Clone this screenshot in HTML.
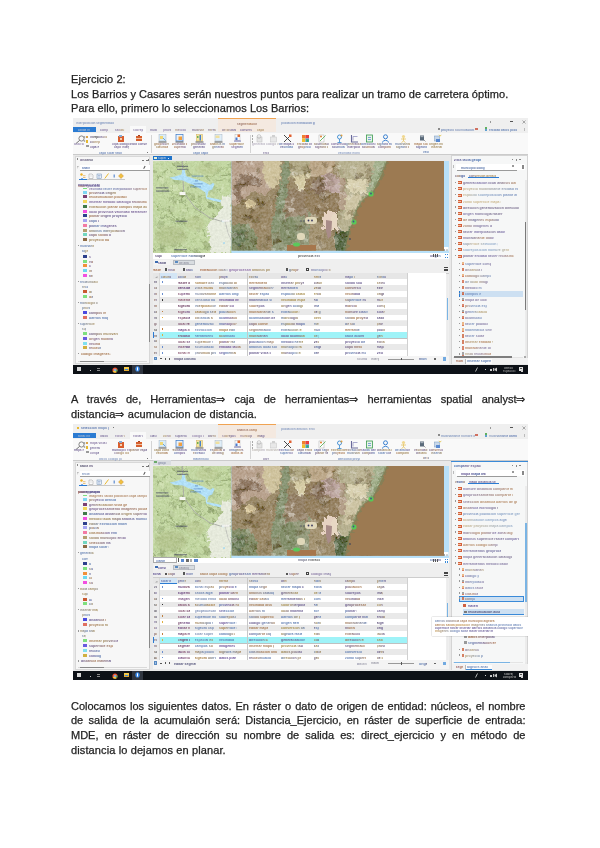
<!DOCTYPE html><html><head><meta charset="utf-8"><style>
html,body{margin:0;padding:0;background:#fff;}
body{width:600px;height:848px;position:relative;overflow:hidden;font-family:"Liberation Sans",sans-serif;color:#141414;}
.ss{position:absolute;width:455px;height:256px;overflow:hidden;}
.ss div{position:absolute;}
.t{position:absolute;margin:0;white-space:nowrap;overflow:hidden;line-height:1;font-weight:bold;-webkit-background-clip:text;background-clip:text;color:transparent;font-family:"Liberation Sans",sans-serif;}
.p{position:absolute;left:71.2px;font-size:11px;line-height:14px;white-space:nowrap;will-change:transform;-webkit-text-stroke:0.25px #222;color:#222;}
.j{width:454.5px;text-align:justify;text-align-last:justify;}
</style></head><body>
<div class="p" style="top:72px;letter-spacing:0.08px">Ejercicio 2:</div>
<div class="p" style="top:87px;letter-spacing:0.058px">Los Barrios y Casares serán nuestros puntos para realizar un tramo de carretera óptimo.</div>
<div class="p" style="top:101.2px;letter-spacing:0.045px">Para ello, primero lo seleccionamos Los Barrios:</div>
<div class="ss" style="left:73px;top:118px;">
<div style="left:0.00px;top:0.00px;width:455.00px;height:15.00px;background:#efefef;"></div>
<div style="left:0.00px;top:15.00px;width:455.00px;height:21.00px;background:#f9f9f9;"></div>
<div style="left:0.00px;top:35.50px;width:455.00px;height:1.20px;background:#cbcbcb;"></div>
<div style="left:0.00px;top:36.50px;width:455.00px;height:210.00px;background:#e9e9e9;"></div>
<p class="t" style="left:3.0px;top:3.7px;width:38.0px;font-size:3.1px;background-image:linear-gradient(90deg,#8899be,#758dbb,#758dbb);opacity:0.96">interpolación segmentación </p>
<div style="left:0.00px;top:8.60px;width:23.00px;height:5.20px;background:#2b7bd2;"></div>
<p class="t" style="left:4.5px;top:10.8px;width:12.0px;font-size:3.1px;background-image:linear-gradient(90deg,#afbed2,#afbed2,#9cb0cc);opacity:1.00">salida mat</p>
<div style="left:57.00px;top:8.00px;width:16.00px;height:7.50px;background:#f9f9f9;"></div>
<p class="t" style="left:27.0px;top:11.2px;width:8.0px;font-size:3.1px;background-image:linear-gradient(90deg,#675a8e,#8875a3);opacity:0.88">compart</p>
<p class="t" style="left:42.0px;top:11.2px;width:10.0px;font-size:3.1px;background-image:linear-gradient(90deg,#675a8e,#8875a3,#a6885a,#a6885a);opacity:0.88">salida c</p>
<p class="t" style="left:60.0px;top:11.2px;width:10.0px;font-size:3.1px;background-image:linear-gradient(90deg,#8875a3,#8375a2,#8875a3,#675a8e);opacity:0.88">sobrepos</p>
<p class="t" style="left:77.0px;top:11.2px;width:7.0px;font-size:3.1px;background-image:linear-gradient(90deg,#675a8e,#675a8e);opacity:0.88">multiv</p>
<p class="t" style="left:90.0px;top:11.2px;width:8.0px;font-size:3.1px;background-image:linear-gradient(90deg,#8875a3,#675a8e);opacity:0.88">provinc</p>
<p class="t" style="left:102.0px;top:11.2px;width:12.0px;font-size:3.1px;background-image:linear-gradient(90deg,#a6885a,#8875a3,#8375a2);opacity:0.88">método loc</p>
<p class="t" style="left:119.0px;top:11.2px;width:12.0px;font-size:3.1px;background-image:linear-gradient(90deg,#5c4e86,#a6885a);opacity:0.88">multivaria</p>
<p class="t" style="left:135.0px;top:11.2px;width:8.0px;font-size:3.1px;background-image:linear-gradient(90deg,#675a8e,#a6885a,#5c4e86,#a6885a);opacity:0.88">herrami</p>
<div style="left:145.20px;top:0.00px;width:58.00px;height:14.00px;background:#f4e9e0;"></div>
<div style="left:145.20px;top:0.00px;width:58.00px;height:1.10px;background:#f0a352;"></div>
<p class="t" style="left:164.0px;top:4.6px;width:20.0px;font-size:3.1px;background-image:linear-gradient(90deg,#956c5f,#956c5f,#aa754c,#956c5f);opacity:0.96">segmentación ac</p>
<p class="t" style="left:149.0px;top:11.2px;width:14.0px;font-size:3.1px;background-image:linear-gradient(90deg,#675a8e,#a6885a,#675a8e,#5c4e86);opacity:0.88">de distanci</p>
<p class="t" style="left:167.0px;top:11.2px;width:12.0px;font-size:3.1px;background-image:linear-gradient(90deg,#675a8e,#675a8e);opacity:0.88">conversión</p>
<p class="t" style="left:184.0px;top:11.2px;width:8.0px;font-size:3.1px;background-image:linear-gradient(90deg,#a6885a,#a6885a);opacity:0.88">capa ca</p>
<p class="t" style="left:208.0px;top:4.1px;width:34.0px;font-size:3.1px;background-image:linear-gradient(90deg,#758dbb,#4c6baa);opacity:0.88">población extracción gen</p>
<div style="left:416.50px;top:3.20px;width:1.00px;height:1.40px;background:#999;"></div>
<div style="left:437.30px;top:3.20px;width:2.60px;height:1.00px;background:#555;"></div>
<svg style="position:absolute;left:448.5px;top:2px" width="4" height="4"><path d="M0.5 0.5 L3.5 3.5 M3.5 0.5 L0.5 3.5" stroke="#777" stroke-width="0.6"/></svg>
<div style="left:365.00px;top:10.00px;width:1.50px;height:1.80px;background:#8a8a8a;"></div>
<p class="t" style="left:368.0px;top:10.7px;width:34.0px;font-size:3.1px;background-image:linear-gradient(90deg,#5a79b0,#8899be,#5a79b0);opacity:0.96">proyecto acumulación com</p>
<div style="left:402.00px;top:10.00px;width:3.00px;height:2.00px;background:#d07060;"></div>
<div style="left:412.00px;top:9.20px;width:1.50px;height:1.50px;background:#60b060;"></div>
<div style="left:412.00px;top:11.20px;width:1.50px;height:1.50px;background:#60a0d0;"></div>
<p class="t" style="left:416.0px;top:10.7px;width:28.0px;font-size:3.1px;background-image:linear-gradient(90deg,#5a79b0,#5a79b0);opacity:0.96">entidad datos poblac</p>
<div style="left:451.00px;top:9.50px;width:0.80px;height:3.00px;background:#bbb;"></div>
<div style="left:455.00px;top:10.50px;width:1.00px;height:1.00px;background:#bbb;"></div>
<div style="left:77.60px;top:16.50px;width:0.70px;height:18.00px;background:#d4d4d4;"></div>
<div style="left:176.80px;top:16.50px;width:0.70px;height:18.00px;background:#d4d4d4;"></div>
<svg style="position:absolute;left:1.5px;top:16.5px" width="11" height="9"><circle cx="6.5" cy="3.5" r="2.6" fill="none" stroke="#6a6a6a" stroke-width="0.8"/><line x1="4.6" y1="5.4" x2="1" y2="8.5" stroke="#6a6a6a" stroke-width="0.9"/><circle cx="9.5" cy="2" r="0.8" fill="#888"/><circle cx="9.5" cy="6" r="0.8" fill="#888"/></svg>
<p class="t" style="left:0.5px;top:25.0px;width:10.0px;font-size:3.1px;background-image:linear-gradient(90deg,#8375a2,#8875a3,#8375a2);opacity:0.96">local sa</p>
<div style="left:13.00px;top:18.00px;width:2.20px;height:1.50px;background:#d9a24a;"></div>
<p class="t" style="left:16.5px;top:18.3px;width:17.0px;font-size:3.1px;background-image:linear-gradient(90deg,#8375a2,#2b2b2b,#8375a2,#a6885a);opacity:1.00">interpolación</p>
<div style="left:13.00px;top:22.20px;width:2.20px;height:2.50px;background:#e5b830;"></div>
<p class="t" style="left:16.5px;top:22.9px;width:10.0px;font-size:3.1px;background-image:linear-gradient(90deg,#675a8e,#a6885a,#a6885a);opacity:0.96">sobrepos</p>
<div style="left:13.00px;top:27.30px;width:2.50px;height:2.00px;background:#9a9a9a;"></div>
<p class="t" style="left:16.5px;top:27.9px;width:9.0px;font-size:3.1px;background-image:linear-gradient(90deg,#8875a3,#5c4e86,#675a8e);opacity:0.96">capa her</p>
<div style="left:44.50px;top:18.30px;width:6.00px;height:5.60px;background:#d95f2e;"></div>
<div style="left:46.00px;top:16.80px;width:3.00px;height:1.60px;background:#e0e8f0;border:0.5px solid #8aaad0;box-sizing:border-box"></div>
<div style="left:47.00px;top:20.00px;width:1.50px;height:1.80px;background:#f4d0b0;"></div>
<p class="t" style="left:38.5px;top:25.0px;width:19.0px;font-size:3.1px;background-image:linear-gradient(90deg,#8875a3,#675a8e,#675a8e,#8375a2);opacity:0.96">capa código ex</p>
<p class="t" style="left:41.0px;top:28.0px;width:15.0px;font-size:3.1px;background-image:linear-gradient(90deg,#675a8e,#8875a3,#5c4e86);opacity:0.96">capa interpo</p>
<div style="left:62.50px;top:18.20px;width:6.50px;height:5.00px;background:#d6602e;"></div>
<div style="left:64.50px;top:17.00px;width:2.50px;height:1.40px;background:#a04020;"></div>
<div style="left:62.50px;top:20.00px;width:6.50px;height:0.60px;background:#f0c0a0;"></div>
<p class="t" style="left:57.0px;top:25.0px;width:17.0px;font-size:3.1px;background-image:linear-gradient(90deg,#675a8e,#675a8e);opacity:0.96">vista convers</p>
<p class="t" style="left:26.0px;top:33.7px;width:23.0px;font-size:3.1px;background-image:linear-gradient(90deg,#5a79b0,#4c6baa);opacity:0.88">capa solar vecind</p>
<div style="left:74.00px;top:33.80px;width:1.00px;height:1.00px;background:#777;"></div>
<svg style="position:absolute;left:84.5px;top:15.8px" width="9" height="9" viewBox="0 0 9 9"><rect x="1" y="0.5" width="7" height="6.5" fill="#d8ecf8" stroke="#9ab" stroke-width="0.4"/><rect x="2" y="2" width="3" height="3" fill="#f0d878"/><path d="M5 4 L7.5 6.5" stroke="#4a90d0" stroke-width="0.8"/><rect x="0.5" y="7.6" width="8" height="0.8" fill="#333"/></svg>
<p class="t" style="left:81.0px;top:25.0px;width:15.0px;font-size:3.1px;background-image:linear-gradient(90deg,#9c8251,#a6754c,#755f95,#9c8251);opacity:0.96">geoprocesami</p>
<p class="t" style="left:83.0px;top:28.0px;width:12.0px;font-size:3.1px;background-image:linear-gradient(90deg,#9c8251,#a6754c);opacity:0.96">clasificac</p>
<svg style="position:absolute;left:102.0px;top:15.8px" width="9" height="9" viewBox="0 0 9 9"><rect x="1" y="0.5" width="7" height="6.5" fill="#eaf2fa" stroke="#3a7ac8" stroke-width="0.7"/><rect x="3.5" y="2.5" width="3.5" height="3.5" fill="#f0a040"/><rect x="0.5" y="7.6" width="8" height="0.8" fill="#333"/></svg>
<p class="t" style="left:98.5px;top:25.0px;width:15.0px;font-size:3.1px;background-image:linear-gradient(90deg,#a6754c,#755f95,#a6754c);opacity:0.96">vecindad bar</p>
<p class="t" style="left:100.5px;top:28.0px;width:12.0px;font-size:3.1px;background-image:linear-gradient(90deg,#a6754c,#755f95);opacity:0.96">superficie</p>
<svg style="position:absolute;left:121.5px;top:15.8px" width="9" height="9" viewBox="0 0 9 9"><rect x="1.5" y="0.5" width="6" height="6.5" fill="#f4e6a0" stroke="#c8a040" stroke-width="0.4"/><rect x="4.5" y="1" width="1.5" height="5.5" fill="#4a80c8"/><rect x="2" y="2" width="1.5" height="2" fill="#70b050"/><rect x="0.5" y="7.6" width="8" height="0.8" fill="#333"/></svg>
<p class="t" style="left:118.0px;top:25.0px;width:15.0px;font-size:3.1px;background-image:linear-gradient(90deg,#9c8251,#755f95,#675a8e);opacity:0.96">provincia ta</p>
<p class="t" style="left:120.0px;top:28.0px;width:12.0px;font-size:3.1px;background-image:linear-gradient(90deg,#675a8e,#675a8e);opacity:0.96">generaliza</p>
<svg style="position:absolute;left:140.5px;top:15.8px" width="9" height="9" viewBox="0 0 9 9"><rect x="1" y="0.5" width="7" height="6.5" fill="#e0eef8" stroke="#9ab" stroke-width="0.4"/><rect x="1.5" y="1.5" width="4" height="2.5" fill="#f0e0a0"/><rect x="0.5" y="7.6" width="8" height="0.8" fill="#333"/></svg>
<p class="t" style="left:137.0px;top:25.0px;width:15.0px;font-size:3.1px;background-image:linear-gradient(90deg,#a6754c,#9c8251,#5a79b0);opacity:0.96">análisis mat</p>
<p class="t" style="left:139.0px;top:28.0px;width:12.0px;font-size:3.1px;background-image:linear-gradient(90deg,#9c8251,#5a79b0,#755f95,#a6754c);opacity:0.96">generaliza</p>
<svg style="position:absolute;left:159.8px;top:15.8px" width="9" height="9" viewBox="0 0 9 9"><rect x="2" y="0.5" width="5" height="6" fill="#fafafa" stroke="#aaa" stroke-width="0.4"/><rect x="4.5" y="0.5" width="2.5" height="2.5" fill="#e06a30"/><rect x="2.5" y="3.5" width="2" height="2.5" fill="#4a7ad0"/><rect x="1" y="6.6" width="7" height="0.9" fill="#6a6aaa"/></svg>
<p class="t" style="left:156.3px;top:25.0px;width:15.0px;font-size:3.1px;background-image:linear-gradient(90deg,#a6754c,#9c8251);opacity:0.96">superficie d</p>
<p class="t" style="left:158.3px;top:28.0px;width:12.0px;font-size:3.1px;background-image:linear-gradient(90deg,#755f95,#755f95,#675a8e,#5a79b0);opacity:0.96">segmentaci</p>
<p class="t" style="left:120.0px;top:33.7px;width:16.0px;font-size:3.1px;background-image:linear-gradient(90deg,#5a79b0,#4c6baa);opacity:0.88">capa capa no</p>
<div style="left:179.00px;top:17.00px;width:0.70px;height:1.50px;background:#aaa;"></div>
<div style="left:179.00px;top:20.00px;width:0.70px;height:1.50px;background:#aaa;"></div>
<div style="left:179.00px;top:23.00px;width:0.70px;height:1.50px;background:#aaa;"></div>
<svg style="position:absolute;left:181.5px;top:16px" width="9" height="9" viewBox="0 0 9 9"><rect x="2" y="3" width="5" height="5" fill="#e4e4e4" stroke="#bbb" stroke-width="0.5"/><circle cx="4" cy="2.5" r="1.8" fill="none" stroke="#b8b8b8" stroke-width="0.7"/></svg>
<svg style="position:absolute;left:195.5px;top:16px" width="9" height="9" viewBox="0 0 9 9"><rect x="1.5" y="3" width="6" height="5" fill="#e8e8e8" stroke="#c4c4c4" stroke-width="0.5"/><rect x="3" y="1" width="3" height="2" fill="#d0d0d0"/></svg>
<p class="t" style="left:179.0px;top:25.0px;width:13.0px;font-size:3.1px;background-image:linear-gradient(90deg,#a39cb0,#a39cb0,#a39cb0);opacity:0.80">generaliza</p>
<p class="t" style="left:193.0px;top:25.0px;width:13.0px;font-size:3.1px;background-image:linear-gradient(90deg,#a39cb0,#a39cb0,#aaa39c);opacity:0.80">código vis</p>
<p class="t" style="left:190.0px;top:33.7px;width:6.0px;font-size:3.1px;background-image:linear-gradient(90deg,#82759c,#82759c,#82759c);opacity:0.96">entida</p>
<svg style="position:absolute;left:209.5px;top:15.8px" width="9" height="9" viewBox="0 0 9 9"><path d="M1 1 L8 8 M1 8 L8 1" stroke="#333" stroke-width="0.9"/><rect x="6" y="0.5" width="2.5" height="2.5" fill="#e06030"/></svg>
<p class="t" style="left:206.0px;top:25.0px;width:15.0px;font-size:3.1px;background-image:linear-gradient(90deg,#5a79b0,#675a8e,#675a8e,#755f95);opacity:0.96">de mapa catá</p>
<p class="t" style="left:207.0px;top:28.0px;width:13.0px;font-size:3.1px;background-image:linear-gradient(90deg,#675a8e,#5a79b0,#5a79b0);opacity:0.96">vecindad d</p>
<svg style="position:absolute;left:227.5px;top:15.8px" width="9" height="9" viewBox="0 0 9 9"><rect x="1" y="1" width="3.5" height="3.5" fill="#f08030"/><rect x="4.5" y="1" width="3.5" height="3.5" fill="#e84040"/><rect x="1" y="4.5" width="3.5" height="3.5" fill="#f0c030"/><rect x="4.5" y="4.5" width="3.5" height="3.5" fill="#40a0e0"/><rect x="5.5" y="5.5" width="2" height="2" fill="#40b050"/></svg>
<p class="t" style="left:224.0px;top:25.0px;width:15.0px;font-size:3.1px;background-image:linear-gradient(90deg,#9c8251,#755f95);opacity:0.96">entidad dist</p>
<p class="t" style="left:225.0px;top:28.0px;width:13.0px;font-size:3.1px;background-image:linear-gradient(90deg,#675a8e,#a6754c,#5a79b0,#5a79b0);opacity:0.96">geoprocesa</p>
<svg style="position:absolute;left:244.5px;top:15.8px" width="9" height="9" viewBox="0 0 9 9"><rect x="1" y="1" width="5" height="7" fill="#fff" stroke="#999" stroke-width="0.4"/><path d="M2 7 L7.5 1.5" stroke="#60b060" stroke-width="0.9"/><circle cx="3" cy="2.5" r="1" fill="#e08030"/></svg>
<p class="t" style="left:241.0px;top:25.0px;width:15.0px;font-size:3.1px;background-image:linear-gradient(90deg,#9c8251,#675a8e,#9c8251,#675a8e);opacity:0.96">acumulación </p>
<p class="t" style="left:242.0px;top:28.0px;width:13.0px;font-size:3.1px;background-image:linear-gradient(90deg,#755f95,#9c8251);opacity:0.96">álgebra cl</p>
<svg style="position:absolute;left:261.5px;top:15.8px" width="9" height="9" viewBox="0 0 9 9"><circle cx="4.5" cy="3" r="2" fill="none" stroke="#3a8ad0" stroke-width="0.9"/><path d="M4.5 5 L4.5 8.5 M2.5 8.5 L6.5 8.5" stroke="#3a8ad0" stroke-width="0.8"/><circle cx="6.5" cy="1.5" r="1" fill="#e0a040"/></svg>
<p class="t" style="left:258.0px;top:25.0px;width:15.0px;font-size:3.1px;background-image:linear-gradient(90deg,#755f95,#675a8e);opacity:0.96">conversión s</p>
<p class="t" style="left:259.0px;top:28.0px;width:13.0px;font-size:3.1px;background-image:linear-gradient(90deg,#675a8e,#5a79b0);opacity:0.96">acumulació</p>
<svg style="position:absolute;left:276.5px;top:15.8px" width="9" height="9" viewBox="0 0 9 9"><path d="M1.5 1 L1.5 8 L8 8" fill="none" stroke="#6a6a9a" stroke-width="1.1"/><path d="M3 6.5 L3 2.5 L7.5 2.5" fill="none" stroke="#a0a0c8" stroke-width="0.9"/></svg>
<p class="t" style="left:273.0px;top:25.0px;width:15.0px;font-size:3.1px;background-image:linear-gradient(90deg,#5a79b0,#9c8251,#755f95,#9c8251);opacity:0.96">generalizaci</p>
<p class="t" style="left:274.0px;top:28.0px;width:13.0px;font-size:3.1px;background-image:linear-gradient(90deg,#755f95,#675a8e,#755f95);opacity:0.96">interpolac</p>
<svg style="position:absolute;left:291.5px;top:15.8px" width="9" height="9" viewBox="0 0 9 9"><rect x="1.5" y="1" width="6" height="7" fill="#e8f4e8" stroke="#3a9a50" stroke-width="0.8"/><path d="M3 3.5 L6 3.5 M3 5.5 L6 5.5" stroke="#4a80c8" stroke-width="0.7"/></svg>
<p class="t" style="left:288.0px;top:25.0px;width:15.0px;font-size:3.1px;background-image:linear-gradient(90deg,#5a79b0,#755f95);opacity:0.96">dirección ma</p>
<p class="t" style="left:289.0px;top:28.0px;width:13.0px;font-size:3.1px;background-image:linear-gradient(90deg,#675a8e,#a6754c,#675a8e);opacity:0.96">acumulació</p>
<svg style="position:absolute;left:307.5px;top:15.8px" width="9" height="9" viewBox="0 0 9 9"><circle cx="4.5" cy="2.8" r="2" fill="none" stroke="#3a80d0" stroke-width="1"/><path d="M1 8.5 Q4.5 4 8 8.5" fill="none" stroke="#3a80d0" stroke-width="1"/></svg>
<p class="t" style="left:304.0px;top:25.0px;width:15.0px;font-size:3.1px;background-image:linear-gradient(90deg,#9c8251,#5a79b0,#675a8e,#5a79b0);opacity:0.96">álgebra méto</p>
<p class="t" style="left:305.0px;top:28.0px;width:13.0px;font-size:3.1px;background-image:linear-gradient(90deg,#755f95,#a6754c);opacity:0.96">compartir </p>
<svg style="position:absolute;left:325.5px;top:15.8px" width="9" height="9" viewBox="0 0 9 9"><circle cx="4.5" cy="2.5" r="1.6" fill="#f0d890"/><path d="M4.5 4 L4.5 7 M2 5 L7 5 M4.5 7 L2.5 8.5 M4.5 7 L6.5 8.5" stroke="#e8c870" stroke-width="0.9"/></svg>
<p class="t" style="left:322.0px;top:25.0px;width:15.0px;font-size:3.1px;background-image:linear-gradient(90deg,#5a79b0,#9c8251);opacity:0.96">multivariant</p>
<p class="t" style="left:323.0px;top:28.0px;width:13.0px;font-size:3.1px;background-image:linear-gradient(90deg,#9c8251,#5a79b0,#a6754c);opacity:0.96">álgebra da</p>
<p class="t" style="left:265.0px;top:33.7px;width:22.0px;font-size:3.1px;background-image:linear-gradient(90deg,#758dbb,#8899be);opacity:0.88">vecindad hidrolo</p>
<svg style="position:absolute;left:344.5px;top:15.8px" width="9" height="9" viewBox="0 0 9 9"><rect x="2" y="1.5" width="4" height="5" fill="#5a6a7a"/><rect x="2.5" y="2.3" width="3" height="0.8" fill="#c0c8d0"/><path d="M6 6 L7.5 7.5" stroke="#777" stroke-width="0.7"/></svg>
<svg style="position:absolute;left:359.5px;top:15.8px" width="9" height="9" viewBox="0 0 9 9"><rect x="1.5" y="2" width="5" height="5" fill="#c8d8ea" stroke="#7a9ac0" stroke-width="0.5"/><path d="M6 0.8 L7 2 L8.3 1.2" stroke="#e0c040" stroke-width="0.8" fill="none"/><rect x="3" y="5" width="4" height="3" fill="#5a8ad0"/></svg>
<p class="t" style="left:341.0px;top:25.0px;width:14.0px;font-size:3.1px;background-image:linear-gradient(90deg,#a6754c,#a6754c,#a6754c);opacity:0.96">mapa solar </p>
<p class="t" style="left:343.0px;top:28.0px;width:11.0px;font-size:3.1px;background-image:linear-gradient(90deg,#675a8e,#5a79b0);opacity:0.96">álgebra c</p>
<p class="t" style="left:356.0px;top:25.0px;width:14.0px;font-size:3.1px;background-image:linear-gradient(90deg,#9c8251,#9c8251);opacity:0.96">origen muni</p>
<p class="t" style="left:358.0px;top:28.0px;width:11.0px;font-size:3.1px;background-image:linear-gradient(90deg,#9c8251,#9c8251);opacity:0.96">insertar </p>
<p class="t" style="left:350.0px;top:33.1px;width:6.0px;font-size:3.1px;background-image:linear-gradient(90deg,#5a79b0,#5a79b0,#5a79b0,#5a79b0);opacity:0.96">vecind</p>
<div style="left:1.80px;top:37.50px;width:75.50px;height:208.50px;background:#f7f7f7;border:0.6px solid #d8d8d8;box-sizing:border-box"></div>
<div style="left:4.00px;top:40.20px;width:1.00px;height:1.50px;background:#888;"></div>
<p class="t" style="left:7.0px;top:40.5px;width:13.0px;font-size:3.5px;background-image:linear-gradient(90deg,#695a82,#44445f);opacity:0.96">distancia</p>
<div style="left:69.00px;top:41.50px;width:2.00px;height:1.00px;background:#777;"></div>
<div style="left:72.50px;top:41.50px;width:2.00px;height:1.00px;background:#777;"></div>
<div style="left:75.00px;top:40.50px;width:0.80px;height:2.50px;background:#777;"></div>
<div style="left:7.00px;top:47.00px;width:70.00px;height:5.00px;background:#ffffff;"></div>
<div style="left:7.00px;top:51.60px;width:70.00px;height:0.70px;background:#9a9a9a;"></div>
<div style="left:3.50px;top:48.00px;width:2.50px;height:2.50px;background:#bbb;clip-path:polygon(0 0,100% 0,60% 60%,60% 100%,40% 100%,40% 60%)"></div>
<p class="t" style="left:9.0px;top:48.9px;width:8.0px;font-size:3.1px;background-image:linear-gradient(90deg,#4c6baa,#4c6baa,#4c6baa,#5a79b0);opacity:0.96">análisi</p>
<div style="left:71.00px;top:47.70px;width:1.20px;height:2.50px;background:#555;transform:rotate(30deg)"></div>
<svg style="position:absolute;left:7px;top:54.5px" width="6" height="6" viewBox="0 0 6 6"><circle cx="1.5" cy="1.5" r="1.2" fill="#f0b020"/><rect x="3" y="2.5" width="2.5" height="0.6" fill="#e0a030"/><rect x="3" y="4" width="2.5" height="0.6" fill="#e0a030"/><rect x="1" y="5" width="2" height="0.6" fill="#3a7ad0"/></svg>
<svg style="position:absolute;left:14.5px;top:54.5px" width="6" height="6" viewBox="0 0 6 6"><path d="M1 1 L4 1 L5 2 L5 5.5 L1 5.5 Z" fill="#fafafa" stroke="#999" stroke-width="0.5"/><path d="M2 3 L4 3" stroke="#bbb" stroke-width="0.4"/></svg>
<svg style="position:absolute;left:22.5px;top:54.5px" width="6" height="6" viewBox="0 0 6 6"><rect x="1" y="1" width="4.5" height="4.5" fill="#e6eef8" stroke="#6a8ab0" stroke-width="0.5"/><path d="M2 2.5 L4.5 2.5 M2 4 L4 4" stroke="#5a7ab0" stroke-width="0.4"/></svg>
<svg style="position:absolute;left:30.5px;top:54.5px" width="5" height="6" viewBox="0 0 5 6"><path d="M4.5 0.5 L0.8 5.5" stroke="#e8b830" stroke-width="1"/></svg>
<svg style="position:absolute;left:39.5px;top:55.5px" width="3" height="4" viewBox="0 0 3 4"><rect x="0.5" y="0.5" width="1.5" height="3" fill="#5a8ad0" opacity="0.8"/></svg>
<svg style="position:absolute;left:45px;top:54.5px" width="6" height="6" viewBox="0 0 6 6"><path d="M3 0.5 L5.5 3 L3 5.5 L0.5 3 Z" fill="#f0c040" stroke="#c08020" stroke-width="0.4"/></svg>
<div style="left:6.00px;top:61.00px;width:8.00px;height:0.90px;background:#2b7bd2;"></div>
<div style="left:14.00px;top:61.30px;width:38.00px;height:0.50px;background:#c8c8c8;"></div>
<p class="t" style="left:5.0px;top:66.9px;width:22.0px;font-size:3.5px;background-image:linear-gradient(90deg,#a35a3e,#5a4c8e,#5a4c8e);opacity:0.96">sobreposición e</p>
<p class="t" style="left:5.0px;top:66.2px;width:22.0px;font-size:3.5px;background-image:linear-gradient(90deg,#5a4c8e,#5a4c8e);opacity:1.00">método insertar</p>
<div style="left:9.50px;top:69.50px;width:4.50px;height:1.50px;background:#7ee07e;"></div>
<p class="t" style="left:16.0px;top:69.8px;width:58.0px;font-size:3.1px;background-image:linear-gradient(90deg,#755f95,#5a79b0,#675a8e,#a6754c);opacity:0.88">vecindad ráster interpolación superficie</p>
<div style="left:9.50px;top:72.60px;width:4.50px;height:3.00px;background:#7fd6f2;"></div>
<p class="t" style="left:16.0px;top:73.6px;width:27.0px;font-size:3.5px;background-image:linear-gradient(90deg,#a6754c,#675a8e,#9c8251);opacity:1.00">provincia origen m</p>
<div style="left:9.50px;top:77.36px;width:4.50px;height:3.00px;background:#7b3f72;"></div>
<p class="t" style="left:16.0px;top:78.4px;width:38.0px;font-size:3.5px;background-image:linear-gradient(90deg,#a6754c,#a6754c);opacity:1.00">reclasificación població</p>
<div style="left:9.50px;top:82.12px;width:4.50px;height:3.00px;background:#f2d65a;"></div>
<p class="t" style="left:16.0px;top:83.1px;width:58.0px;font-size:3.5px;background-image:linear-gradient(90deg,#755f95,#755f95,#755f95,#a6754c);opacity:1.00">insertar método catálogo reclasifica</p>
<div style="left:9.50px;top:86.88px;width:4.50px;height:3.00px;background:#3f7a48;"></div>
<p class="t" style="left:16.0px;top:87.9px;width:58.0px;font-size:3.5px;background-image:linear-gradient(90deg,#9c8251,#a6754c,#9c8251);opacity:1.00">extracción planar campos mapa acumul</p>
<div style="left:9.50px;top:91.64px;width:4.50px;height:3.00px;background:#f24fe0;"></div>
<p class="t" style="left:16.0px;top:92.6px;width:58.0px;font-size:3.5px;background-image:linear-gradient(90deg,#755f95,#755f95,#755f95);opacity:1.00">local provincia vecindad herramienta</p>
<div style="left:9.50px;top:96.40px;width:4.50px;height:3.00px;background:#2d3f8c;"></div>
<p class="t" style="left:16.0px;top:97.4px;width:38.0px;font-size:3.5px;background-image:linear-gradient(90deg,#a6754c,#675a8e,#675a8e);opacity:1.00">planar origen proyecto l</p>
<div style="left:9.50px;top:101.16px;width:4.50px;height:3.00px;background:#a4a4f2;"></div>
<p class="t" style="left:16.0px;top:102.2px;width:10.0px;font-size:3.5px;background-image:linear-gradient(90deg,#675a8e,#5a79b0,#755f95);opacity:1.00">capa da</p>
<div style="left:9.50px;top:105.92px;width:4.50px;height:3.00px;background:#f27aa4;"></div>
<p class="t" style="left:16.0px;top:106.9px;width:28.0px;font-size:3.5px;background-image:linear-gradient(90deg,#675a8e,#5a79b0,#755f95,#675a8e);opacity:1.00">planar imágenes ed</p>
<div style="left:9.50px;top:110.68px;width:4.50px;height:3.00px;background:#b39f6f;"></div>
<p class="t" style="left:16.0px;top:111.7px;width:37.0px;font-size:3.5px;background-image:linear-gradient(90deg,#9c8251,#5a79b0,#9c8251,#675a8e);opacity:1.00">análisis interpolación p</p>
<div style="left:9.50px;top:115.44px;width:4.50px;height:3.00px;background:#72d6c0;"></div>
<p class="t" style="left:16.0px;top:116.4px;width:22.0px;font-size:3.5px;background-image:linear-gradient(90deg,#675a8e,#a6754c,#755f95);opacity:1.00">capa salida dis</p>
<div style="left:9.50px;top:120.20px;width:4.50px;height:3.00px;background:#8c6a44;"></div>
<p class="t" style="left:16.0px;top:121.2px;width:20.0px;font-size:3.5px;background-image:linear-gradient(90deg,#9c8251,#a6754c);opacity:1.00">proyecto tabl</p>
<div style="left:4.50px;top:127.00px;width:1.20px;height:1.20px;background:#999;"></div>
<p class="t" style="left:7.0px;top:127.0px;width:14.0px;font-size:3.1px;background-image:linear-gradient(90deg,#5a79b0,#5a79b0,#5a79b0,#a38851);opacity:0.96">multivarian</p>
<p class="t" style="left:9.0px;top:132.3px;width:6.0px;font-size:3.1px;background-image:linear-gradient(90deg,#5a79b0,#5a79b0,#a38851,#a38851);opacity:0.96">álgebr</p>
<div style="left:9.50px;top:136.70px;width:4.50px;height:3.00px;background:#2d3f8c;"></div>
<p class="t" style="left:16.0px;top:137.7px;width:1.7px;font-size:3.5px;background-image:linear-gradient(90deg,#a6754c,#755f95,#755f95,#755f95);opacity:1.00">sup</p>
<div style="left:9.50px;top:141.50px;width:4.50px;height:3.00px;background:#7ee07e;"></div>
<p class="t" style="left:16.0px;top:142.5px;width:3.9px;font-size:3.5px;background-image:linear-gradient(90deg,#9c8251,#755f95,#a6754c);opacity:1.00">edit</p>
<div style="left:9.50px;top:146.30px;width:4.50px;height:3.00px;background:#f0903a;"></div>
<p class="t" style="left:16.0px;top:147.3px;width:1.9px;font-size:3.5px;background-image:linear-gradient(90deg,#755f95,#755f95);opacity:1.00">com</p>
<div style="left:9.50px;top:151.10px;width:4.50px;height:3.00px;background:#6ad8f0;"></div>
<p class="t" style="left:16.0px;top:152.1px;width:3.3px;font-size:3.5px;background-image:linear-gradient(90deg,#9c8251,#a6754c,#9c8251,#755f95);opacity:1.00">ins</p>
<div style="left:9.50px;top:155.90px;width:4.50px;height:3.00px;background:#f24fe0;"></div>
<p class="t" style="left:16.0px;top:156.9px;width:3.6px;font-size:3.5px;background-image:linear-gradient(90deg,#675a8e,#755f95,#9c8251,#675a8e);opacity:1.00">rást</p>
<div style="left:4.50px;top:162.60px;width:1.20px;height:1.20px;background:#999;"></div>
<p class="t" style="left:7.0px;top:162.7px;width:18.0px;font-size:3.1px;background-image:linear-gradient(90deg,#5a79b0,#a38851);opacity:0.96">reclasificació</p>
<p class="t" style="left:9.0px;top:167.6px;width:6.0px;font-size:3.1px;background-image:linear-gradient(90deg,#5a79b0,#a38851,#5a79b0,#5a79b0);opacity:0.96">reclas</p>
<div style="left:9.50px;top:172.30px;width:4.50px;height:3.00px;background:#c85a30;"></div>
<p class="t" style="left:16.0px;top:173.3px;width:3.0px;font-size:3.5px;background-image:linear-gradient(90deg,#9c8251,#9c8251,#9c8251,#5a79b0);opacity:1.00">dis</p>
<div style="left:9.50px;top:176.70px;width:4.50px;height:3.00px;background:#7ee07e;"></div>
<p class="t" style="left:16.0px;top:177.7px;width:4.0px;font-size:3.5px;background-image:linear-gradient(90deg,#9c8251,#a6754c,#5a79b0);opacity:1.00">dato</p>
<div style="left:4.50px;top:183.80px;width:1.20px;height:1.20px;background:#999;"></div>
<p class="t" style="left:7.0px;top:183.9px;width:18.0px;font-size:3.1px;background-image:linear-gradient(90deg,#5a79b0,#a38851,#828282);opacity:0.96">hidrología ori</p>
<p class="t" style="left:9.0px;top:188.9px;width:8.0px;font-size:3.1px;background-image:linear-gradient(90deg,#5a79b0,#a38851,#5a79b0);opacity:0.96">provinc</p>
<div style="left:9.50px;top:192.80px;width:4.50px;height:3.00px;background:#4a4ae0;"></div>
<p class="t" style="left:16.0px;top:193.8px;width:17.0px;font-size:3.5px;background-image:linear-gradient(90deg,#675a8e,#a6754c);opacity:1.00">campos métod</p>
<div style="left:9.50px;top:197.80px;width:4.50px;height:3.00px;background:#e07060;"></div>
<p class="t" style="left:16.0px;top:198.8px;width:19.0px;font-size:3.5px;background-image:linear-gradient(90deg,#5a79b0,#5a79b0);opacity:1.00">barrios mapa </p>
<div style="left:4.50px;top:205.10px;width:1.20px;height:1.20px;background:#999;"></div>
<p class="t" style="left:7.0px;top:205.2px;width:15.0px;font-size:3.1px;background-image:linear-gradient(90deg,#5a79b0,#a38851);opacity:0.96">superficie c</p>
<p class="t" style="left:9.0px;top:210.1px;width:4.0px;font-size:3.1px;background-image:linear-gradient(90deg,#5a79b0,#a38851,#5a79b0);opacity:0.96">supe</p>
<div style="left:9.50px;top:214.10px;width:4.50px;height:3.00px;background:#7ee07e;"></div>
<p class="t" style="left:16.0px;top:215.1px;width:29.0px;font-size:3.5px;background-image:linear-gradient(90deg,#675a8e,#9c8251,#9c8251);opacity:1.00">campos multivariant</p>
<div style="left:9.50px;top:218.85px;width:4.50px;height:3.00px;background:#6a5ae0;"></div>
<p class="t" style="left:16.0px;top:219.8px;width:24.0px;font-size:3.5px;background-image:linear-gradient(90deg,#a6754c,#755f95,#a6754c,#755f95);opacity:1.00">origen multivari</p>
<div style="left:9.50px;top:223.60px;width:4.50px;height:3.00px;background:#7fe0f0;"></div>
<p class="t" style="left:16.0px;top:224.6px;width:11.0px;font-size:3.5px;background-image:linear-gradient(90deg,#755f95,#a6754c);opacity:1.00">vecindad</p>
<div style="left:9.50px;top:228.35px;width:4.50px;height:3.00px;background:#d0b040;"></div>
<p class="t" style="left:16.0px;top:229.3px;width:12.0px;font-size:3.5px;background-image:linear-gradient(90deg,#755f95,#a6754c,#a6754c,#5a79b0);opacity:1.00">reclasifi</p>
<div style="left:5.00px;top:235.10px;width:1.00px;height:1.20px;background:#999;"></div>
<p class="t" style="left:8.0px;top:235.2px;width:30.0px;font-size:3.5px;background-image:linear-gradient(90deg,#a6754c,#a6754c,#a6754c);opacity:1.00">código imágenes zon</p>
<div style="left:75.50px;top:166.00px;width:0.80px;height:58.00px;background:#8a8a8a;"></div>
<div style="left:5.00px;top:243.00px;width:69.00px;height:1.20px;background:#dadada;"></div>
<div style="left:7.00px;top:242.80px;width:24.00px;height:1.50px;background:#8a8a8a;"></div>
<div style="left:80.00px;top:37.60px;width:19.00px;height:4.80px;background:#1f73c9;"></div>
<div style="left:81.00px;top:38.50px;width:2.80px;height:2.80px;background:#e8f0d8;"></div>
<p class="t" style="left:85.0px;top:39.4px;width:8.0px;font-size:3.1px;background-image:linear-gradient(90deg,#bec8d8,#bec8d8);opacity:1.00">superfi</p>
<div style="left:94.50px;top:39.50px;width:1.50px;height:1.00px;background:#d8e8ff;"></div>
<div style="left:80px;top:43px;width:296px;height:92px;overflow:hidden"><svg width="296" height="92" viewBox="0 0 296 92" style="position:absolute;left:0;top:0">
<defs>
<filter id="bl" x="-30%" y="-30%" width="160%" height="160%"><feGaussianBlur stdDeviation="1.6"/></filter>
<filter id="bl1" x="-30%" y="-30%" width="160%" height="160%"><feGaussianBlur stdDeviation="0.6"/></filter>
<filter id="nz" x="0" y="0" width="100%" height="100%"><feTurbulence type="fractalNoise" baseFrequency="0.35" numOctaves="2" seed="3"/><feColorMatrix type="matrix" values="0 0 0 0 0.45  0 0 0 0 0.4  0 0 0 0 0.3  0 0 0 1.6 -0.75"/></filter>
<filter id="nz2" x="0" y="0" width="100%" height="100%"><feTurbulence type="fractalNoise" baseFrequency="0.12" numOctaves="3" seed="9"/><feColorMatrix type="matrix" values="0 0 0 0 0.55  0 0 0 0 0.62  0 0 0 0 0.42  0 0 0 1.4 -0.62"/></filter>
<filter id="tex" x="0" y="0" width="100%" height="100%"><feTurbulence type="fractalNoise" baseFrequency="0.45" numOctaves="2" seed="5" result="n"/><feColorMatrix in="n" type="matrix" values="1 0 0 0 0  1 0 0 0 0  1 0 0 0 0  0 0 0 0 1" result="g"/><feComposite in="SourceGraphic" in2="g" operator="arithmetic" k1="0" k2="1" k3="0.2" k4="-0.1"/></filter>
<filter id="disp" x="-10%" y="-10%" width="120%" height="120%"><feTurbulence type="fractalNoise" baseFrequency="0.25" numOctaves="2" seed="12" result="t"/><feDisplacementMap in="SourceGraphic" in2="t" scale="7" xChannelSelector="R" yChannelSelector="G"/></filter>
<clipPath id="topo"><rect x="0" y="0" width="78.5" height="92"/></clipPath>
<clipPath id="sat"><rect x="78.5" y="0" width="212.5" height="89.7"/></clipPath>
</defs>
<g id="mapbody">
<rect x="0" y="0" width="296" height="92" fill="#b8e0f8"/>
<rect x="290.5" y="86" width="5" height="3.7" fill="#ffffff"/><rect x="291" y="88.5" width="1" height="1" fill="#555"/><rect x="293.5" y="88.5" width="1" height="1" fill="#555"/>
<g clip-path="url(#topo)" filter="url(#tex)">
<rect x="0" y="0" width="78.5" height="92" fill="#c3d7a3"/>
<g filter="url(#disp)"><ellipse cx="17.8" cy="88.5" rx="1.4" ry="2.8" fill="#e8f0d0" opacity="0.14"/><ellipse cx="78.4" cy="19.3" rx="3.2" ry="2.1" fill="#4a5a2a" opacity="0.19"/><ellipse cx="15.1" cy="76.4" rx="1.3" ry="1.6" fill="#e8f0d0" opacity="0.15"/><ellipse cx="32.0" cy="83.0" rx="2.3" ry="1.3" fill="#e8f0d0" opacity="0.28"/><ellipse cx="5.0" cy="57.1" rx="2.3" ry="2.7" fill="#e8f0d0" opacity="0.22"/><ellipse cx="39.1" cy="59.8" rx="4.2" ry="2.5" fill="#e8f0d0" opacity="0.11"/><ellipse cx="74.3" cy="45.0" rx="1.7" ry="3.4" fill="#4a5a2a" opacity="0.23"/><ellipse cx="69.2" cy="26.3" rx="2.2" ry="3.2" fill="#e8f0d0" opacity="0.24"/><ellipse cx="7.7" cy="63.5" rx="3.5" ry="3.4" fill="#4a5a2a" opacity="0.19"/><ellipse cx="15.5" cy="13.8" rx="2.9" ry="2.3" fill="#e8f0d0" opacity="0.26"/><ellipse cx="39.8" cy="64.5" rx="1.8" ry="1.6" fill="#e8f0d0" opacity="0.16"/><ellipse cx="20.9" cy="39.0" rx="2.3" ry="3.1" fill="#4a5a2a" opacity="0.13"/><ellipse cx="31.1" cy="15.3" rx="3.3" ry="3.4" fill="#e8f0d0" opacity="0.24"/><ellipse cx="23.6" cy="1.2" rx="3.7" ry="1.9" fill="#e8f0d0" opacity="0.18"/><ellipse cx="18.2" cy="37.7" rx="2.6" ry="2.0" fill="#4a5a2a" opacity="0.15"/><ellipse cx="7.5" cy="7.8" rx="1.4" ry="2.3" fill="#e8f0d0" opacity="0.25"/><ellipse cx="39.6" cy="65.2" rx="4.4" ry="1.2" fill="#e8f0d0" opacity="0.13"/><ellipse cx="30.3" cy="52.8" rx="3.6" ry="1.9" fill="#4a5a2a" opacity="0.10"/><ellipse cx="65.6" cy="19.3" rx="4.1" ry="1.1" fill="#4a5a2a" opacity="0.24"/><ellipse cx="77.8" cy="53.4" rx="1.6" ry="3.4" fill="#4a5a2a" opacity="0.12"/><ellipse cx="47.5" cy="45.7" rx="2.7" ry="1.4" fill="#e8f0d0" opacity="0.20"/><ellipse cx="35.5" cy="11.6" rx="2.5" ry="2.8" fill="#4a5a2a" opacity="0.18"/><ellipse cx="30.9" cy="33.2" rx="1.8" ry="1.5" fill="#4a5a2a" opacity="0.12"/><ellipse cx="56.9" cy="65.2" rx="3.1" ry="1.1" fill="#e8f0d0" opacity="0.18"/><ellipse cx="7.3" cy="89.0" rx="3.6" ry="2.3" fill="#4a5a2a" opacity="0.14"/><ellipse cx="18.0" cy="48.4" rx="3.6" ry="2.6" fill="#e8f0d0" opacity="0.21"/><ellipse cx="71.3" cy="68.4" rx="4.2" ry="3.5" fill="#e8f0d0" opacity="0.15"/><ellipse cx="43.0" cy="89.9" rx="2.3" ry="3.4" fill="#4a5a2a" opacity="0.19"/><ellipse cx="49.1" cy="88.0" rx="3.7" ry="1.7" fill="#4a5a2a" opacity="0.14"/><ellipse cx="29.0" cy="88.2" rx="4.0" ry="1.8" fill="#e8f0d0" opacity="0.21"/><ellipse cx="66.1" cy="63.0" rx="4.3" ry="2.8" fill="#4a5a2a" opacity="0.21"/><ellipse cx="28.4" cy="39.3" rx="2.7" ry="2.3" fill="#4a5a2a" opacity="0.15"/><ellipse cx="5.4" cy="67.4" rx="1.9" ry="2.0" fill="#e8f0d0" opacity="0.25"/><ellipse cx="21.5" cy="26.8" rx="3.8" ry="2.3" fill="#e8f0d0" opacity="0.26"/><ellipse cx="32.3" cy="33.2" rx="4.4" ry="3.0" fill="#4a5a2a" opacity="0.14"/><ellipse cx="63.8" cy="54.9" rx="3.9" ry="1.9" fill="#4a5a2a" opacity="0.24"/><ellipse cx="30.5" cy="60.2" rx="3.7" ry="3.5" fill="#4a5a2a" opacity="0.24"/><ellipse cx="10.7" cy="56.1" rx="3.4" ry="1.2" fill="#4a5a2a" opacity="0.26"/><ellipse cx="71.1" cy="85.1" rx="1.3" ry="2.5" fill="#4a5a2a" opacity="0.22"/><ellipse cx="25.1" cy="3.6" rx="4.2" ry="3.1" fill="#4a5a2a" opacity="0.17"/><ellipse cx="65.0" cy="75.0" rx="3.5" ry="2.5" fill="#e8f0d0" opacity="0.15"/><ellipse cx="28.1" cy="30.1" rx="2.8" ry="1.3" fill="#4a5a2a" opacity="0.16"/><ellipse cx="12.5" cy="23.5" rx="2.4" ry="2.1" fill="#4a5a2a" opacity="0.12"/><ellipse cx="17.5" cy="27.0" rx="1.6" ry="2.9" fill="#e8f0d0" opacity="0.11"/><ellipse cx="43.6" cy="67.7" rx="3.9" ry="2.4" fill="#e8f0d0" opacity="0.26"/><ellipse cx="57.8" cy="44.1" rx="3.0" ry="3.3" fill="#4a5a2a" opacity="0.27"/><ellipse cx="10.4" cy="30.1" rx="2.4" ry="1.4" fill="#4a5a2a" opacity="0.11"/><ellipse cx="69.7" cy="53.9" rx="3.1" ry="2.0" fill="#4a5a2a" opacity="0.20"/><ellipse cx="70.4" cy="84.9" rx="3.4" ry="3.5" fill="#4a5a2a" opacity="0.17"/><ellipse cx="66.3" cy="48.6" rx="2.1" ry="2.7" fill="#4a5a2a" opacity="0.12"/><ellipse cx="65.8" cy="46.0" rx="4.4" ry="2.3" fill="#4a5a2a" opacity="0.15"/><ellipse cx="17.1" cy="48.4" rx="3.7" ry="3.1" fill="#4a5a2a" opacity="0.12"/><ellipse cx="30.9" cy="3.2" rx="2.3" ry="3.4" fill="#e8f0d0" opacity="0.23"/><ellipse cx="48.8" cy="13.2" rx="3.4" ry="1.2" fill="#e8f0d0" opacity="0.20"/><ellipse cx="10.0" cy="88.7" rx="2.5" ry="2.6" fill="#4a5a2a" opacity="0.12"/><ellipse cx="78.4" cy="3.6" rx="3.1" ry="2.6" fill="#4a5a2a" opacity="0.16"/><ellipse cx="74.3" cy="59.8" rx="2.7" ry="1.4" fill="#e8f0d0" opacity="0.17"/><ellipse cx="27.2" cy="34.2" rx="3.8" ry="1.9" fill="#4a5a2a" opacity="0.11"/><ellipse cx="11.0" cy="65.3" rx="4.1" ry="1.8" fill="#e8f0d0" opacity="0.14"/><ellipse cx="28.3" cy="33.7" rx="3.0" ry="1.8" fill="#4a5a2a" opacity="0.24"/><ellipse cx="61.5" cy="68.2" rx="3.0" ry="1.7" fill="#4a5a2a" opacity="0.15"/><ellipse cx="67.5" cy="41.1" rx="3.2" ry="2.2" fill="#4a5a2a" opacity="0.16"/><ellipse cx="45.4" cy="67.8" rx="2.3" ry="2.5" fill="#4a5a2a" opacity="0.18"/><ellipse cx="30.1" cy="50.3" rx="3.5" ry="1.4" fill="#e8f0d0" opacity="0.25"/><ellipse cx="6.9" cy="73.0" rx="3.7" ry="1.5" fill="#4a5a2a" opacity="0.15"/><ellipse cx="69.2" cy="18.2" rx="1.4" ry="1.1" fill="#4a5a2a" opacity="0.14"/><ellipse cx="24.7" cy="89.9" rx="3.6" ry="2.8" fill="#4a5a2a" opacity="0.22"/><ellipse cx="0.9" cy="74.8" rx="2.2" ry="3.1" fill="#e8f0d0" opacity="0.26"/><ellipse cx="0.0" cy="90.2" rx="1.3" ry="2.3" fill="#4a5a2a" opacity="0.28"/><ellipse cx="56.3" cy="90.3" rx="4.2" ry="2.1" fill="#e8f0d0" opacity="0.13"/><ellipse cx="55.7" cy="87.5" rx="3.3" ry="1.9" fill="#4a5a2a" opacity="0.22"/><ellipse cx="19.9" cy="63.8" rx="1.7" ry="1.1" fill="#e8f0d0" opacity="0.19"/><ellipse cx="54.6" cy="20.8" rx="2.4" ry="2.7" fill="#e8f0d0" opacity="0.19"/><ellipse cx="47.3" cy="37.4" rx="1.7" ry="2.7" fill="#4a5a2a" opacity="0.13"/><ellipse cx="63.4" cy="60.3" rx="4.0" ry="3.0" fill="#4a5a2a" opacity="0.23"/><ellipse cx="24.7" cy="60.1" rx="1.3" ry="1.9" fill="#4a5a2a" opacity="0.26"/><ellipse cx="53.7" cy="83.6" rx="4.0" ry="3.4" fill="#4a5a2a" opacity="0.21"/><ellipse cx="36.8" cy="20.4" rx="3.8" ry="2.5" fill="#e8f0d0" opacity="0.14"/><ellipse cx="17.3" cy="66.5" rx="3.1" ry="1.5" fill="#4a5a2a" opacity="0.20"/><ellipse cx="20.9" cy="40.9" rx="4.5" ry="1.4" fill="#e8f0d0" opacity="0.21"/><ellipse cx="65.9" cy="84.8" rx="2.4" ry="2.9" fill="#e8f0d0" opacity="0.17"/><ellipse cx="67.3" cy="61.2" rx="2.6" ry="2.5" fill="#4a5a2a" opacity="0.20"/><ellipse cx="69.4" cy="89.8" rx="1.7" ry="2.9" fill="#4a5a2a" opacity="0.21"/><ellipse cx="39.3" cy="34.3" rx="2.7" ry="2.5" fill="#4a5a2a" opacity="0.12"/><ellipse cx="78.4" cy="25.4" rx="2.9" ry="1.5" fill="#4a5a2a" opacity="0.11"/><ellipse cx="26.3" cy="35.4" rx="2.1" ry="2.2" fill="#e8f0d0" opacity="0.19"/><ellipse cx="62.5" cy="57.8" rx="4.4" ry="3.4" fill="#4a5a2a" opacity="0.18"/><ellipse cx="59.9" cy="80.9" rx="2.9" ry="2.7" fill="#4a5a2a" opacity="0.19"/><ellipse cx="39.9" cy="36.9" rx="2.6" ry="2.2" fill="#4a5a2a" opacity="0.13"/><ellipse cx="9.2" cy="85.0" rx="2.8" ry="2.7" fill="#4a5a2a" opacity="0.23"/><ellipse cx="44.5" cy="87.6" rx="3.2" ry="2.1" fill="#e8f0d0" opacity="0.13"/><ellipse cx="62.2" cy="82.5" rx="2.2" ry="2.3" fill="#4a5a2a" opacity="0.21"/><ellipse cx="21.6" cy="83.8" rx="2.9" ry="2.8" fill="#4a5a2a" opacity="0.18"/><ellipse cx="55.0" cy="17.5" rx="2.9" ry="2.6" fill="#4a5a2a" opacity="0.15"/><ellipse cx="14.2" cy="9.3" rx="1.4" ry="1.5" fill="#4a5a2a" opacity="0.20"/><ellipse cx="55.4" cy="40.3" rx="3.7" ry="1.1" fill="#e8f0d0" opacity="0.12"/><ellipse cx="40.5" cy="52.7" rx="3.0" ry="2.1" fill="#e8f0d0" opacity="0.16"/><ellipse cx="8.3" cy="17.8" rx="2.7" ry="2.4" fill="#e8f0d0" opacity="0.25"/><ellipse cx="2.2" cy="11.6" rx="2.6" ry="1.8" fill="#4a5a2a" opacity="0.22"/><ellipse cx="46.7" cy="72.2" rx="2.6" ry="2.7" fill="#e8f0d0" opacity="0.12"/><ellipse cx="5.8" cy="16.7" rx="2.6" ry="1.7" fill="#4a5a2a" opacity="0.22"/><ellipse cx="72.2" cy="13.8" rx="4.4" ry="1.0" fill="#4a5a2a" opacity="0.28"/><ellipse cx="28.7" cy="73.5" rx="2.8" ry="2.4" fill="#4a5a2a" opacity="0.27"/><ellipse cx="23.6" cy="20.2" rx="4.2" ry="2.5" fill="#4a5a2a" opacity="0.14"/><ellipse cx="66.7" cy="14.7" rx="1.5" ry="1.7" fill="#4a5a2a" opacity="0.17"/><ellipse cx="34.6" cy="26.6" rx="1.3" ry="2.1" fill="#4a5a2a" opacity="0.16"/><ellipse cx="57.4" cy="28.5" rx="4.4" ry="3.3" fill="#4a5a2a" opacity="0.12"/><ellipse cx="43.9" cy="57.1" rx="3.3" ry="2.1" fill="#4a5a2a" opacity="0.28"/><ellipse cx="55.1" cy="3.8" rx="3.2" ry="2.6" fill="#4a5a2a" opacity="0.27"/><ellipse cx="4.1" cy="1.6" rx="3.5" ry="1.3" fill="#e8f0d0" opacity="0.25"/><line x1="74.6" y1="85.3" x2="78.7" y2="87.3" stroke="#7a9058" stroke-width="1.1" opacity="0.40"/><line x1="24.0" y1="54.5" x2="29.0" y2="63.3" stroke="#7a9058" stroke-width="0.9" opacity="0.31"/><line x1="56.4" y1="89.5" x2="65.8" y2="99.2" stroke="#7a9058" stroke-width="0.6" opacity="0.26"/><line x1="2.1" y1="41.8" x2="8.8" y2="44.6" stroke="#7a9058" stroke-width="1.0" opacity="0.34"/><line x1="18.4" y1="2.1" x2="23.8" y2="7.0" stroke="#7a9058" stroke-width="1.1" opacity="0.48"/><line x1="14.2" y1="80.4" x2="19.4" y2="69.7" stroke="#7a9058" stroke-width="1.2" opacity="0.41"/><line x1="27.6" y1="88.3" x2="39.4" y2="95.1" stroke="#7a9058" stroke-width="1.0" opacity="0.39"/><line x1="41.4" y1="44.1" x2="53.3" y2="49.9" stroke="#7a9058" stroke-width="1.3" opacity="0.29"/><line x1="70.2" y1="41.5" x2="75.8" y2="33.6" stroke="#7a9058" stroke-width="0.8" opacity="0.33"/><line x1="25.3" y1="63.0" x2="30.2" y2="60.0" stroke="#7a9058" stroke-width="0.8" opacity="0.45"/><line x1="74.7" y1="63.6" x2="82.1" y2="68.8" stroke="#7a9058" stroke-width="0.8" opacity="0.36"/><line x1="16.2" y1="46.1" x2="21.9" y2="58.1" stroke="#7a9058" stroke-width="1.2" opacity="0.43"/><line x1="70.8" y1="17.2" x2="80.2" y2="23.8" stroke="#7a9058" stroke-width="0.8" opacity="0.26"/><line x1="68.3" y1="9.6" x2="76.3" y2="5.0" stroke="#7a9058" stroke-width="1.3" opacity="0.24"/><line x1="33.0" y1="64.5" x2="35.2" y2="68.3" stroke="#7a9058" stroke-width="0.7" opacity="0.38"/><line x1="74.5" y1="2.3" x2="80.8" y2="11.6" stroke="#7a9058" stroke-width="0.7" opacity="0.42"/><line x1="14.3" y1="62.2" x2="21.8" y2="64.6" stroke="#7a9058" stroke-width="0.6" opacity="0.23"/><line x1="26.8" y1="55.4" x2="34.0" y2="64.3" stroke="#7a9058" stroke-width="1.0" opacity="0.19"/><line x1="59.7" y1="66.6" x2="65.9" y2="55.1" stroke="#7a9058" stroke-width="1.0" opacity="0.39"/><line x1="17.6" y1="59.5" x2="22.6" y2="64.6" stroke="#7a9058" stroke-width="0.7" opacity="0.44"/><line x1="45.6" y1="35.4" x2="54.3" y2="38.4" stroke="#7a9058" stroke-width="1.1" opacity="0.26"/><line x1="32.7" y1="1.6" x2="36.7" y2="10.4" stroke="#7a9058" stroke-width="0.7" opacity="0.19"/><line x1="7.5" y1="57.2" x2="11.3" y2="48.9" stroke="#7a9058" stroke-width="0.8" opacity="0.48"/><line x1="34.7" y1="22.6" x2="43.5" y2="27.1" stroke="#7a9058" stroke-width="0.8" opacity="0.39"/><line x1="33.0" y1="47.4" x2="35.7" y2="50.4" stroke="#7a9058" stroke-width="1.2" opacity="0.21"/><line x1="18.8" y1="9.0" x2="21.9" y2="13.9" stroke="#7a9058" stroke-width="1.0" opacity="0.34"/><line x1="24.2" y1="57.8" x2="26.6" y2="52.1" stroke="#7a9058" stroke-width="0.9" opacity="0.40"/><line x1="39.9" y1="52.3" x2="43.3" y2="55.3" stroke="#7a9058" stroke-width="0.7" opacity="0.23"/><line x1="62.6" y1="33.0" x2="68.7" y2="26.1" stroke="#7a9058" stroke-width="1.4" opacity="0.27"/><line x1="29.0" y1="1.7" x2="35.6" y2="10.4" stroke="#7a9058" stroke-width="1.1" opacity="0.43"/><line x1="1.2" y1="40.6" x2="5.5" y2="47.5" stroke="#7a9058" stroke-width="0.7" opacity="0.36"/><line x1="22.2" y1="33.6" x2="33.8" y2="40.2" stroke="#7a9058" stroke-width="1.1" opacity="0.24"/><line x1="30.6" y1="41.7" x2="35.9" y2="51.9" stroke="#7a9058" stroke-width="0.7" opacity="0.22"/><line x1="66.3" y1="57.7" x2="71.5" y2="70.2" stroke="#7a9058" stroke-width="1.2" opacity="0.38"/><line x1="56.4" y1="44.8" x2="63.2" y2="48.3" stroke="#7a9058" stroke-width="1.0" opacity="0.26"/><line x1="37.2" y1="85.9" x2="43.2" y2="75.5" stroke="#7a9058" stroke-width="0.8" opacity="0.27"/><line x1="38.1" y1="23.3" x2="45.8" y2="26.4" stroke="#7a9058" stroke-width="1.3" opacity="0.36"/><line x1="7.5" y1="32.0" x2="17.0" y2="42.3" stroke="#7a9058" stroke-width="0.7" opacity="0.20"/><line x1="69.8" y1="89.0" x2="76.1" y2="97.4" stroke="#7a9058" stroke-width="1.1" opacity="0.25"/><line x1="53.1" y1="39.5" x2="60.1" y2="45.5" stroke="#7a9058" stroke-width="1.2" opacity="0.46"/><line x1="7.5" y1="46.5" x2="17.8" y2="50.8" stroke="#7a9058" stroke-width="1.2" opacity="0.32"/><line x1="31.5" y1="89.6" x2="37.2" y2="99.9" stroke="#7a9058" stroke-width="0.6" opacity="0.31"/><line x1="46.4" y1="79.4" x2="50.6" y2="83.4" stroke="#7a9058" stroke-width="1.2" opacity="0.30"/><line x1="73.1" y1="63.5" x2="80.3" y2="58.6" stroke="#7a9058" stroke-width="1.1" opacity="0.40"/><line x1="59.4" y1="76.7" x2="63.6" y2="81.3" stroke="#7a9058" stroke-width="1.4" opacity="0.38"/><line x1="49.5" y1="1.0" x2="53.5" y2="-6.6" stroke="#7a9058" stroke-width="1.3" opacity="0.38"/><line x1="1.3" y1="84.9" x2="11.8" y2="89.1" stroke="#7a9058" stroke-width="0.7" opacity="0.45"/><line x1="63.6" y1="69.0" x2="67.7" y2="64.6" stroke="#7a9058" stroke-width="1.2" opacity="0.24"/><line x1="10.8" y1="55.1" x2="17.2" y2="60.4" stroke="#7a9058" stroke-width="0.8" opacity="0.32"/><line x1="75.4" y1="6.6" x2="79.0" y2="8.3" stroke="#7a9058" stroke-width="1.2" opacity="0.38"/><line x1="37.8" y1="60.7" x2="43.2" y2="65.7" stroke="#7a9058" stroke-width="0.7" opacity="0.19"/><line x1="58.8" y1="15.6" x2="67.9" y2="8.5" stroke="#7a9058" stroke-width="1.2" opacity="0.38"/><line x1="67.4" y1="12.1" x2="71.4" y2="16.1" stroke="#7a9058" stroke-width="0.6" opacity="0.27"/><line x1="43.5" y1="87.0" x2="48.5" y2="92.8" stroke="#7a9058" stroke-width="1.3" opacity="0.31"/><line x1="24.1" y1="58.4" x2="32.3" y2="61.7" stroke="#7a9058" stroke-width="1.3" opacity="0.20"/><line x1="23.7" y1="58.2" x2="31.7" y2="67.1" stroke="#7a9058" stroke-width="0.7" opacity="0.43"/><line x1="49.4" y1="35.2" x2="54.3" y2="27.3" stroke="#7a9058" stroke-width="0.8" opacity="0.37"/><line x1="18.2" y1="41.2" x2="24.1" y2="43.3" stroke="#7a9058" stroke-width="1.3" opacity="0.21"/><line x1="29.6" y1="32.8" x2="34.6" y2="37.9" stroke="#7a9058" stroke-width="1.0" opacity="0.23"/><line x1="22.8" y1="80.5" x2="33.5" y2="88.2" stroke="#7a9058" stroke-width="0.9" opacity="0.46"/><line x1="7.8" y1="21.4" x2="11.6" y2="25.9" stroke="#7a9058" stroke-width="1.2" opacity="0.29"/><line x1="18.2" y1="72.8" x2="27.4" y2="77.3" stroke="#7a9058" stroke-width="1.3" opacity="0.28"/><line x1="72.2" y1="45.2" x2="78.4" y2="36.3" stroke="#7a9058" stroke-width="1.3" opacity="0.41"/><line x1="73.0" y1="67.8" x2="84.0" y2="76.1" stroke="#7a9058" stroke-width="0.9" opacity="0.38"/><line x1="30.8" y1="15.7" x2="40.6" y2="25.2" stroke="#7a9058" stroke-width="0.7" opacity="0.45"/><line x1="74.9" y1="11.4" x2="77.7" y2="14.7" stroke="#7a9058" stroke-width="1.3" opacity="0.46"/><line x1="59.4" y1="39.3" x2="67.9" y2="43.4" stroke="#7a9058" stroke-width="0.8" opacity="0.30"/><line x1="49.7" y1="13.6" x2="56.4" y2="10.9" stroke="#7a9058" stroke-width="0.8" opacity="0.22"/><line x1="19.6" y1="37.8" x2="23.2" y2="43.2" stroke="#7a9058" stroke-width="1.1" opacity="0.25"/><line x1="26.2" y1="33.6" x2="31.8" y2="43.8" stroke="#7a9058" stroke-width="0.9" opacity="0.44"/><line x1="60.7" y1="12.0" x2="68.3" y2="6.7" stroke="#7a9058" stroke-width="1.1" opacity="0.41"/><line x1="30.8" y1="89.8" x2="37.1" y2="94.5" stroke="#7a9058" stroke-width="1.3" opacity="0.28"/><line x1="46.6" y1="52.9" x2="50.1" y2="44.2" stroke="#7a9058" stroke-width="1.0" opacity="0.43"/><line x1="32.1" y1="47.2" x2="36.4" y2="48.6" stroke="#7a9058" stroke-width="1.3" opacity="0.22"/><line x1="53.0" y1="82.4" x2="57.2" y2="84.6" stroke="#7a9058" stroke-width="0.7" opacity="0.18"/><line x1="27.4" y1="15.6" x2="29.7" y2="20.5" stroke="#7a9058" stroke-width="1.1" opacity="0.47"/><line x1="3.9" y1="80.9" x2="8.8" y2="85.0" stroke="#7a9058" stroke-width="1.0" opacity="0.22"/><line x1="4.7" y1="18.0" x2="14.2" y2="8.8" stroke="#7a9058" stroke-width="1.3" opacity="0.38"/><line x1="10.9" y1="44.3" x2="13.3" y2="49.0" stroke="#7a9058" stroke-width="0.6" opacity="0.24"/><line x1="16.8" y1="34.1" x2="21.3" y2="24.9" stroke="#7a9058" stroke-width="1.0" opacity="0.40"/><line x1="71.5" y1="14.7" x2="74.8" y2="10.8" stroke="#7a9058" stroke-width="0.9" opacity="0.24"/><line x1="23.2" y1="38.8" x2="30.5" y2="42.6" stroke="#7a9058" stroke-width="1.0" opacity="0.42"/><line x1="36.9" y1="25.6" x2="47.1" y2="20.0" stroke="#7a9058" stroke-width="1.2" opacity="0.39"/><line x1="51.3" y1="2.8" x2="56.3" y2="10.9" stroke="#7a9058" stroke-width="1.1" opacity="0.35"/><line x1="48.8" y1="66.8" x2="53.2" y2="76.9" stroke="#7a9058" stroke-width="1.3" opacity="0.41"/><line x1="65.2" y1="53.8" x2="67.1" y2="57.7" stroke="#7a9058" stroke-width="1.0" opacity="0.37"/><line x1="14.5" y1="86.0" x2="24.9" y2="77.0" stroke="#7a9058" stroke-width="0.8" opacity="0.27"/><line x1="64.3" y1="63.1" x2="68.9" y2="58.2" stroke="#7a9058" stroke-width="0.9" opacity="0.30"/><line x1="56.2" y1="41.0" x2="65.1" y2="46.7" stroke="#7a9058" stroke-width="1.3" opacity="0.26"/><line x1="16.7" y1="30.0" x2="23.7" y2="36.2" stroke="#7a9058" stroke-width="0.8" opacity="0.46"/><line x1="60.2" y1="62.4" x2="68.6" y2="70.8" stroke="#7a9058" stroke-width="1.0" opacity="0.28"/><line x1="19.9" y1="17.2" x2="26.1" y2="23.3" stroke="#7a9058" stroke-width="0.8" opacity="0.35"/><line x1="13.3" y1="54.5" x2="23.4" y2="62.0" stroke="#7a9058" stroke-width="1.3" opacity="0.38"/><line x1="53.2" y1="27.7" x2="58.3" y2="24.4" stroke="#7a9058" stroke-width="1.3" opacity="0.18"/><line x1="15.4" y1="28.2" x2="21.6" y2="31.9" stroke="#7a9058" stroke-width="1.0" opacity="0.28"/><line x1="32.7" y1="75.0" x2="34.7" y2="78.7" stroke="#7a9058" stroke-width="1.1" opacity="0.23"/><line x1="29.3" y1="5.8" x2="35.6" y2="-1.8" stroke="#7a9058" stroke-width="1.2" opacity="0.33"/><line x1="71.4" y1="13.6" x2="74.4" y2="7.3" stroke="#7a9058" stroke-width="1.2" opacity="0.24"/><line x1="68.2" y1="53.2" x2="74.3" y2="62.4" stroke="#7a9058" stroke-width="0.6" opacity="0.24"/><line x1="51.9" y1="12.5" x2="59.0" y2="19.8" stroke="#7a9058" stroke-width="0.9" opacity="0.47"/><line x1="37.0" y1="34.2" x2="41.7" y2="38.3" stroke="#7a9058" stroke-width="0.7" opacity="0.43"/><line x1="73.8" y1="60.7" x2="77.3" y2="57.9" stroke="#7a9058" stroke-width="0.7" opacity="0.33"/><line x1="39.8" y1="46.8" x2="49.8" y2="53.1" stroke="#7a9058" stroke-width="0.8" opacity="0.40"/><line x1="1.9" y1="43.1" x2="5.2" y2="47.2" stroke="#7a9058" stroke-width="1.1" opacity="0.34"/><line x1="50.4" y1="84.8" x2="52.6" y2="89.4" stroke="#7a9058" stroke-width="0.9" opacity="0.38"/><line x1="10.9" y1="27.9" x2="20.9" y2="31.6" stroke="#7a9058" stroke-width="0.9" opacity="0.29"/><line x1="72.0" y1="54.5" x2="76.1" y2="51.6" stroke="#7a9058" stroke-width="1.1" opacity="0.46"/><line x1="62.8" y1="80.6" x2="71.4" y2="77.7" stroke="#7a9058" stroke-width="1.3" opacity="0.28"/><line x1="0.6" y1="60.5" x2="7.3" y2="48.2" stroke="#7a9058" stroke-width="1.0" opacity="0.20"/><line x1="47.6" y1="39.2" x2="54.9" y2="35.7" stroke="#7a9058" stroke-width="1.1" opacity="0.19"/><line x1="75.4" y1="74.4" x2="85.3" y2="78.5" stroke="#7a9058" stroke-width="0.8" opacity="0.19"/><line x1="61.5" y1="80.5" x2="68.9" y2="77.4" stroke="#7a9058" stroke-width="0.7" opacity="0.36"/><line x1="18.2" y1="17.1" x2="21.2" y2="19.9" stroke="#7a9058" stroke-width="1.1" opacity="0.26"/><line x1="4.1" y1="46.6" x2="12.7" y2="50.0" stroke="#7a9058" stroke-width="0.9" opacity="0.22"/><line x1="35.9" y1="33.6" x2="46.1" y2="42.8" stroke="#7a9058" stroke-width="0.9" opacity="0.31"/><line x1="74.2" y1="71.9" x2="82.4" y2="78.4" stroke="#7a9058" stroke-width="0.9" opacity="0.22"/><line x1="1.8" y1="63.5" x2="12.4" y2="72.2" stroke="#7a9058" stroke-width="1.0" opacity="0.26"/><line x1="36.2" y1="38.1" x2="42.0" y2="41.4" stroke="#7a9058" stroke-width="1.3" opacity="0.47"/><line x1="48.5" y1="2.5" x2="51.2" y2="-4.0" stroke="#7a9058" stroke-width="1.1" opacity="0.34"/><line x1="53.5" y1="22.2" x2="63.6" y2="27.0" stroke="#7a9058" stroke-width="1.1" opacity="0.32"/><line x1="43.4" y1="48.1" x2="48.2" y2="41.0" stroke="#7a9058" stroke-width="1.0" opacity="0.31"/><line x1="70.0" y1="67.2" x2="79.7" y2="63.1" stroke="#7a9058" stroke-width="1.1" opacity="0.36"/><line x1="35.5" y1="86.7" x2="46.4" y2="94.9" stroke="#7a9058" stroke-width="1.2" opacity="0.41"/><line x1="28.3" y1="71.8" x2="34.5" y2="76.1" stroke="#7a9058" stroke-width="0.9" opacity="0.37"/><line x1="38.9" y1="88.9" x2="50.1" y2="93.4" stroke="#7a9058" stroke-width="0.9" opacity="0.35"/><line x1="50.5" y1="70.5" x2="61.2" y2="77.8" stroke="#7a9058" stroke-width="0.6" opacity="0.30"/><line x1="35.5" y1="10.3" x2="46.1" y2="18.5" stroke="#7a9058" stroke-width="0.7" opacity="0.40"/><line x1="65.0" y1="29.3" x2="68.2" y2="32.9" stroke="#7a9058" stroke-width="1.0" opacity="0.46"/><line x1="7.4" y1="1.7" x2="11.0" y2="3.9" stroke="#7a9058" stroke-width="0.9" opacity="0.20"/><line x1="37.3" y1="80.8" x2="46.1" y2="70.3" stroke="#7a9058" stroke-width="0.8" opacity="0.35"/></g>
<g filter="url(#bl)" opacity="0.7">
<ellipse cx="18" cy="75" rx="16" ry="10" fill="#b2c18c"/>
<ellipse cx="42" cy="62" rx="10" ry="7" fill="#bac993"/>
<ellipse cx="55" cy="8" rx="12" ry="6" fill="#bccb95"/>
</g>
<polygon points="69,35.5 78.5,35.5 78.5,92 58,92 56,75 54,64 62,56 68,48" fill="#e6eadc" filter="url(#disp)"/>
<polyline points="29.2,0 30.7,31.5 42,46.5 57,57 67.5,60 78.5,60" fill="none" stroke="#a8aaa4" stroke-width="0.9"/>
<polyline points="72,60 75,72 78.5,80" fill="none" stroke="#c0c2bc" stroke-width="0.8"/>
<polygon points="16.5,16.5 22,15.5 28.5,13.5 29.2,9 31.5,8.2 33,15 42,18 49.5,20.2 57,24 60,21.7 61.5,23.2 59.2,28.5 55.5,30 54,36 61.5,37.5 68.2,39 67.5,41.2 60,39.7 53.2,37.5 52.5,31.5 48,28.5 40.5,24 34.5,21.7 30,19.5 21,18.7" fill="#b2e0f8"/>
<circle cx="70" cy="60" r="1.3" fill="#a9daf0"/><circle cx="71" cy="82" r="1" fill="#a9daf0"/>
<rect x="26.5" y="31" width="6" height="3" fill="#f6f6f2"/>
<rect x="69" y="58.6" width="7.5" height="2.2" fill="#f2f2ee"/>
<g fill="#3a3a5a" opacity="0.5">
<rect x="24" y="4.8" width="11" height="1.2"/><rect x="24" y="7.8" width="11" height="1.2"/>
<rect x="3" y="26.2" width="12.5" height="1.3"/><rect x="3" y="29.4" width="13.5" height="1.4"/>
<rect x="22.5" y="59.6" width="12" height="1.4"/>
<rect x="21" y="88" width="13" height="1.3"/>
</g>
<g fill="#5a88c0" opacity="0.6"><rect x="38.5" y="14.5" width="12" height="1.2"/><rect x="42" y="19.2" width="3" height="1.2"/><rect x="40.5" y="22.2" width="9" height="1.2"/><rect x="37.5" y="25.2" width="10.5" height="1.2"/></g>
</g>
<g clip-path="url(#sat)">
<g filter="url(#tex)">
<rect x="78.5" y="0" width="213" height="90" fill="#9c8c6c"/>
<g filter="url(#disp)">
<polygon points="76,-3 124,-3 122,20 112,34 100,30 86,44 76,44" fill="#b8a28e"/>
<polygon points="88,13 98,14 107,18 110,24 102,26 95,25 91,25 88,28 89,38 84,41 81,32 82,22" fill="#8f7864"/>
<polygon points="111,-2 127,-2 128,12 126,24 120,28 113,22 110,12" fill="#cfc39e"/>
<rect x="93" y="38" width="9" height="10" rx="4" fill="#e2d2aa"/>
<polygon points="76,64 95,62 104,72 104,93 76,93" fill="#86906c"/>
<polygon points="80,70 90,68 94,78 86,86 78,82" fill="#6c7c5a"/>
<polygon points="104,40 124,40 124,70 104,75 96,60" fill="#9c8a6a"/>
<polygon points="123,48 158,50 158,93 120,93 118,70" fill="#969c7e"/>
<polygon points="126,56 140,56 146,72 138,86 128,80" fill="#848f6c"/>
<polygon points="132,-3 158,-3 157,15 134,18" fill="#b2aa88"/>
<polygon points="140,15 157,14 156,26 152,41 146,30" fill="#d6cca6"/>
<polygon points="131,27 152,30 154,55 132,56" fill="#958268"/>
<polygon points="130,-3 137,-3 136,14 134,30 131,48 128,60 124,72 117,72 122,48 126,28 129,12" fill="#8a9674"/>
<polygon points="156,-3 182,-3 180,12 166,17 157,15" fill="#bca88a"/>
<polygon points="152,18 168,16 186,26 186,52 168,54 152,50" fill="#968264"/>
<polygon points="160,20 172,18 176,28 168,34 158,30" fill="#86705a"/>
<polygon points="169,13 180,12 188,22 188,32 178,32 170,26" fill="#bea8a2"/>
<polygon points="182,-3 196,-3 196,12 182,12" fill="#aca080"/>
<polygon points="156,62 170,62 170,90 156,90" fill="#a69676"/>
<polygon points="182,52 194,52 194,72 182,72" fill="#a49a7c"/>
<polygon points="182,72 198,66 198,93 182,93" fill="#5a6a48"/>
<polygon points="186,-3 236,-3 228,16 220,32 210,40 204,50 200,60 196,70 186,70" fill="#b8b292"/>
<polygon points="204,4 220,4 221,16 204,18" fill="#bdb596"/>
<polygon points="194,18 216,18 214,32 196,32" fill="#d8d0b0"/>
<polygon points="192,34 208,34 204,48 200,58 192,58" fill="#cdc4a4"/>
<polygon points="186,18 192,18 192,48 186,48" fill="#b4a08a"/>
<polygon points="222,0 236,-3 228,16 222,30 214,32" fill="#a6b290"/>
</g>
<g filter="url(#disp)"><ellipse cx="115.1" cy="9.3" rx="2.4" ry="1.4" fill="#ffffff" opacity="0.17"/><ellipse cx="222.1" cy="72.0" rx="3.7" ry="1.6" fill="#3a2a10" opacity="0.15"/><ellipse cx="105.1" cy="9.6" rx="1.8" ry="3.3" fill="#3a2a10" opacity="0.25"/><ellipse cx="203.7" cy="17.4" rx="2.1" ry="2.6" fill="#3a2a10" opacity="0.25"/><ellipse cx="216.2" cy="7.8" rx="3.1" ry="2.7" fill="#3a2a10" opacity="0.13"/><ellipse cx="152.4" cy="8.0" rx="4.3" ry="3.2" fill="#3a2a10" opacity="0.15"/><ellipse cx="220.7" cy="51.5" rx="4.1" ry="3.1" fill="#3a2a10" opacity="0.17"/><ellipse cx="172.0" cy="38.8" rx="1.6" ry="1.8" fill="#3a2a10" opacity="0.11"/><ellipse cx="85.3" cy="56.4" rx="2.0" ry="2.3" fill="#3a2a10" opacity="0.16"/><ellipse cx="234.6" cy="17.6" rx="2.4" ry="1.5" fill="#3a2a10" opacity="0.15"/><ellipse cx="133.9" cy="67.2" rx="2.1" ry="2.4" fill="#3a2a10" opacity="0.12"/><ellipse cx="87.7" cy="20.6" rx="3.7" ry="2.5" fill="#ffffff" opacity="0.16"/><ellipse cx="105.9" cy="41.3" rx="1.1" ry="2.7" fill="#3a2a10" opacity="0.27"/><ellipse cx="193.4" cy="86.4" rx="1.1" ry="1.7" fill="#3a2a10" opacity="0.24"/><ellipse cx="142.4" cy="84.9" rx="3.2" ry="3.0" fill="#ffffff" opacity="0.13"/><ellipse cx="147.7" cy="12.3" rx="2.3" ry="3.4" fill="#ffffff" opacity="0.10"/><ellipse cx="85.0" cy="15.3" rx="3.7" ry="1.9" fill="#ffffff" opacity="0.12"/><ellipse cx="232.1" cy="38.2" rx="1.7" ry="1.1" fill="#ffffff" opacity="0.13"/><ellipse cx="184.3" cy="13.5" rx="1.1" ry="2.2" fill="#ffffff" opacity="0.28"/><ellipse cx="97.2" cy="47.6" rx="3.7" ry="2.0" fill="#3a2a10" opacity="0.19"/><ellipse cx="116.0" cy="37.0" rx="1.1" ry="2.1" fill="#ffffff" opacity="0.26"/><ellipse cx="208.5" cy="44.9" rx="1.1" ry="1.6" fill="#ffffff" opacity="0.14"/><ellipse cx="114.3" cy="78.3" rx="1.5" ry="1.1" fill="#3a2a10" opacity="0.20"/><ellipse cx="233.5" cy="36.3" rx="4.2" ry="2.6" fill="#3a2a10" opacity="0.23"/><ellipse cx="155.6" cy="8.4" rx="1.7" ry="3.2" fill="#3a2a10" opacity="0.27"/><ellipse cx="130.8" cy="59.1" rx="3.8" ry="2.6" fill="#3a2a10" opacity="0.20"/><ellipse cx="180.8" cy="61.7" rx="1.9" ry="3.3" fill="#3a2a10" opacity="0.11"/><ellipse cx="230.5" cy="86.6" rx="3.3" ry="1.1" fill="#3a2a10" opacity="0.12"/><ellipse cx="230.1" cy="60.0" rx="1.2" ry="1.4" fill="#3a2a10" opacity="0.20"/><ellipse cx="195.2" cy="83.5" rx="1.8" ry="1.0" fill="#3a2a10" opacity="0.10"/><ellipse cx="215.6" cy="10.4" rx="3.8" ry="3.0" fill="#3a2a10" opacity="0.20"/><ellipse cx="216.0" cy="18.2" rx="3.4" ry="1.8" fill="#3a2a10" opacity="0.24"/><ellipse cx="152.0" cy="47.4" rx="1.1" ry="1.1" fill="#3a2a10" opacity="0.19"/><ellipse cx="213.8" cy="54.7" rx="1.5" ry="1.9" fill="#3a2a10" opacity="0.19"/><ellipse cx="79.7" cy="75.4" rx="3.9" ry="1.2" fill="#3a2a10" opacity="0.17"/><ellipse cx="201.6" cy="28.0" rx="1.8" ry="2.2" fill="#3a2a10" opacity="0.12"/><ellipse cx="96.0" cy="55.9" rx="4.1" ry="2.3" fill="#3a2a10" opacity="0.25"/><ellipse cx="199.9" cy="6.0" rx="4.1" ry="1.5" fill="#ffffff" opacity="0.25"/><ellipse cx="144.3" cy="71.9" rx="1.6" ry="3.2" fill="#ffffff" opacity="0.13"/><ellipse cx="155.6" cy="30.5" rx="2.9" ry="3.3" fill="#3a2a10" opacity="0.10"/><ellipse cx="127.0" cy="49.0" rx="2.7" ry="2.8" fill="#3a2a10" opacity="0.11"/><ellipse cx="116.5" cy="76.3" rx="2.2" ry="2.9" fill="#3a2a10" opacity="0.21"/><ellipse cx="184.2" cy="54.9" rx="2.1" ry="3.3" fill="#3a2a10" opacity="0.26"/><ellipse cx="126.0" cy="78.1" rx="3.8" ry="2.5" fill="#3a2a10" opacity="0.13"/><ellipse cx="199.1" cy="32.6" rx="3.3" ry="1.3" fill="#ffffff" opacity="0.13"/><ellipse cx="205.0" cy="16.0" rx="4.2" ry="1.9" fill="#3a2a10" opacity="0.16"/><ellipse cx="175.5" cy="8.4" rx="2.4" ry="3.3" fill="#ffffff" opacity="0.22"/><ellipse cx="129.3" cy="27.1" rx="1.1" ry="1.1" fill="#3a2a10" opacity="0.25"/><ellipse cx="203.8" cy="72.7" rx="4.3" ry="1.4" fill="#3a2a10" opacity="0.19"/><ellipse cx="168.1" cy="84.4" rx="3.7" ry="3.4" fill="#ffffff" opacity="0.22"/><ellipse cx="184.0" cy="67.1" rx="3.2" ry="3.1" fill="#ffffff" opacity="0.27"/><ellipse cx="141.8" cy="53.9" rx="4.1" ry="2.8" fill="#ffffff" opacity="0.14"/><ellipse cx="129.3" cy="56.4" rx="4.5" ry="3.2" fill="#ffffff" opacity="0.17"/><ellipse cx="206.3" cy="25.5" rx="2.4" ry="1.0" fill="#ffffff" opacity="0.20"/><ellipse cx="186.8" cy="55.3" rx="2.3" ry="3.4" fill="#3a2a10" opacity="0.13"/><ellipse cx="88.6" cy="87.6" rx="4.5" ry="3.3" fill="#3a2a10" opacity="0.16"/><ellipse cx="92.3" cy="23.2" rx="1.8" ry="3.3" fill="#3a2a10" opacity="0.24"/><ellipse cx="101.4" cy="21.5" rx="2.0" ry="3.4" fill="#ffffff" opacity="0.24"/><ellipse cx="184.9" cy="49.2" rx="4.4" ry="1.7" fill="#3a2a10" opacity="0.13"/><ellipse cx="93.2" cy="2.9" rx="2.1" ry="1.3" fill="#ffffff" opacity="0.28"/><ellipse cx="123.4" cy="80.1" rx="3.5" ry="2.8" fill="#3a2a10" opacity="0.27"/><ellipse cx="215.9" cy="64.7" rx="3.0" ry="2.7" fill="#3a2a10" opacity="0.20"/><ellipse cx="156.9" cy="13.9" rx="4.0" ry="2.2" fill="#ffffff" opacity="0.13"/><ellipse cx="215.3" cy="23.0" rx="2.4" ry="2.7" fill="#3a2a10" opacity="0.16"/><ellipse cx="138.7" cy="38.1" rx="1.1" ry="3.2" fill="#ffffff" opacity="0.27"/><ellipse cx="101.9" cy="14.1" rx="4.0" ry="3.1" fill="#ffffff" opacity="0.20"/><ellipse cx="152.8" cy="64.7" rx="1.6" ry="3.1" fill="#3a2a10" opacity="0.23"/><ellipse cx="222.6" cy="84.3" rx="2.3" ry="3.1" fill="#3a2a10" opacity="0.21"/><ellipse cx="94.8" cy="55.7" rx="4.2" ry="1.8" fill="#3a2a10" opacity="0.26"/><ellipse cx="172.2" cy="3.4" rx="3.2" ry="1.6" fill="#3a2a10" opacity="0.22"/><ellipse cx="126.3" cy="80.6" rx="3.2" ry="1.8" fill="#3a2a10" opacity="0.26"/><ellipse cx="218.2" cy="79.5" rx="3.3" ry="2.7" fill="#3a2a10" opacity="0.19"/><ellipse cx="233.0" cy="31.8" rx="1.3" ry="2.8" fill="#3a2a10" opacity="0.20"/><ellipse cx="171.9" cy="22.5" rx="1.7" ry="1.2" fill="#3a2a10" opacity="0.26"/><ellipse cx="187.4" cy="10.5" rx="4.4" ry="3.1" fill="#3a2a10" opacity="0.10"/><ellipse cx="210.5" cy="56.1" rx="3.2" ry="1.0" fill="#3a2a10" opacity="0.11"/><ellipse cx="153.1" cy="13.0" rx="2.3" ry="3.2" fill="#3a2a10" opacity="0.25"/><ellipse cx="124.8" cy="35.0" rx="3.1" ry="1.1" fill="#ffffff" opacity="0.28"/><ellipse cx="196.4" cy="77.6" rx="2.0" ry="2.7" fill="#3a2a10" opacity="0.23"/><ellipse cx="146.7" cy="15.7" rx="1.1" ry="3.2" fill="#3a2a10" opacity="0.15"/><ellipse cx="196.7" cy="36.6" rx="3.2" ry="3.1" fill="#ffffff" opacity="0.21"/><ellipse cx="118.2" cy="46.0" rx="1.1" ry="1.7" fill="#ffffff" opacity="0.26"/><ellipse cx="98.8" cy="68.2" rx="1.3" ry="3.5" fill="#ffffff" opacity="0.12"/><ellipse cx="111.2" cy="84.0" rx="3.3" ry="3.2" fill="#3a2a10" opacity="0.12"/><ellipse cx="131.5" cy="41.0" rx="4.5" ry="1.4" fill="#ffffff" opacity="0.25"/><ellipse cx="95.9" cy="87.4" rx="2.0" ry="2.4" fill="#3a2a10" opacity="0.26"/><ellipse cx="89.9" cy="76.2" rx="1.6" ry="2.8" fill="#ffffff" opacity="0.24"/><ellipse cx="106.4" cy="18.6" rx="1.1" ry="1.8" fill="#ffffff" opacity="0.28"/><ellipse cx="173.3" cy="32.8" rx="4.5" ry="1.4" fill="#ffffff" opacity="0.27"/><ellipse cx="227.4" cy="61.6" rx="4.4" ry="1.1" fill="#3a2a10" opacity="0.23"/><ellipse cx="182.9" cy="75.9" rx="1.4" ry="1.5" fill="#ffffff" opacity="0.19"/><ellipse cx="163.7" cy="48.7" rx="2.3" ry="2.9" fill="#3a2a10" opacity="0.24"/><ellipse cx="83.9" cy="13.8" rx="1.8" ry="1.6" fill="#3a2a10" opacity="0.14"/><ellipse cx="176.1" cy="31.0" rx="2.3" ry="2.8" fill="#3a2a10" opacity="0.13"/><ellipse cx="132.7" cy="88.3" rx="1.7" ry="1.1" fill="#ffffff" opacity="0.25"/><ellipse cx="192.8" cy="84.5" rx="2.7" ry="1.1" fill="#ffffff" opacity="0.23"/><ellipse cx="139.7" cy="12.6" rx="2.3" ry="2.2" fill="#ffffff" opacity="0.18"/><ellipse cx="99.4" cy="2.7" rx="3.7" ry="2.8" fill="#ffffff" opacity="0.12"/><ellipse cx="124.4" cy="50.2" rx="4.1" ry="2.2" fill="#3a2a10" opacity="0.19"/><ellipse cx="106.4" cy="55.4" rx="3.1" ry="2.5" fill="#3a2a10" opacity="0.10"/><ellipse cx="146.6" cy="72.0" rx="1.5" ry="1.1" fill="#ffffff" opacity="0.15"/><ellipse cx="146.3" cy="28.3" rx="3.2" ry="1.4" fill="#ffffff" opacity="0.22"/><ellipse cx="163.5" cy="86.3" rx="4.3" ry="1.6" fill="#ffffff" opacity="0.20"/><ellipse cx="163.4" cy="32.9" rx="4.0" ry="1.5" fill="#3a2a10" opacity="0.12"/><ellipse cx="216.6" cy="53.6" rx="4.5" ry="1.4" fill="#3a2a10" opacity="0.21"/><ellipse cx="86.1" cy="73.8" rx="4.1" ry="1.2" fill="#3a2a10" opacity="0.24"/><ellipse cx="172.9" cy="48.9" rx="1.9" ry="1.1" fill="#3a2a10" opacity="0.26"/><ellipse cx="110.8" cy="42.5" rx="2.0" ry="2.7" fill="#3a2a10" opacity="0.26"/><ellipse cx="123.2" cy="37.5" rx="1.0" ry="2.3" fill="#3a2a10" opacity="0.25"/><ellipse cx="89.3" cy="39.0" rx="1.3" ry="2.1" fill="#3a2a10" opacity="0.15"/><ellipse cx="210.8" cy="86.0" rx="3.9" ry="1.5" fill="#3a2a10" opacity="0.27"/><ellipse cx="234.8" cy="1.0" rx="1.0" ry="1.7" fill="#3a2a10" opacity="0.18"/><ellipse cx="92.5" cy="57.6" rx="3.3" ry="2.6" fill="#3a2a10" opacity="0.20"/><ellipse cx="186.3" cy="5.8" rx="2.5" ry="1.3" fill="#ffffff" opacity="0.24"/><ellipse cx="128.9" cy="30.5" rx="2.0" ry="2.5" fill="#ffffff" opacity="0.22"/><ellipse cx="89.1" cy="86.0" rx="1.5" ry="2.9" fill="#3a2a10" opacity="0.18"/><ellipse cx="125.8" cy="32.3" rx="3.7" ry="2.3" fill="#3a2a10" opacity="0.14"/><ellipse cx="176.1" cy="15.4" rx="2.7" ry="2.6" fill="#3a2a10" opacity="0.20"/><ellipse cx="167.5" cy="17.4" rx="4.4" ry="2.7" fill="#3a2a10" opacity="0.27"/><ellipse cx="148.9" cy="29.9" rx="2.1" ry="1.8" fill="#ffffff" opacity="0.16"/><ellipse cx="110.8" cy="43.6" rx="2.0" ry="1.9" fill="#3a2a10" opacity="0.16"/><ellipse cx="213.5" cy="71.8" rx="2.1" ry="3.1" fill="#ffffff" opacity="0.12"/><ellipse cx="234.2" cy="3.0" rx="1.0" ry="3.2" fill="#ffffff" opacity="0.22"/><ellipse cx="165.3" cy="20.1" rx="1.9" ry="3.4" fill="#ffffff" opacity="0.14"/><ellipse cx="147.3" cy="65.9" rx="2.0" ry="1.2" fill="#3a2a10" opacity="0.12"/><ellipse cx="86.7" cy="0.4" rx="4.5" ry="2.1" fill="#3a2a10" opacity="0.20"/><ellipse cx="231.1" cy="30.9" rx="2.2" ry="2.7" fill="#ffffff" opacity="0.17"/><ellipse cx="197.2" cy="51.6" rx="2.7" ry="3.3" fill="#3a2a10" opacity="0.23"/><ellipse cx="139.6" cy="7.8" rx="2.4" ry="1.5" fill="#ffffff" opacity="0.15"/><ellipse cx="97.8" cy="41.1" rx="3.6" ry="2.9" fill="#3a2a10" opacity="0.16"/><ellipse cx="183.1" cy="80.0" rx="2.4" ry="3.3" fill="#ffffff" opacity="0.27"/><ellipse cx="216.3" cy="88.2" rx="3.9" ry="2.8" fill="#3a2a10" opacity="0.23"/><ellipse cx="215.9" cy="51.8" rx="3.2" ry="3.3" fill="#ffffff" opacity="0.16"/><ellipse cx="83.6" cy="79.0" rx="3.2" ry="2.7" fill="#ffffff" opacity="0.13"/><ellipse cx="153.2" cy="78.9" rx="2.2" ry="2.1" fill="#ffffff" opacity="0.25"/><ellipse cx="97.5" cy="77.9" rx="1.0" ry="2.7" fill="#3a2a10" opacity="0.18"/><ellipse cx="194.5" cy="25.2" rx="1.5" ry="1.9" fill="#ffffff" opacity="0.23"/><ellipse cx="166.6" cy="59.5" rx="4.4" ry="2.9" fill="#3a2a10" opacity="0.27"/><ellipse cx="223.8" cy="66.7" rx="2.2" ry="2.3" fill="#3a2a10" opacity="0.24"/><ellipse cx="219.3" cy="66.8" rx="3.3" ry="1.6" fill="#3a2a10" opacity="0.13"/><ellipse cx="179.6" cy="15.8" rx="1.1" ry="3.4" fill="#3a2a10" opacity="0.15"/><ellipse cx="85.1" cy="73.7" rx="3.7" ry="1.4" fill="#3a2a10" opacity="0.25"/><ellipse cx="168.2" cy="24.6" rx="1.2" ry="1.2" fill="#3a2a10" opacity="0.23"/><ellipse cx="178.2" cy="20.2" rx="3.8" ry="1.2" fill="#3a2a10" opacity="0.13"/><ellipse cx="78.9" cy="17.4" rx="3.8" ry="1.5" fill="#ffffff" opacity="0.19"/><ellipse cx="132.8" cy="51.7" rx="3.0" ry="2.8" fill="#3a2a10" opacity="0.16"/><ellipse cx="177.7" cy="10.7" rx="1.9" ry="1.2" fill="#3a2a10" opacity="0.16"/><ellipse cx="189.6" cy="79.0" rx="2.3" ry="1.5" fill="#ffffff" opacity="0.19"/><ellipse cx="138.8" cy="6.3" rx="4.0" ry="2.6" fill="#3a2a10" opacity="0.25"/><ellipse cx="191.9" cy="74.2" rx="3.5" ry="2.1" fill="#3a2a10" opacity="0.27"/><ellipse cx="94.9" cy="13.0" rx="1.6" ry="2.1" fill="#3a2a10" opacity="0.19"/><ellipse cx="212.3" cy="33.0" rx="3.0" ry="1.6" fill="#3a2a10" opacity="0.15"/><ellipse cx="79.2" cy="35.8" rx="3.0" ry="3.2" fill="#ffffff" opacity="0.27"/><ellipse cx="205.4" cy="14.2" rx="3.7" ry="3.3" fill="#3a2a10" opacity="0.22"/><ellipse cx="139.3" cy="48.9" rx="3.3" ry="2.5" fill="#ffffff" opacity="0.26"/><ellipse cx="162.9" cy="6.4" rx="2.1" ry="1.2" fill="#3a2a10" opacity="0.12"/><ellipse cx="161.2" cy="25.1" rx="3.9" ry="2.9" fill="#ffffff" opacity="0.25"/><ellipse cx="169.4" cy="24.3" rx="4.2" ry="1.0" fill="#ffffff" opacity="0.21"/><ellipse cx="103.5" cy="44.2" rx="4.1" ry="1.9" fill="#3a2a10" opacity="0.13"/><ellipse cx="231.2" cy="86.8" rx="1.6" ry="2.9" fill="#ffffff" opacity="0.11"/><ellipse cx="111.1" cy="65.6" rx="2.6" ry="2.3" fill="#ffffff" opacity="0.13"/><ellipse cx="135.3" cy="46.2" rx="3.9" ry="2.1" fill="#ffffff" opacity="0.26"/><ellipse cx="186.4" cy="68.0" rx="3.8" ry="2.2" fill="#ffffff" opacity="0.12"/><ellipse cx="181.2" cy="67.4" rx="4.2" ry="3.3" fill="#3a2a10" opacity="0.19"/><ellipse cx="229.5" cy="7.7" rx="2.3" ry="2.4" fill="#3a2a10" opacity="0.21"/><ellipse cx="102.9" cy="45.7" rx="1.6" ry="2.0" fill="#ffffff" opacity="0.16"/><ellipse cx="176.4" cy="35.9" rx="1.6" ry="2.2" fill="#3a2a10" opacity="0.15"/><ellipse cx="120.7" cy="39.3" rx="3.4" ry="1.1" fill="#3a2a10" opacity="0.11"/><ellipse cx="217.7" cy="17.2" rx="3.9" ry="1.1" fill="#3a2a10" opacity="0.15"/><ellipse cx="199.8" cy="69.4" rx="1.4" ry="1.1" fill="#3a2a10" opacity="0.18"/><ellipse cx="136.5" cy="31.4" rx="2.3" ry="2.4" fill="#ffffff" opacity="0.12"/><ellipse cx="152.0" cy="89.0" rx="3.7" ry="2.8" fill="#3a2a10" opacity="0.18"/><ellipse cx="134.9" cy="71.4" rx="1.4" ry="2.9" fill="#ffffff" opacity="0.21"/><ellipse cx="158.7" cy="69.5" rx="1.2" ry="2.7" fill="#3a2a10" opacity="0.11"/><ellipse cx="185.3" cy="25.2" rx="3.6" ry="3.4" fill="#ffffff" opacity="0.17"/><ellipse cx="156.4" cy="88.3" rx="4.2" ry="1.1" fill="#ffffff" opacity="0.17"/><ellipse cx="204.2" cy="71.1" rx="2.9" ry="3.3" fill="#3a2a10" opacity="0.26"/><ellipse cx="177.6" cy="23.3" rx="3.6" ry="2.8" fill="#3a2a10" opacity="0.13"/><ellipse cx="81.5" cy="30.7" rx="1.9" ry="2.0" fill="#ffffff" opacity="0.21"/><ellipse cx="145.1" cy="23.9" rx="1.4" ry="2.4" fill="#ffffff" opacity="0.25"/><ellipse cx="121.5" cy="80.8" rx="1.4" ry="2.0" fill="#3a2a10" opacity="0.19"/><ellipse cx="148.3" cy="79.3" rx="1.6" ry="3.1" fill="#3a2a10" opacity="0.15"/><ellipse cx="132.9" cy="25.1" rx="3.2" ry="2.1" fill="#3a2a10" opacity="0.22"/><ellipse cx="212.9" cy="62.8" rx="2.0" ry="2.7" fill="#3a2a10" opacity="0.26"/><ellipse cx="138.6" cy="47.9" rx="3.6" ry="1.8" fill="#ffffff" opacity="0.21"/><ellipse cx="136.6" cy="76.3" rx="2.2" ry="1.6" fill="#3a2a10" opacity="0.21"/><ellipse cx="233.5" cy="84.8" rx="2.5" ry="2.1" fill="#3a2a10" opacity="0.19"/><ellipse cx="170.3" cy="36.1" rx="4.0" ry="3.2" fill="#3a2a10" opacity="0.23"/><ellipse cx="217.4" cy="23.0" rx="4.3" ry="1.5" fill="#ffffff" opacity="0.19"/><ellipse cx="102.8" cy="23.0" rx="3.1" ry="1.4" fill="#ffffff" opacity="0.17"/><ellipse cx="226.1" cy="7.1" rx="2.8" ry="2.2" fill="#ffffff" opacity="0.16"/><ellipse cx="135.0" cy="32.2" rx="2.9" ry="2.4" fill="#3a2a10" opacity="0.18"/><ellipse cx="173.7" cy="43.6" rx="1.4" ry="2.6" fill="#ffffff" opacity="0.25"/><ellipse cx="98.8" cy="49.1" rx="2.0" ry="2.6" fill="#3a2a10" opacity="0.22"/><ellipse cx="167.8" cy="83.8" rx="1.8" ry="3.5" fill="#3a2a10" opacity="0.21"/><ellipse cx="98.4" cy="2.7" rx="1.6" ry="2.4" fill="#ffffff" opacity="0.24"/><ellipse cx="102.3" cy="59.7" rx="4.2" ry="2.7" fill="#3a2a10" opacity="0.25"/><ellipse cx="212.7" cy="3.6" rx="2.8" ry="1.7" fill="#3a2a10" opacity="0.23"/><ellipse cx="192.8" cy="18.4" rx="1.6" ry="1.2" fill="#3a2a10" opacity="0.25"/><ellipse cx="92.5" cy="12.3" rx="1.5" ry="3.5" fill="#ffffff" opacity="0.20"/><ellipse cx="215.6" cy="15.4" rx="3.4" ry="1.8" fill="#3a2a10" opacity="0.18"/><ellipse cx="101.4" cy="80.7" rx="2.8" ry="3.5" fill="#3a2a10" opacity="0.27"/><ellipse cx="180.8" cy="5.2" rx="1.0" ry="3.5" fill="#3a2a10" opacity="0.24"/><ellipse cx="209.6" cy="32.5" rx="3.5" ry="2.6" fill="#ffffff" opacity="0.20"/><ellipse cx="224.0" cy="50.1" rx="3.8" ry="1.2" fill="#ffffff" opacity="0.19"/><ellipse cx="165.2" cy="76.1" rx="2.7" ry="2.4" fill="#3a2a10" opacity="0.22"/><ellipse cx="169.0" cy="35.6" rx="2.0" ry="3.2" fill="#ffffff" opacity="0.23"/><ellipse cx="120.6" cy="88.9" rx="1.8" ry="2.0" fill="#ffffff" opacity="0.26"/><ellipse cx="192.9" cy="23.6" rx="1.9" ry="2.9" fill="#3a2a10" opacity="0.13"/><ellipse cx="96.3" cy="64.9" rx="3.3" ry="3.0" fill="#ffffff" opacity="0.19"/><ellipse cx="100.7" cy="51.3" rx="1.8" ry="1.6" fill="#3a2a10" opacity="0.13"/><ellipse cx="202.7" cy="15.0" rx="1.9" ry="2.9" fill="#ffffff" opacity="0.15"/><ellipse cx="201.0" cy="50.7" rx="3.8" ry="3.2" fill="#3a2a10" opacity="0.12"/><ellipse cx="139.7" cy="40.9" rx="2.0" ry="3.2" fill="#ffffff" opacity="0.27"/><ellipse cx="89.1" cy="40.0" rx="3.2" ry="3.0" fill="#3a2a10" opacity="0.26"/><ellipse cx="124.6" cy="32.0" rx="1.7" ry="1.5" fill="#3a2a10" opacity="0.23"/><ellipse cx="108.2" cy="43.9" rx="2.5" ry="3.5" fill="#3a2a10" opacity="0.25"/><ellipse cx="114.8" cy="80.5" rx="1.1" ry="1.4" fill="#3a2a10" opacity="0.20"/><ellipse cx="160.8" cy="56.0" rx="2.2" ry="2.7" fill="#ffffff" opacity="0.21"/><ellipse cx="190.1" cy="27.9" rx="3.7" ry="3.1" fill="#3a2a10" opacity="0.11"/><ellipse cx="144.9" cy="14.8" rx="1.6" ry="2.2" fill="#3a2a10" opacity="0.12"/><ellipse cx="202.8" cy="75.9" rx="4.4" ry="2.9" fill="#ffffff" opacity="0.23"/><ellipse cx="168.1" cy="24.6" rx="3.8" ry="1.8" fill="#3a2a10" opacity="0.26"/><ellipse cx="140.3" cy="12.2" rx="3.9" ry="1.4" fill="#ffffff" opacity="0.26"/><ellipse cx="115.2" cy="23.5" rx="2.4" ry="2.8" fill="#ffffff" opacity="0.16"/><ellipse cx="88.5" cy="23.1" rx="3.6" ry="2.6" fill="#3a2a10" opacity="0.26"/><ellipse cx="82.8" cy="25.3" rx="3.2" ry="1.9" fill="#3a2a10" opacity="0.14"/><ellipse cx="228.7" cy="65.9" rx="3.4" ry="3.4" fill="#3a2a10" opacity="0.16"/><ellipse cx="146.5" cy="66.2" rx="3.9" ry="2.6" fill="#3a2a10" opacity="0.22"/><ellipse cx="200.1" cy="11.5" rx="3.9" ry="2.3" fill="#ffffff" opacity="0.12"/><ellipse cx="173.2" cy="19.8" rx="2.3" ry="2.4" fill="#ffffff" opacity="0.14"/><ellipse cx="90.0" cy="31.4" rx="3.9" ry="1.6" fill="#ffffff" opacity="0.12"/><ellipse cx="173.3" cy="66.7" rx="1.7" ry="3.1" fill="#ffffff" opacity="0.12"/><ellipse cx="92.8" cy="70.8" rx="1.3" ry="2.8" fill="#ffffff" opacity="0.15"/><ellipse cx="93.7" cy="73.0" rx="2.3" ry="3.3" fill="#3a2a10" opacity="0.20"/><ellipse cx="150.4" cy="50.6" rx="3.0" ry="3.4" fill="#ffffff" opacity="0.13"/><ellipse cx="234.8" cy="61.9" rx="3.2" ry="2.2" fill="#ffffff" opacity="0.14"/><ellipse cx="203.9" cy="24.4" rx="3.1" ry="2.2" fill="#ffffff" opacity="0.11"/><ellipse cx="88.3" cy="64.2" rx="1.8" ry="2.3" fill="#3a2a10" opacity="0.24"/><ellipse cx="103.1" cy="38.4" rx="3.6" ry="2.7" fill="#3a2a10" opacity="0.22"/><ellipse cx="201.5" cy="78.9" rx="2.9" ry="1.3" fill="#ffffff" opacity="0.22"/><ellipse cx="184.8" cy="40.1" rx="3.4" ry="1.5" fill="#ffffff" opacity="0.17"/><ellipse cx="195.7" cy="86.9" rx="2.0" ry="1.2" fill="#ffffff" opacity="0.26"/><ellipse cx="234.2" cy="5.2" rx="2.2" ry="2.2" fill="#3a2a10" opacity="0.20"/><ellipse cx="145.2" cy="87.6" rx="3.6" ry="3.2" fill="#3a2a10" opacity="0.28"/><ellipse cx="185.3" cy="70.3" rx="2.8" ry="2.7" fill="#3a2a10" opacity="0.27"/><ellipse cx="219.4" cy="60.8" rx="2.7" ry="2.0" fill="#ffffff" opacity="0.27"/><ellipse cx="182.6" cy="71.9" rx="3.3" ry="1.3" fill="#3a2a10" opacity="0.16"/><ellipse cx="230.0" cy="61.9" rx="2.3" ry="2.3" fill="#3a2a10" opacity="0.20"/><ellipse cx="188.9" cy="32.6" rx="2.5" ry="2.9" fill="#ffffff" opacity="0.22"/><ellipse cx="210.1" cy="89.6" rx="2.9" ry="2.5" fill="#3a2a10" opacity="0.24"/><ellipse cx="214.5" cy="47.3" rx="1.5" ry="3.1" fill="#ffffff" opacity="0.23"/><ellipse cx="123.8" cy="72.7" rx="3.2" ry="2.3" fill="#3a2a10" opacity="0.15"/><ellipse cx="234.9" cy="50.1" rx="4.4" ry="1.3" fill="#ffffff" opacity="0.13"/><ellipse cx="128.2" cy="88.7" rx="1.4" ry="2.3" fill="#3a2a10" opacity="0.15"/><ellipse cx="123.7" cy="19.1" rx="1.2" ry="2.5" fill="#3a2a10" opacity="0.14"/><ellipse cx="166.1" cy="45.2" rx="3.4" ry="1.6" fill="#ffffff" opacity="0.26"/><ellipse cx="185.8" cy="68.2" rx="2.2" ry="2.5" fill="#ffffff" opacity="0.22"/><ellipse cx="228.1" cy="43.9" rx="2.6" ry="2.8" fill="#3a2a10" opacity="0.17"/><ellipse cx="81.5" cy="73.7" rx="2.8" ry="3.1" fill="#ffffff" opacity="0.26"/></g>
</g>
<rect x="170" y="51" width="14" height="18" fill="#e6d2c2" filter="url(#disp)"/>
<rect x="178" y="55" width="7" height="14" fill="#e8d8c4" filter="url(#disp)"/>
<polygon points="173,59 179,60 178,75 175,78 173,70" fill="#a88c88" filter="url(#bl1)"/>
<rect x="152" y="56" width="12" height="7" rx="3" fill="#e2d9bc" filter="url(#bl1)"/>
<rect x="144" y="72" width="8" height="7" rx="3" fill="#e0d8ba" filter="url(#bl1)"/>
<circle cx="155.5" cy="59.5" r="0.9" fill="#3a3a60"/><circle cx="159" cy="59.5" r="0.9" fill="#3a3a60"/>
<polygon points="233.6,0 229.3,12 222.8,25 219.5,31.5 210.9,38 204.4,47.8 201.1,57.6 196.8,68.4 193.5,81.4 191.9,90 291,90 291,0" fill="#9c7a52"/>
<polyline points="233.6,0 229.3,12 222.8,25 219.5,31.5 210.9,38 204.4,47.8 201.1,57.6 196.8,68.4 193.5,81.4 191.9,90" fill="none" stroke="#74845a" stroke-width="3" opacity="0.55" filter="url(#disp)"/>
<rect x="134" y="84" width="29" height="6" fill="#a6764c"/>
<ellipse cx="143.5" cy="83.5" rx="3.5" ry="2" fill="#5cc85c"/>
<circle cx="218" cy="33" r="2.6" fill="#58c858"/><circle cx="218" cy="32.5" r="0.9" fill="#4a4a8a"/>
<circle cx="201" cy="61" r="2.6" fill="#58c858"/><circle cx="200.5" cy="60.5" r="0.9" fill="#4a4a8a"/>
<g fill="#3a3a5a" opacity="0.7"><circle cx="148" cy="60" r="0.8"/><circle cx="151" cy="60" r="0.8"/><circle cx="197" cy="78" r="0.9"/><circle cx="86" cy="84" r="0.7"/></g>
</g>
</g>
</svg></div>
<div style="left:80.00px;top:135.00px;width:296.00px;height:5.50px;background:#ffffff;"></div>
<p class="t" style="left:82.0px;top:136.8px;width:7.0px;font-size:3.5px;background-image:linear-gradient(90deg,#5a4c75,#5a4c75);opacity:1.00">superf</p>
<p class="t" style="left:98.0px;top:136.8px;width:34.0px;font-size:3.5px;background-image:linear-gradient(90deg,#5a79b0,#5a79b0,#2b2b2b);opacity:0.96">superficie hidrología </p>
<p class="t" style="left:225.0px;top:136.7px;width:22.0px;font-size:3.5px;background-image:linear-gradient(90deg,#2b2b2b,#2b2b2b,#2b2b2b,#4c4c67);opacity:0.80">provincia extra</p>
<p class="t" style="left:357.0px;top:136.7px;width:11.0px;font-size:3.5px;background-image:linear-gradient(90deg,#675a8e,#5a79b0);opacity:0.96">origen g</p>
<div style="left:360.00px;top:136.00px;width:0.80px;height:3.00px;background:#555;"></div>
<div style="left:362.00px;top:136.00px;width:0.80px;height:3.00px;background:#555;"></div>
<div style="left:364.00px;top:136.00px;width:0.80px;height:3.00px;background:#555;"></div>
<div style="left:371.50px;top:136.00px;width:1.40px;height:1.40px;background:#3a8ad8;"></div>
<div style="left:374.00px;top:136.00px;width:1.40px;height:1.40px;background:#3a8ad8;"></div>
<div style="left:371.50px;top:138.50px;width:1.40px;height:1.40px;background:#3a8ad8;"></div>
<div style="left:374.00px;top:138.50px;width:1.40px;height:1.40px;background:#3a8ad8;"></div>
<div style="left:80.00px;top:140.50px;width:296.00px;height:105.50px;background:#efefef;"></div>
<div style="left:80.50px;top:142.20px;width:16.00px;height:4.60px;background:#f4f4f4;"></div>
<div style="left:81.50px;top:143.20px;width:3.00px;height:2.20px;background:#3a6ab0;"></div>
<p class="t" style="left:85.0px;top:144.2px;width:8.0px;font-size:3.1px;background-image:linear-gradient(90deg,#5a4c8e,#31315a);opacity:1.00">salida </p>
<div style="left:100.00px;top:142.00px;width:21.50px;height:5.00px;background:#d8dce0;border:0.5px solid #b8bcc2;box-sizing:border-box"></div>
<div style="left:101.50px;top:143.20px;width:3.00px;height:2.20px;background:#5a8ac0;"></div>
<p class="t" style="left:106.0px;top:144.1px;width:10.0px;font-size:3.1px;background-image:linear-gradient(90deg,#90909e,#90909e,#90909e,#90909e);opacity:0.96">de análi</p>
<p class="t" style="left:79.5px;top:150.7px;width:8.0px;font-size:3.5px;background-image:linear-gradient(90deg,#a35f36,#a35f36);opacity:1.00">ráster</p>
<div style="left:92.00px;top:150.00px;width:2.20px;height:2.60px;background:#555;"></div>
<p class="t" style="left:95.0px;top:150.7px;width:7.0px;font-size:3.5px;background-image:linear-gradient(90deg,#675a8e,#755f95,#675a8e,#a6754c);opacity:0.96">vista </p>
<div style="left:110.00px;top:149.60px;width:2.40px;height:3.00px;background:#555;"></div>
<p class="t" style="left:113.0px;top:150.7px;width:7.0px;font-size:3.5px;background-image:linear-gradient(90deg,#675a8e,#675a8e,#5a79b0);opacity:0.96">tabla </p>
<p class="t" style="left:127.0px;top:150.7px;width:28.0px;font-size:3.5px;background-image:linear-gradient(90deg,#a35f36,#a35f36,#a3754c,#7588b0);opacity:0.96">extracción local h</p>
<p class="t" style="left:156.0px;top:150.7px;width:22.0px;font-size:3.5px;background-image:linear-gradient(90deg,#8867a3,#8867a3);opacity:0.96">geoprocesamient</p>
<p class="t" style="left:179.0px;top:150.7px;width:18.0px;font-size:3.5px;background-image:linear-gradient(90deg,#9c8251,#9c8251);opacity:0.96">análisis pro</p>
<div style="left:213.00px;top:150.00px;width:2.20px;height:2.60px;background:#555;"></div>
<p class="t" style="left:216.0px;top:150.7px;width:10.0px;font-size:3.5px;background-image:linear-gradient(90deg,#5a79b0,#9c8251,#a6754c,#755f95);opacity:0.96">geoproc</p>
<div style="left:233.00px;top:149.60px;width:3.00px;height:3.00px;background:#eee;border:0.6px solid #444;box-sizing:border-box"></div>
<p class="t" style="left:238.0px;top:150.7px;width:20.0px;font-size:3.5px;background-image:linear-gradient(90deg,#675a8e,#5a79b0,#675a8e,#9c8251);opacity:0.80">municipio sup</p>
<div style="left:371.00px;top:149.20px;width:4.20px;height:0.70px;background:#444;"></div>
<div style="left:371.00px;top:150.70px;width:4.20px;height:0.70px;background:#444;"></div>
<div style="left:371.00px;top:152.20px;width:4.20px;height:0.70px;background:#444;"></div>
<div style="left:80.00px;top:154.60px;width:296.00px;height:0.60px;background:#cdcdcd;"></div>
<div style="left:80.00px;top:155.20px;width:254.00px;height:6.00px;background:#e6e6e6;"></div>
<div style="left:86.50px;top:155.20px;width:17.50px;height:6.00px;background:#d3e5f5;"></div>
<div style="left:86.50px;top:160.50px;width:17.50px;height:0.90px;background:#2b7bd2;"></div>
<div style="left:82.00px;top:158.00px;width:2.50px;height:2.00px;background:#aaa;clip-path:polygon(0 100%,100% 100%,100% 0)"></div>
<p class="t" style="left:88.0px;top:157.5px;width:10.0px;font-size:3.1px;background-image:linear-gradient(90deg,#5a79b0,#a3824c,#a3824c,#675a8e);opacity:1.00">clasific</p>
<p class="t" style="left:104.5px;top:157.5px;width:8.0px;font-size:3.1px;background-image:linear-gradient(90deg,#675a8e,#5a79b0,#a3824c);opacity:1.00">salida </p>
<p class="t" style="left:121.5px;top:157.5px;width:6.0px;font-size:3.1px;background-image:linear-gradient(90deg,#675a8e,#5a79b0);opacity:1.00">nombre</p>
<p class="t" style="left:146.0px;top:157.5px;width:9.0px;font-size:3.1px;background-image:linear-gradient(90deg,#a3824c,#675a8e,#675a8e,#5a79b0);opacity:1.00">proyecto</p>
<p class="t" style="left:176.0px;top:157.5px;width:9.0px;font-size:3.1px;background-image:linear-gradient(90deg,#a3824c,#5a79b0);opacity:1.00">extracci</p>
<p class="t" style="left:208.0px;top:157.5px;width:6.0px;font-size:3.1px;background-image:linear-gradient(90deg,#675a8e,#675a8e,#5a79b0);opacity:1.00">distan</p>
<p class="t" style="left:240.5px;top:157.5px;width:7.0px;font-size:3.1px;background-image:linear-gradient(90deg,#a3824c,#a3824c,#5a79b0);opacity:1.00">herram</p>
<p class="t" style="left:272.0px;top:157.5px;width:10.0px;font-size:3.1px;background-image:linear-gradient(90deg,#675a8e,#675a8e,#5a79b0,#a3824c);opacity:1.00">mapa ins</p>
<p class="t" style="left:303.5px;top:157.5px;width:9.0px;font-size:3.1px;background-image:linear-gradient(90deg,#5a79b0,#a3824c,#5a79b0,#675a8e);opacity:1.00">extracci</p>
<div style="left:86.50px;top:161.20px;width:247.70px;height:5.90px;background:#ffffff;"></div>
<div style="left:80.00px;top:161.20px;width:6.50px;height:5.90px;background:#ededed;"></div>
<p class="t" style="left:81.0px;top:163.4px;width:3.0px;font-size:3.5px;background-image:linear-gradient(90deg,#484848,#756795,#484848);opacity:1.00">mat</p>
<div style="left:89.00px;top:163.20px;width:0.90px;height:1.80px;background:#6a8fd0;"></div>
<p class="t" style="left:104.5px;top:163.5px;width:12.0px;font-size:3.5px;background-image:linear-gradient(90deg,#67355a,#67355a,#67355a);opacity:1.00">ráster di</p>
<p class="t" style="left:121.5px;top:163.5px;width:19.7px;font-size:3.5px;background-image:linear-gradient(90deg,#a37a3e,#a37a3e,#7588b0);opacity:1.00">nombre datos </p>
<p class="t" style="left:146.0px;top:163.5px;width:17.9px;font-size:3.5px;background-image:linear-gradient(90deg,#5a79b0,#a37a44);opacity:1.00">espacial dir</p>
<p class="t" style="left:176.0px;top:163.5px;width:17.9px;font-size:3.5px;background-image:linear-gradient(90deg,#a3754c,#a3754c);opacity:1.00">herramientas</p>
<p class="t" style="left:208.0px;top:163.5px;width:22.9px;font-size:3.5px;background-image:linear-gradient(90deg,#675a8e,#675a8e,#a38844,#675a8e);opacity:1.00">insertar proyec</p>
<p class="t" style="left:240.5px;top:163.5px;width:8.0px;font-size:3.5px;background-image:linear-gradient(90deg,#5a4c75,#a38844);opacity:1.00">clasif</p>
<p class="t" style="left:272.0px;top:163.5px;width:17.1px;font-size:3.5px;background-image:linear-gradient(90deg,#675a8e,#675a8e);opacity:1.00">salida sobre</p>
<p class="t" style="left:303.5px;top:163.5px;width:8.9px;font-size:3.5px;background-image:linear-gradient(90deg,#a38851,#675a8e);opacity:1.00">selecci</p>
<div style="left:86.50px;top:167.10px;width:247.70px;height:5.90px;background:#e9e9e9;"></div>
<div style="left:80.00px;top:167.10px;width:6.50px;height:5.90px;background:#ededed;"></div>
<p class="t" style="left:81.0px;top:169.3px;width:3.0px;font-size:3.5px;background-image:linear-gradient(90deg,#756795,#956c51,#484848);opacity:1.00">con</p>
<p class="t" style="left:104.5px;top:169.4px;width:12.0px;font-size:3.5px;background-image:linear-gradient(90deg,#67355a,#5a3175,#5a3175,#5a3175);opacity:1.00">densidad </p>
<p class="t" style="left:121.5px;top:169.4px;width:18.7px;font-size:3.5px;background-image:linear-gradient(90deg,#7588b0,#a37a3e,#a37a3e);opacity:1.00">vista multiva</p>
<p class="t" style="left:146.0px;top:169.4px;width:18.7px;font-size:3.5px;background-image:linear-gradient(90deg,#a37a44,#5a79b0,#a37a44);opacity:1.00">multivariante</p>
<p class="t" style="left:176.0px;top:169.4px;width:25.0px;font-size:3.5px;background-image:linear-gradient(90deg,#675a8e,#675a8e,#a3754c,#5a79b0);opacity:1.00">segmentación vis</p>
<p class="t" style="left:208.0px;top:169.4px;width:17.1px;font-size:3.5px;background-image:linear-gradient(90deg,#675a8e,#5a79b0);opacity:1.00">herramientas</p>
<p class="t" style="left:240.5px;top:169.4px;width:7.7px;font-size:3.5px;background-image:linear-gradient(90deg,#a38844,#5a4c75);opacity:1.00">vecind</p>
<p class="t" style="left:272.0px;top:169.4px;width:16.4px;font-size:3.5px;background-image:linear-gradient(90deg,#a3754c,#675a8e);opacity:1.00">conversión </p>
<p class="t" style="left:303.5px;top:169.4px;width:6.4px;font-size:3.5px;background-image:linear-gradient(90deg,#5a4c75,#5a4c75);opacity:1.00">extra</p>
<div style="left:86.50px;top:173.00px;width:247.70px;height:5.90px;background:#ffffff;"></div>
<div style="left:80.00px;top:173.00px;width:6.50px;height:5.90px;background:#ededed;"></div>
<p class="t" style="left:81.0px;top:175.2px;width:3.0px;font-size:3.5px;background-image:linear-gradient(90deg,#756795,#956c51);opacity:1.00">imá</p>
<div style="left:89.00px;top:175.00px;width:0.90px;height:1.80px;background:#6a8fd0;"></div>
<p class="t" style="left:104.5px;top:175.3px;width:12.0px;font-size:3.5px;background-image:linear-gradient(90deg,#88516c,#754c82,#67355a);opacity:1.00">superfici</p>
<p class="t" style="left:121.5px;top:175.3px;width:21.7px;font-size:3.5px;background-image:linear-gradient(90deg,#7588b0,#a37a3e);opacity:1.00">multivariante </p>
<p class="t" style="left:146.0px;top:175.3px;width:19.9px;font-size:3.5px;background-image:linear-gradient(90deg,#5a79b0,#5a79b0);opacity:1.00">barrios orige</p>
<p class="t" style="left:176.0px;top:175.3px;width:20.1px;font-size:3.5px;background-image:linear-gradient(90deg,#a3754c,#a3754c,#5a79b0,#5a79b0);opacity:1.00">ráster espaci</p>
<p class="t" style="left:208.0px;top:175.3px;width:24.0px;font-size:3.5px;background-image:linear-gradient(90deg,#5a79b0,#5a79b0,#a38844,#a38844);opacity:1.00">espacial catálog</p>
<p class="t" style="left:240.5px;top:175.3px;width:7.1px;font-size:3.5px;background-image:linear-gradient(90deg,#a38844,#a38844,#5a4c75,#a38844);opacity:1.00">entida</p>
<p class="t" style="left:272.0px;top:175.3px;width:16.1px;font-size:3.5px;background-image:linear-gradient(90deg,#a3754c,#a3754c,#675a8e,#675a8e);opacity:1.00">vecindad so</p>
<p class="t" style="left:303.5px;top:175.3px;width:7.3px;font-size:3.5px;background-image:linear-gradient(90deg,#a38851,#5a4c75);opacity:1.00">origen</p>
<div style="left:86.50px;top:178.90px;width:247.70px;height:5.90px;background:#e9e9e9;"></div>
<div style="left:80.00px;top:178.90px;width:6.50px;height:5.90px;background:#ededed;"></div>
<p class="t" style="left:81.0px;top:181.1px;width:3.0px;font-size:3.5px;background-image:linear-gradient(90deg,#956c51,#756795);opacity:1.00">ent</p>
<div style="left:89.00px;top:180.90px;width:0.90px;height:1.80px;background:#333;"></div>
<p class="t" style="left:104.5px;top:181.2px;width:12.0px;font-size:3.5px;background-image:linear-gradient(90deg,#88516c,#88516c,#88516c);opacity:1.00">matemátic</p>
<p class="t" style="left:121.5px;top:181.2px;width:20.2px;font-size:3.5px;background-image:linear-gradient(90deg,#7588b0,#7588b0,#7588b0,#5a79b0);opacity:1.00">densidad tabla</p>
<p class="t" style="left:146.0px;top:181.2px;width:19.9px;font-size:3.5px;background-image:linear-gradient(90deg,#674c95,#674c95);opacity:1.00">vecindad inse</p>
<p class="t" style="left:176.0px;top:181.2px;width:23.1px;font-size:3.5px;background-image:linear-gradient(90deg,#675a8e,#5a79b0);opacity:1.00">matemática sobr</p>
<p class="t" style="left:208.0px;top:181.2px;width:23.6px;font-size:3.5px;background-image:linear-gradient(90deg,#a38844,#a38844);opacity:1.00">vecindad espacia</p>
<p class="t" style="left:240.5px;top:181.2px;width:4.1px;font-size:3.5px;background-image:linear-gradient(90deg,#5a4c75,#5a79b0);opacity:1.00">hidr</p>
<p class="t" style="left:272.0px;top:181.2px;width:21.1px;font-size:3.5px;background-image:linear-gradient(90deg,#a3754c,#5a79b0,#5a79b0,#675a8e);opacity:1.00">superficie map</p>
<p class="t" style="left:303.5px;top:181.2px;width:6.3px;font-size:3.5px;background-image:linear-gradient(90deg,#675a8e,#5a4c75,#a38851,#a38851);opacity:1.00">munic</p>
<div style="left:86.50px;top:184.80px;width:247.70px;height:5.90px;background:#ffffff;"></div>
<div style="left:80.00px;top:184.80px;width:6.50px;height:5.90px;background:#ededed;"></div>
<p class="t" style="left:81.0px;top:187.0px;width:3.0px;font-size:3.5px;background-image:linear-gradient(90deg,#756795,#956c51,#956c51);opacity:1.00">map</p>
<p class="t" style="left:104.5px;top:187.1px;width:12.0px;font-size:3.5px;background-image:linear-gradient(90deg,#67355a,#67355a);opacity:1.00">álgebra n</p>
<p class="t" style="left:121.5px;top:187.1px;width:21.2px;font-size:3.5px;background-image:linear-gradient(90deg,#5a79b0,#a37a3e,#a37a3e,#7588b0);opacity:1.00">interpolación </p>
<p class="t" style="left:146.0px;top:187.1px;width:15.1px;font-size:3.5px;background-image:linear-gradient(90deg,#a37a44,#674c95);opacity:1.00">editar conv</p>
<p class="t" style="left:176.0px;top:187.1px;width:16.3px;font-size:3.5px;background-image:linear-gradient(90deg,#a3754c,#a3754c,#675a8e,#675a8e);opacity:1.00">sobreposici</p>
<p class="t" style="left:208.0px;top:187.1px;width:22.1px;font-size:3.5px;background-image:linear-gradient(90deg,#a38844,#675a8e,#5a79b0,#a38844);opacity:1.00">origen código h</p>
<p class="t" style="left:240.5px;top:187.1px;width:5.6px;font-size:3.5px;background-image:linear-gradient(90deg,#5a4c75,#5a79b0);opacity:1.00">imáge</p>
<p class="t" style="left:272.0px;top:187.1px;width:12.3px;font-size:3.5px;background-image:linear-gradient(90deg,#675a8e,#a3754c,#675a8e,#a3754c);opacity:1.00">hidrologí</p>
<p class="t" style="left:303.5px;top:187.1px;width:8.0px;font-size:3.5px;background-image:linear-gradient(90deg,#675a8e,#a38851);opacity:1.00">compar</p>
<div style="left:86.50px;top:190.70px;width:247.70px;height:5.90px;background:#e9e9e9;"></div>
<div style="left:80.00px;top:190.70px;width:6.50px;height:5.90px;background:#ededed;"></div>
<p class="t" style="left:81.0px;top:192.9px;width:3.0px;font-size:3.5px;background-image:linear-gradient(90deg,#484848,#756795,#484848,#956c51);opacity:1.00">cap</p>
<div style="left:89.00px;top:192.70px;width:0.90px;height:1.80px;background:#c08040;"></div>
<p class="t" style="left:104.5px;top:193.0px;width:12.0px;font-size:3.5px;background-image:linear-gradient(90deg,#88516c,#88516c,#754c82,#754c82);opacity:1.00">álgebra s</p>
<p class="t" style="left:121.5px;top:193.0px;width:21.5px;font-size:3.5px;background-image:linear-gradient(90deg,#a37a3e,#a37a3e,#5a79b0,#a37a3e);opacity:1.00">catálogo selec</p>
<p class="t" style="left:146.0px;top:193.0px;width:16.6px;font-size:3.5px;background-image:linear-gradient(90deg,#5a79b0,#5a79b0,#a37a44,#a37a44);opacity:1.00">población i</p>
<p class="t" style="left:176.0px;top:193.0px;width:24.9px;font-size:3.5px;background-image:linear-gradient(90deg,#a3754c,#a3754c,#5a79b0);opacity:1.00">multivariante sa</p>
<p class="t" style="left:208.0px;top:193.0px;width:18.5px;font-size:3.5px;background-image:linear-gradient(90deg,#5a79b0,#5a79b0,#a38844,#a38844);opacity:1.00">extracción s</p>
<p class="t" style="left:240.5px;top:193.0px;width:7.9px;font-size:3.5px;background-image:linear-gradient(90deg,#a38844,#5a4c75,#a38844,#5a79b0);opacity:1.00">de geo</p>
<p class="t" style="left:272.0px;top:193.0px;width:23.4px;font-size:3.5px;background-image:linear-gradient(90deg,#a3754c,#675a8e,#5a79b0);opacity:1.00">nombre clasific</p>
<p class="t" style="left:303.5px;top:193.0px;width:8.3px;font-size:3.5px;background-image:linear-gradient(90deg,#675a8e,#675a8e,#675a8e,#a38851);opacity:1.00">solar </p>
<div style="left:86.50px;top:196.60px;width:247.70px;height:5.90px;background:#ffffff;"></div>
<div style="left:80.00px;top:196.60px;width:6.50px;height:5.90px;background:#ededed;"></div>
<p class="t" style="left:81.0px;top:198.8px;width:3.0px;font-size:3.5px;background-image:linear-gradient(90deg,#756795,#484848);opacity:1.00">vis</p>
<div style="left:89.00px;top:198.60px;width:0.90px;height:1.80px;background:#e0b040;"></div>
<p class="t" style="left:104.5px;top:198.9px;width:12.0px;font-size:3.5px;background-image:linear-gradient(90deg,#754c82,#88516c,#67355a,#5a3175);opacity:1.00">espacial </p>
<p class="t" style="left:121.5px;top:198.9px;width:18.5px;font-size:3.5px;background-image:linear-gradient(90deg,#a37a3e,#7588b0,#5a79b0,#a37a3e);opacity:1.00">distancia sol</p>
<p class="t" style="left:146.0px;top:198.9px;width:18.3px;font-size:3.5px;background-image:linear-gradient(90deg,#5a79b0,#674c95,#a37a44);opacity:1.00">acumulación </p>
<p class="t" style="left:176.0px;top:198.9px;width:25.6px;font-size:3.5px;background-image:linear-gradient(90deg,#5a79b0,#5a79b0,#675a8e,#675a8e);opacity:1.00">acumulación de ve</p>
<p class="t" style="left:208.0px;top:198.9px;width:18.4px;font-size:3.5px;background-image:linear-gradient(90deg,#5a79b0,#a38844,#675a8e,#a38844);opacity:1.00">hidrología d</p>
<p class="t" style="left:240.5px;top:198.9px;width:7.7px;font-size:3.5px;background-image:linear-gradient(90deg,#a38844,#a38844,#a38844);opacity:1.00">direcc</p>
<p class="t" style="left:272.0px;top:198.9px;width:23.3px;font-size:3.5px;background-image:linear-gradient(90deg,#5a79b0,#a3754c,#a3754c,#675a8e);opacity:1.00">salida proyecto</p>
<p class="t" style="left:303.5px;top:198.9px;width:7.2px;font-size:3.5px;background-image:linear-gradient(90deg,#675a8e,#5a4c75,#5a4c75,#675a8e);opacity:1.00">salida</p>
<div style="left:86.50px;top:202.50px;width:247.70px;height:5.90px;background:#e9e9e9;"></div>
<div style="left:80.00px;top:202.50px;width:6.50px;height:5.90px;background:#ededed;"></div>
<p class="t" style="left:81.0px;top:204.8px;width:3.0px;font-size:3.5px;background-image:linear-gradient(90deg,#956c51,#756795,#956c51,#756795);opacity:1.00">gen</p>
<p class="t" style="left:104.5px;top:204.8px;width:12.0px;font-size:3.5px;background-image:linear-gradient(90deg,#67355a,#88516c,#67355a,#67355a);opacity:1.00">local rec</p>
<p class="t" style="left:121.5px;top:204.8px;width:19.5px;font-size:3.5px;background-image:linear-gradient(90deg,#5a79b0,#5a79b0,#7588b0);opacity:1.00">generalizació</p>
<p class="t" style="left:146.0px;top:204.8px;width:18.2px;font-size:3.5px;background-image:linear-gradient(90deg,#5a79b0,#674c95,#a37a44);opacity:1.00">municipio ve</p>
<p class="t" style="left:176.0px;top:204.8px;width:19.4px;font-size:3.5px;background-image:linear-gradient(90deg,#675a8e,#a3754c,#a3754c);opacity:1.00">capa conversi</p>
<p class="t" style="left:208.0px;top:204.8px;width:24.0px;font-size:3.5px;background-image:linear-gradient(90deg,#5a79b0,#a38844,#675a8e,#5a79b0);opacity:1.00">espacial mapa co</p>
<p class="t" style="left:240.5px;top:204.8px;width:5.5px;font-size:3.5px;background-image:linear-gradient(90deg,#5a79b0,#a38844);opacity:1.00">métod</p>
<p class="t" style="left:272.0px;top:204.8px;width:10.4px;font-size:3.5px;background-image:linear-gradient(90deg,#5a79b0,#a3754c,#5a79b0);opacity:1.00">de solar</p>
<p class="t" style="left:303.5px;top:204.8px;width:6.3px;font-size:3.5px;background-image:linear-gradient(90deg,#a38851,#675a8e);opacity:1.00">provi</p>
<div style="left:86.50px;top:208.40px;width:247.70px;height:5.90px;background:#ffffff;"></div>
<div style="left:80.00px;top:208.40px;width:6.50px;height:5.90px;background:#ededed;"></div>
<p class="t" style="left:81.0px;top:210.6px;width:3.0px;font-size:3.5px;background-image:linear-gradient(90deg,#484848,#484848);opacity:1.00">sol</p>
<div style="left:89.00px;top:210.40px;width:0.90px;height:1.80px;background:#c08040;"></div>
<p class="t" style="left:104.5px;top:210.7px;width:12.0px;font-size:3.5px;background-image:linear-gradient(90deg,#754c82,#5a3175,#754c82,#88516c);opacity:1.00">mapa zona</p>
<p class="t" style="left:121.5px;top:210.7px;width:18.0px;font-size:3.5px;background-image:linear-gradient(90deg,#7588b0,#7588b0,#7588b0);opacity:1.00">extracción c</p>
<p class="t" style="left:146.0px;top:210.7px;width:15.5px;font-size:3.5px;background-image:linear-gradient(90deg,#a37a44,#a37a44,#5a79b0);opacity:1.00">mapa editar</p>
<p class="t" style="left:176.0px;top:210.7px;width:22.4px;font-size:3.5px;background-image:linear-gradient(90deg,#a3754c,#5a79b0);opacity:1.00">segmentación mé</p>
<p class="t" style="left:208.0px;top:210.7px;width:20.7px;font-size:3.5px;background-image:linear-gradient(90deg,#5a79b0,#a38844);opacity:1.00">extracción esp</p>
<p class="t" style="left:240.5px;top:210.7px;width:6.3px;font-size:3.5px;background-image:linear-gradient(90deg,#a38844,#5a79b0,#5a4c75,#5a79b0);opacity:1.00">multi</p>
<p class="t" style="left:272.0px;top:210.7px;width:14.8px;font-size:3.5px;background-image:linear-gradient(90deg,#a3754c,#a3754c,#5a79b0);opacity:1.00">herramient</p>
<p class="t" style="left:303.5px;top:210.7px;width:8.9px;font-size:3.5px;background-image:linear-gradient(90deg,#5a4c75,#675a8e,#a38851);opacity:1.00">poblaci</p>
<div style="left:86.50px;top:214.30px;width:247.70px;height:5.90px;background:#9ff3f8;"></div>
<div style="left:80.00px;top:214.30px;width:6.50px;height:5.90px;background:#e2ecf4;"></div>
<div style="left:80.00px;top:214.30px;width:0.80px;height:5.90px;background:#2b7bd2;"></div>
<p class="t" style="left:81.0px;top:216.5px;width:3.0px;font-size:3.5px;background-image:linear-gradient(90deg,#756795,#956c51,#484848);opacity:1.00">mun</p>
<div style="left:89.00px;top:216.30px;width:0.90px;height:1.80px;background:#e0b040;"></div>
<p class="t" style="left:104.5px;top:216.6px;width:12.0px;font-size:3.5px;background-image:linear-gradient(90deg,#88516c,#67355a,#754c82,#754c82);opacity:1.00">entidad v</p>
<p class="t" style="left:121.5px;top:216.6px;width:18.7px;font-size:3.5px;background-image:linear-gradient(90deg,#5a79b0,#5a79b0);opacity:1.00">herramientas </p>
<p class="t" style="left:146.0px;top:216.6px;width:16.2px;font-size:3.5px;background-image:linear-gradient(90deg,#a37a44,#5a79b0,#5a79b0);opacity:1.00">acumulación</p>
<p class="t" style="left:176.0px;top:216.6px;width:18.9px;font-size:3.5px;background-image:linear-gradient(90deg,#a3754c,#675a8e);opacity:1.00">multivariante</p>
<p class="t" style="left:208.0px;top:216.6px;width:23.5px;font-size:3.5px;background-image:linear-gradient(90deg,#675a8e,#675a8e,#675a8e,#a38844);opacity:1.00">local acumulaci</p>
<p class="t" style="left:240.5px;top:216.6px;width:5.4px;font-size:3.5px;background-image:linear-gradient(90deg,#a38844,#5a79b0);opacity:1.00">de pl</p>
<p class="t" style="left:272.0px;top:216.6px;width:19.0px;font-size:3.5px;background-image:linear-gradient(90deg,#5a79b0,#5a79b0,#675a8e);opacity:1.00">tabla acumula</p>
<p class="t" style="left:303.5px;top:216.6px;width:6.9px;font-size:3.5px;background-image:linear-gradient(90deg,#a38851,#675a8e,#a38851,#a38851);opacity:1.00">genera</p>
<div style="left:86.50px;top:220.20px;width:247.70px;height:5.90px;background:#ffffff;"></div>
<div style="left:80.00px;top:220.20px;width:6.50px;height:5.90px;background:#ededed;"></div>
<p class="t" style="left:81.0px;top:222.4px;width:3.0px;font-size:3.5px;background-image:linear-gradient(90deg,#756795,#484848,#956c51);opacity:1.00">com</p>
<p class="t" style="left:104.5px;top:222.5px;width:12.0px;font-size:3.5px;background-image:linear-gradient(90deg,#67355a,#88516c,#67355a,#754c82);opacity:1.00">local sel</p>
<p class="t" style="left:121.5px;top:222.5px;width:18.4px;font-size:3.5px;background-image:linear-gradient(90deg,#7588b0,#a37a3e,#7588b0);opacity:1.00">superficie s</p>
<p class="t" style="left:146.0px;top:222.5px;width:15.5px;font-size:3.5px;background-image:linear-gradient(90deg,#a37a44,#674c95,#a37a44,#5a79b0);opacity:1.00">planar rást</p>
<p class="t" style="left:176.0px;top:222.5px;width:25.4px;font-size:3.5px;background-image:linear-gradient(90deg,#675a8e,#5a79b0,#a3754c);opacity:1.00">población mapa da</p>
<p class="t" style="left:208.0px;top:222.5px;width:22.4px;font-size:3.5px;background-image:linear-gradient(90deg,#5a79b0,#675a8e,#5a79b0,#a38844);opacity:1.00">método herramie</p>
<p class="t" style="left:240.5px;top:222.5px;width:5.5px;font-size:3.5px;background-image:linear-gradient(90deg,#5a4c75,#5a4c75,#a38844);opacity:1.00">vecin</p>
<p class="t" style="left:272.0px;top:222.5px;width:20.3px;font-size:3.5px;background-image:linear-gradient(90deg,#675a8e,#675a8e,#5a79b0);opacity:1.00">proyecto direc</p>
<p class="t" style="left:303.5px;top:222.5px;width:8.0px;font-size:3.5px;background-image:linear-gradient(90deg,#675a8e,#a38851);opacity:1.00">editar</p>
<div style="left:86.50px;top:220.20px;width:247.70px;height:0.60px;background:#c0c0c0;"></div>
<div style="left:86.50px;top:226.10px;width:247.70px;height:5.90px;background:#e9e9e9;"></div>
<div style="left:80.00px;top:226.10px;width:6.50px;height:5.90px;background:#ededed;"></div>
<p class="t" style="left:81.0px;top:228.3px;width:3.0px;font-size:3.5px;background-image:linear-gradient(90deg,#956c51,#956c51);opacity:1.00">sup</p>
<div style="left:89.00px;top:228.10px;width:0.90px;height:1.80px;background:#6a8fd0;"></div>
<p class="t" style="left:104.5px;top:228.4px;width:12.0px;font-size:3.5px;background-image:linear-gradient(90deg,#5a3175,#88516c,#5a3175,#5a3175);opacity:1.00">insertar </p>
<p class="t" style="left:121.5px;top:228.4px;width:19.6px;font-size:3.5px;background-image:linear-gradient(90deg,#7588b0,#5a79b0);opacity:1.00">acumulación s</p>
<p class="t" style="left:146.0px;top:228.4px;width:21.9px;font-size:3.5px;background-image:linear-gradient(90deg,#674c95,#674c95,#674c95,#a37a44);opacity:1.00">entidad tabla v</p>
<p class="t" style="left:176.0px;top:228.4px;width:27.5px;font-size:3.5px;background-image:linear-gradient(90deg,#5a79b0,#5a79b0,#5a79b0,#5a79b0);opacity:1.00">análisis local sol</p>
<p class="t" style="left:208.0px;top:228.4px;width:21.1px;font-size:3.5px;background-image:linear-gradient(90deg,#a38844,#5a79b0,#a38844);opacity:1.00">municipio rást</p>
<p class="t" style="left:240.5px;top:228.4px;width:7.5px;font-size:3.5px;background-image:linear-gradient(90deg,#5a4c75,#5a79b0,#5a4c75);opacity:1.00">origen</p>
<p class="t" style="left:272.0px;top:228.4px;width:17.4px;font-size:3.5px;background-image:linear-gradient(90deg,#675a8e,#a3754c);opacity:1.00">capa método </p>
<p class="t" style="left:303.5px;top:228.4px;width:7.1px;font-size:3.5px;background-image:linear-gradient(90deg,#5a4c75,#675a8e,#5a4c75);opacity:1.00">mapa p</p>
<div style="left:86.50px;top:232.00px;width:247.70px;height:5.90px;background:#ffffff;"></div>
<div style="left:80.00px;top:232.00px;width:6.50px;height:5.90px;background:#ededed;"></div>
<p class="t" style="left:81.0px;top:234.2px;width:3.0px;font-size:3.5px;background-image:linear-gradient(90deg,#484848,#956c51,#756795,#484848);opacity:1.00">ext</p>
<div style="left:89.00px;top:234.00px;width:0.90px;height:1.80px;background:#6a8fd0;"></div>
<p class="t" style="left:104.5px;top:234.3px;width:12.0px;font-size:3.5px;background-image:linear-gradient(90deg,#88516c,#88516c);opacity:1.00">zonal mul</p>
<p class="t" style="left:121.5px;top:234.3px;width:21.7px;font-size:3.5px;background-image:linear-gradient(90deg,#7588b0,#a37a3e,#5a79b0);opacity:1.00">provincia proy</p>
<p class="t" style="left:146.0px;top:234.3px;width:16.7px;font-size:3.5px;background-image:linear-gradient(90deg,#674c95,#5a79b0,#a37a44);opacity:1.00">segmentació</p>
<p class="t" style="left:176.0px;top:234.3px;width:21.9px;font-size:3.5px;background-image:linear-gradient(90deg,#675a8e,#675a8e);opacity:1.00">planar vista or</p>
<p class="t" style="left:208.0px;top:234.3px;width:20.1px;font-size:3.5px;background-image:linear-gradient(90deg,#a38844,#675a8e,#5a79b0,#a38844);opacity:1.00">municipio edi</p>
<p class="t" style="left:240.5px;top:234.3px;width:5.6px;font-size:3.5px;background-image:linear-gradient(90deg,#5a4c75,#5a79b0,#5a4c75,#5a4c75);opacity:1.00">densi</p>
<p class="t" style="left:272.0px;top:234.3px;width:21.1px;font-size:3.5px;background-image:linear-gradient(90deg,#675a8e,#5a79b0,#675a8e,#5a79b0);opacity:1.00">provincia mult</p>
<p class="t" style="left:303.5px;top:234.3px;width:6.2px;font-size:3.5px;background-image:linear-gradient(90deg,#675a8e,#675a8e,#675a8e,#675a8e);opacity:1.00">vecin</p>
<div style="left:174.40px;top:155.20px;width:0.90px;height:82.70px;background:#c8c8c8;"></div>
<div style="left:86.30px;top:155.20px;width:0.50px;height:82.70px;background:#d8d8d8;"></div>
<div style="left:334.20px;top:155.20px;width:39.00px;height:82.60px;background:#ffffff;"></div>
<div style="left:334.20px;top:155.20px;width:0.60px;height:82.70px;background:#d0d0d0;"></div>
<div style="left:373.50px;top:156.00px;width:1.60px;height:81.00px;background:#ececec;"></div>
<div style="left:373.50px;top:180.00px;width:1.60px;height:21.50px;background:#7ab4e4;"></div>
<div style="left:80.00px;top:237.80px;width:296.00px;height:8.20px;background:#f4f4f4;"></div>
<div style="left:80.80px;top:238.80px;width:3.60px;height:3.60px;background:#9cc0e8;border:0.5px solid #5a8ac0;box-sizing:border-box"></div>
<div style="left:86.50px;top:240.00px;width:2.00px;height:0.80px;background:#555;"></div>
<div style="left:92.00px;top:239.50px;width:0.80px;height:2.00px;background:#555;"></div>
<div style="left:96.00px;top:239.50px;width:0.80px;height:2.00px;background:#555;"></div>
<p class="t" style="left:101.0px;top:240.3px;width:22.0px;font-size:3.5px;background-image:linear-gradient(90deg,#5a4c75,#4c4c75,#4c4c75);opacity:1.00">mapa clasificac</p>
<p class="t" style="left:284.0px;top:240.2px;width:10.0px;font-size:3.1px;background-image:linear-gradient(90deg,#a3a3b0,#a3a3b0,#757595);opacity:0.96">acumulac</p>
<p class="t" style="left:298.0px;top:239.8px;width:8.0px;font-size:3.1px;background-image:linear-gradient(90deg,#90909e,#90909e,#90909e,#90909e);opacity:0.96">interpo</p>
<div style="left:315.00px;top:240.80px;width:26.00px;height:0.70px;background:#999;"></div>
<div style="left:328.00px;top:239.50px;width:0.90px;height:2.60px;background:#555;"></div>
<p class="t" style="left:346.0px;top:240.2px;width:8.0px;font-size:3.5px;background-image:linear-gradient(90deg,#4c4c75,#5a79b0,#5a79b0,#5a79b0);opacity:1.00">munici</p>
<div style="left:361.00px;top:240.20px;width:1.50px;height:1.50px;background:#666;"></div>
<div style="left:369.50px;top:239.00px;width:3.00px;height:3.60px;background:#3a8ad8;opacity:0.7"></div>
<div style="left:378.20px;top:37.30px;width:76.80px;height:209.00px;background:#f6f7f7;border:0.6px solid #d4d4d4;box-sizing:border-box"></div>
<p class="t" style="left:380.5px;top:40.9px;width:27.7px;font-size:3.5px;background-image:linear-gradient(90deg,#675a8e,#3167b0);opacity:1.00">vista tabla geopro</p>
<div style="left:438.50px;top:41.20px;width:1.50px;height:0.80px;background:#888;"></div>
<div style="left:442.50px;top:40.50px;width:0.80px;height:2.00px;background:#888;"></div>
<div style="left:446.00px;top:40.50px;width:1.80px;height:1.80px;background:#888;"></div>
<div style="left:383.00px;top:46.00px;width:69.00px;height:6.20px;background:#ffffff;"></div>
<div style="left:384.00px;top:51.60px;width:60.00px;height:0.60px;background:#9a9a9a;"></div>
<div style="left:379.50px;top:47.20px;width:1.40px;height:3.00px;background:#bbb;"></div>
<p class="t" style="left:388.0px;top:48.6px;width:24.3px;font-size:3.1px;background-image:linear-gradient(90deg,#3e5a95,#5a79b0,#3e5a95,#5a79b0);opacity:0.96">municipio código z</p>
<div style="left:439.00px;top:47.20px;width:2.00px;height:2.00px;background:#777;border-radius:50%"></div>
<div style="left:448.50px;top:46.50px;width:2.00px;height:4.00px;background:#888;"></div>
<p class="t" style="left:382.0px;top:56.9px;width:10.0px;font-size:3.1px;background-image:linear-gradient(90deg,#5a4c75,#a3754c,#314c95,#314c95);opacity:1.00">código p</p>
<p class="t" style="left:396.0px;top:56.9px;width:27.0px;font-size:3.1px;background-image:linear-gradient(90deg,#675a8e,#a3824c,#a3824c,#a3824c);opacity:1.00">conversión densidad </p>
<div style="left:395.00px;top:59.20px;width:31.00px;height:0.90px;background:#2b7bd2;"></div>
<div style="left:452.20px;top:62.00px;width:1.40px;height:178.00px;background:#e9e9e9;"></div>
<div style="left:381.50px;top:63.90px;width:0.80px;height:1.30px;background:#999;"></div>
<div style="left:384.50px;top:63.30px;width:4.00px;height:3.00px;background:#d5603a;"></div>
<div style="left:385.00px;top:64.30px;width:3.00px;height:0.60px;background:#f4c0a0;"></div>
<p class="t" style="left:390.0px;top:64.2px;width:53.0px;font-size:3.5px;background-image:linear-gradient(90deg,#5a4c75,#5a4c95,#5a4c75,#a36c3e);opacity:0.80">generalización local análisis bar</p>
<div style="left:381.50px;top:70.00px;width:0.80px;height:1.30px;background:#999;"></div>
<div style="left:384.50px;top:69.40px;width:4.00px;height:3.00px;background:#d5603a;"></div>
<div style="left:385.00px;top:70.40px;width:3.00px;height:0.60px;background:#f4c0a0;"></div>
<p class="t" style="left:390.0px;top:70.3px;width:54.8px;font-size:3.5px;background-image:linear-gradient(90deg,#bea36c,#5a79b0);opacity:0.80">proyecto multivariante entidad edi</p>
<div style="left:381.50px;top:76.10px;width:0.80px;height:1.30px;background:#999;"></div>
<div style="left:384.50px;top:75.50px;width:4.00px;height:3.00px;background:#d5603a;"></div>
<div style="left:385.00px;top:76.50px;width:3.00px;height:0.60px;background:#f4c0a0;"></div>
<p class="t" style="left:390.0px;top:76.4px;width:54.2px;font-size:3.5px;background-image:linear-gradient(90deg,#bea36c,#7595be,#5a79b0,#5a79b0);opacity:0.80">espacial sobreposición planar anál</p>
<div style="left:381.50px;top:82.20px;width:0.80px;height:1.30px;background:#999;"></div>
<div style="left:384.50px;top:81.60px;width:4.00px;height:3.00px;background:#d5603a;"></div>
<div style="left:385.00px;top:82.60px;width:3.00px;height:0.60px;background:#f4c0a0;"></div>
<p class="t" style="left:390.0px;top:82.5px;width:37.7px;font-size:3.5px;background-image:linear-gradient(90deg,#bea36c,#bea36c,#bea36c);opacity:0.80">zonal superficie mapa ca</p>
<div style="left:381.50px;top:88.30px;width:0.80px;height:1.30px;background:#999;"></div>
<div style="left:384.50px;top:87.70px;width:4.00px;height:3.00px;background:#d5603a;"></div>
<div style="left:385.00px;top:88.70px;width:3.00px;height:0.60px;background:#f4c0a0;"></div>
<p class="t" style="left:390.0px;top:88.6px;width:56.4px;font-size:3.5px;background-image:linear-gradient(90deg,#5a4c75,#5a4c75,#5a4c75);opacity:0.80">dirección generalización dirección </p>
<div style="left:381.50px;top:94.40px;width:0.80px;height:1.30px;background:#999;"></div>
<div style="left:384.50px;top:93.80px;width:4.00px;height:3.00px;background:#d5603a;"></div>
<div style="left:385.00px;top:94.80px;width:3.00px;height:0.60px;background:#f4c0a0;"></div>
<p class="t" style="left:390.0px;top:94.7px;width:39.6px;font-size:3.5px;background-image:linear-gradient(90deg,#5a4c95,#675a8e,#5a4c75,#5a4c75);opacity:0.80">origen hidrología ráster </p>
<div style="left:381.50px;top:100.50px;width:0.80px;height:1.30px;background:#999;"></div>
<div style="left:384.50px;top:99.90px;width:4.00px;height:3.00px;background:#d5603a;"></div>
<div style="left:385.00px;top:100.90px;width:3.00px;height:0.60px;background:#f4c0a0;"></div>
<p class="t" style="left:390.0px;top:100.8px;width:35.8px;font-size:3.5px;background-image:linear-gradient(90deg,#a36c3e,#4c4c88,#a36c3e,#4c4c88);opacity:0.80">de imágenes espacial vi</p>
<div style="left:381.50px;top:106.60px;width:0.80px;height:1.30px;background:#999;"></div>
<div style="left:384.50px;top:106.00px;width:4.00px;height:3.00px;background:#d5603a;"></div>
<div style="left:385.00px;top:107.00px;width:3.00px;height:0.60px;background:#f4c0a0;"></div>
<p class="t" style="left:390.0px;top:106.9px;width:29.0px;font-size:3.5px;background-image:linear-gradient(90deg,#a36c3e,#675a8e,#675a8e);opacity:0.80">zonal imágenes dire</p>
<div style="left:381.50px;top:112.70px;width:0.80px;height:1.30px;background:#999;"></div>
<div style="left:384.50px;top:112.10px;width:4.00px;height:3.00px;background:#d5603a;"></div>
<div style="left:385.00px;top:113.10px;width:3.00px;height:0.60px;background:#f4c0a0;"></div>
<p class="t" style="left:390.0px;top:113.0px;width:42.4px;font-size:3.5px;background-image:linear-gradient(90deg,#5a4c75,#5a4c95,#5a4c75,#5a4c95);opacity:0.80">ráster interpolación datos </p>
<div style="left:381.50px;top:118.80px;width:0.80px;height:1.30px;background:#999;"></div>
<div style="left:384.50px;top:118.20px;width:4.00px;height:3.00px;background:#d5603a;"></div>
<div style="left:385.00px;top:119.20px;width:3.00px;height:0.60px;background:#f4c0a0;"></div>
<p class="t" style="left:390.0px;top:119.1px;width:31.0px;font-size:3.5px;background-image:linear-gradient(90deg,#675a8e,#5a4c75,#a36c3e,#5a4c95);opacity:0.80">multivariante datos </p>
<div style="left:381.50px;top:124.90px;width:0.80px;height:1.30px;background:#999;"></div>
<div style="left:384.50px;top:124.30px;width:4.00px;height:3.00px;background:#d5603a;"></div>
<div style="left:385.00px;top:125.30px;width:3.00px;height:0.60px;background:#f4c0a0;"></div>
<p class="t" style="left:390.0px;top:125.2px;width:34.8px;font-size:3.5px;background-image:linear-gradient(90deg,#5a79b0,#bea36c,#7595be,#7595be);opacity:0.80">superficie selección g</p>
<div style="left:381.50px;top:131.00px;width:0.80px;height:1.30px;background:#999;"></div>
<div style="left:384.50px;top:130.40px;width:4.00px;height:3.00px;background:#d5603a;"></div>
<div style="left:385.00px;top:131.40px;width:3.00px;height:0.60px;background:#f4c0a0;"></div>
<p class="t" style="left:390.0px;top:131.3px;width:45.5px;font-size:3.5px;background-image:linear-gradient(90deg,#7595be,#7595be,#7595be,#bea36c);opacity:0.80">sobreposición nombre generali</p>
<div style="left:381.50px;top:137.10px;width:0.80px;height:1.30px;background:#999;"></div>
<div style="left:384.50px;top:136.50px;width:4.00px;height:3.00px;background:#d5603a;"></div>
<div style="left:385.00px;top:137.50px;width:3.00px;height:0.60px;background:#f4c0a0;"></div>
<p class="t" style="left:390.0px;top:137.4px;width:50.8px;font-size:3.5px;background-image:linear-gradient(90deg,#5a4c75,#5a4c95,#675a8e,#a36c3e);opacity:0.80">planar entidad ráster reclasific</p>
<div style="left:386.00px;top:144.50px;width:0.80px;height:1.30px;background:#999;"></div>
<div style="left:388.80px;top:143.70px;width:1.80px;height:2.60px;background:#e8a060;opacity:0.75"></div>
<div style="left:388.60px;top:146.00px;width:2.60px;height:0.60px;background:#d06040;opacity:0.8"></div>
<p class="t" style="left:392.0px;top:144.7px;width:26.4px;font-size:3.5px;background-image:linear-gradient(90deg,#5a79b0,#675a8e);opacity:0.80">superficie compar</p>
<div style="left:386.00px;top:150.55px;width:0.80px;height:1.30px;background:#999;"></div>
<div style="left:388.80px;top:149.75px;width:1.80px;height:2.60px;background:#c85a30;opacity:0.75"></div>
<div style="left:388.60px;top:152.05px;width:2.60px;height:0.60px;background:#d06040;opacity:0.8"></div>
<p class="t" style="left:392.0px;top:150.8px;width:16.6px;font-size:3.5px;background-image:linear-gradient(90deg,#756795,#a38851,#675a8e);opacity:0.80">distancia i</p>
<div style="left:386.00px;top:156.60px;width:0.80px;height:1.30px;background:#999;"></div>
<div style="left:388.80px;top:155.80px;width:1.80px;height:2.60px;background:#e8a060;opacity:0.75"></div>
<div style="left:388.60px;top:158.10px;width:2.60px;height:0.60px;background:#d06040;opacity:0.8"></div>
<p class="t" style="left:392.0px;top:156.8px;width:26.4px;font-size:3.5px;background-image:linear-gradient(90deg,#a35f31,#5a79b0);opacity:0.80">catálogo campos s</p>
<div style="left:386.00px;top:162.65px;width:0.80px;height:1.30px;background:#999;"></div>
<div style="left:388.80px;top:161.85px;width:1.80px;height:2.60px;background:#d06040;opacity:0.75"></div>
<div style="left:388.60px;top:164.15px;width:2.60px;height:0.60px;background:#d06040;opacity:0.8"></div>
<p class="t" style="left:392.0px;top:162.8px;width:22.6px;font-size:3.5px;background-image:linear-gradient(90deg,#5a79b0,#a38851,#675a8e);opacity:0.80">de local imágen</p>
<div style="left:386.00px;top:168.70px;width:0.80px;height:1.30px;background:#999;"></div>
<div style="left:388.80px;top:167.90px;width:1.80px;height:2.60px;background:#c85a30;opacity:0.75"></div>
<div style="left:388.60px;top:170.20px;width:2.60px;height:0.60px;background:#d06040;opacity:0.8"></div>
<p class="t" style="left:392.0px;top:168.9px;width:17.3px;font-size:3.5px;background-image:linear-gradient(90deg,#675a8e,#675a8e,#5a79b0);opacity:0.80">método métod</p>
<div style="left:385.80px;top:172.80px;width:64.50px;height:6.00px;background:#cde0f2;"></div>
<div style="left:385.80px;top:172.80px;width:0.90px;height:6.00px;background:#2b7bd2;"></div>
<div style="left:386.00px;top:174.75px;width:0.80px;height:1.30px;background:#999;"></div>
<div style="left:388.80px;top:173.95px;width:1.80px;height:2.60px;background:#c85a30;opacity:0.75"></div>
<div style="left:388.60px;top:176.25px;width:2.60px;height:0.60px;background:#d06040;opacity:0.8"></div>
<p class="t" style="left:392.0px;top:174.9px;width:15.8px;font-size:3.5px;background-image:linear-gradient(90deg,#5a79b0,#5a79b0);opacity:0.80">campos espa</p>
<div style="left:386.00px;top:180.80px;width:0.80px;height:1.30px;background:#999;"></div>
<div style="left:388.80px;top:180.00px;width:1.80px;height:2.60px;background:#8a8a8a;opacity:0.75"></div>
<div style="left:388.60px;top:182.30px;width:2.60px;height:0.60px;background:#d06040;opacity:0.8"></div>
<p class="t" style="left:392.0px;top:181.0px;width:21.6px;font-size:3.5px;background-image:linear-gradient(90deg,#756795,#675a8e,#756795,#675a8e);opacity:0.80">mapa de código</p>
<div style="left:386.00px;top:186.85px;width:0.80px;height:1.30px;background:#999;"></div>
<div style="left:388.80px;top:186.05px;width:1.80px;height:2.60px;background:#d06040;opacity:0.75"></div>
<div style="left:388.60px;top:188.35px;width:2.60px;height:0.60px;background:#d06040;opacity:0.8"></div>
<p class="t" style="left:392.0px;top:187.0px;width:22.3px;font-size:3.5px;background-image:linear-gradient(90deg,#a35f31,#5a79b0,#5a79b0,#5a79b0);opacity:0.80">provincia espac</p>
<div style="left:386.00px;top:192.90px;width:0.80px;height:1.30px;background:#999;"></div>
<div style="left:388.80px;top:192.10px;width:1.80px;height:2.60px;background:#8a8a8a;opacity:0.75"></div>
<div style="left:388.60px;top:194.40px;width:2.60px;height:0.60px;background:#d06040;opacity:0.8"></div>
<p class="t" style="left:392.0px;top:193.1px;width:21.8px;font-size:3.5px;background-image:linear-gradient(90deg,#675a8e,#5a79b0,#a38851,#a38851);opacity:0.80">generalización</p>
<div style="left:386.00px;top:198.95px;width:0.80px;height:1.30px;background:#999;"></div>
<div style="left:388.80px;top:198.15px;width:1.80px;height:2.60px;background:#d06040;opacity:0.75"></div>
<div style="left:388.60px;top:200.45px;width:2.60px;height:0.60px;background:#d06040;opacity:0.8"></div>
<p class="t" style="left:392.0px;top:199.1px;width:16.5px;font-size:3.5px;background-image:linear-gradient(90deg,#675a8e,#5a79b0);opacity:0.80">acumulación</p>
<div style="left:386.00px;top:205.00px;width:0.80px;height:1.30px;background:#999;"></div>
<div style="left:388.80px;top:204.20px;width:1.80px;height:2.60px;background:#e8a060;opacity:0.75"></div>
<div style="left:388.60px;top:206.50px;width:2.60px;height:0.60px;background:#d06040;opacity:0.8"></div>
<p class="t" style="left:392.0px;top:205.2px;width:22.5px;font-size:3.5px;background-image:linear-gradient(90deg,#675a8e,#5a79b0,#675a8e,#675a8e);opacity:0.80">ráster població</p>
<div style="left:386.00px;top:211.05px;width:0.80px;height:1.30px;background:#999;"></div>
<div style="left:388.80px;top:210.25px;width:1.80px;height:2.60px;background:#e8a060;opacity:0.75"></div>
<div style="left:388.60px;top:212.55px;width:2.60px;height:0.60px;background:#d06040;opacity:0.8"></div>
<p class="t" style="left:392.0px;top:211.2px;width:26.6px;font-size:3.5px;background-image:linear-gradient(90deg,#5a79b0,#5a79b0,#756795);opacity:0.80">matemática selecc</p>
<div style="left:386.00px;top:217.10px;width:0.80px;height:1.30px;background:#999;"></div>
<div style="left:388.80px;top:216.30px;width:1.80px;height:2.60px;background:#c85a30;opacity:0.75"></div>
<div style="left:388.60px;top:218.60px;width:2.60px;height:0.60px;background:#d06040;opacity:0.8"></div>
<p class="t" style="left:392.0px;top:217.3px;width:19.5px;font-size:3.5px;background-image:linear-gradient(90deg,#675a8e,#5a79b0,#675a8e,#675a8e);opacity:0.80">ráster solar </p>
<div style="left:386.00px;top:223.15px;width:0.80px;height:1.30px;background:#999;"></div>
<div style="left:388.80px;top:222.35px;width:1.80px;height:2.60px;background:#c85a30;opacity:0.75"></div>
<div style="left:388.60px;top:224.65px;width:2.60px;height:0.60px;background:#d06040;opacity:0.8"></div>
<p class="t" style="left:392.0px;top:223.3px;width:28.4px;font-size:3.5px;background-image:linear-gradient(90deg,#a35f31,#a38851,#a35f31,#a38851);opacity:0.80">insertar entidad v</p>
<div style="left:386.00px;top:229.20px;width:0.80px;height:1.30px;background:#999;"></div>
<div style="left:388.80px;top:228.40px;width:1.80px;height:2.60px;background:#d06040;opacity:0.75"></div>
<div style="left:388.60px;top:230.70px;width:2.60px;height:0.60px;background:#d06040;opacity:0.8"></div>
<p class="t" style="left:392.0px;top:229.4px;width:26.2px;font-size:3.5px;background-image:linear-gradient(90deg,#a35f31,#a35f31,#756795,#756795);opacity:0.80">multivariante dis</p>
<div style="left:386.00px;top:235.25px;width:0.80px;height:1.30px;background:#999;"></div>
<div style="left:388.80px;top:234.45px;width:1.80px;height:2.60px;background:#8a8a8a;opacity:0.75"></div>
<div style="left:388.60px;top:236.75px;width:2.60px;height:0.60px;background:#d06040;opacity:0.8"></div>
<p class="t" style="left:392.0px;top:235.4px;width:26.1px;font-size:3.5px;background-image:linear-gradient(90deg,#a38851,#756795,#a35f31);opacity:0.80">vista reclasifica</p>
<div style="left:451.80px;top:82.00px;width:1.60px;height:158.00px;background:#ececec;"></div>
<div style="left:451.80px;top:104.00px;width:1.60px;height:88.00px;background:#7a7a7a;"></div>
<div style="left:380.00px;top:238.50px;width:70.00px;height:1.30px;background:#e4e4e4;"></div>
<div style="left:380.50px;top:238.30px;width:58.00px;height:1.60px;background:#7e7e7e;"></div>
<div style="left:451.00px;top:238.00px;width:1.50px;height:1.50px;background:#aaa;"></div>
<div style="left:378.50px;top:240.20px;width:76.00px;height:6.00px;background:#f2f2f2;"></div>
<p class="t" style="left:382.6px;top:242.1px;width:7.0px;font-size:3.5px;background-image:linear-gradient(90deg,#a35f44,#a35f44,#a35f44);opacity:1.00">munici</p>
<div style="left:392.50px;top:240.70px;width:26.00px;height:5.00px;background:#fcfcfc;"></div>
<div style="left:392.30px;top:240.70px;width:0.60px;height:5.00px;background:#bbb;"></div>
<p class="t" style="left:394.0px;top:242.1px;width:23.6px;font-size:3.5px;background-image:linear-gradient(90deg,#5a79b0,#5a79b0,#5a79b0,#5a79b0);opacity:1.00">insertar superfi</p>
<div style="left:0.00px;top:246.50px;width:455.00px;height:9.50px;background:#0d1117;"></div>
<div style="left:3.80px;top:249.20px;width:2.00px;height:1.80px;background:#d8d8d8;"></div>
<div style="left:6.20px;top:249.20px;width:2.00px;height:1.80px;background:#d8d8d8;"></div>
<div style="left:3.80px;top:251.40px;width:2.00px;height:1.80px;background:#d8d8d8;"></div>
<div style="left:6.20px;top:251.40px;width:2.00px;height:1.80px;background:#d8d8d8;"></div>
<div style="left:16.80px;top:251.50px;width:0.90px;height:0.90px;background:#bbb;"></div>
<div style="left:24.00px;top:250.00px;width:2.50px;height:0.80px;background:#888;"></div>
<div style="left:24.00px;top:251.50px;width:2.50px;height:0.80px;background:#888;"></div>
<svg style="position:absolute;left:39px;top:248.5px" width="6" height="6"><circle cx="3" cy="3" r="2.6" fill="#e04a2a"/><path d="M3 3 L0.6 4.4 A2.6 2.6 0 0 0 4.5 5.2 Z" fill="#f2c030"/><path d="M3 3 L4.5 5.2 A2.6 2.6 0 0 0 5.6 2.6 Z" fill="#3aa050"/><circle cx="3" cy="3" r="1.1" fill="#3a7ad8" stroke="#fff" stroke-width="0.4"/></svg>
<div style="left:51.00px;top:249.20px;width:5.20px;height:4.20px;background:#f2c84a;"></div>
<div style="left:51.00px;top:251.20px;width:5.20px;height:2.20px;background:#e0a830;"></div>
<div style="left:52.00px;top:250.50px;width:3.00px;height:0.70px;background:#3a8ad8;"></div>
<div style="left:59.20px;top:246.50px;width:10.50px;height:9.50px;background:#2f3540;"></div>
<svg style="position:absolute;left:62px;top:248.3px" width="5" height="6"><path d="M2.5 0.3 C4.2 0.3 4.7 2 4.7 3 C4.7 4.6 3.7 5.6 2.5 5.6 C1.3 5.6 0.3 4.6 0.3 3 C0.3 2 0.8 0.3 2.5 0.3Z" fill="#3a8ae8"/><rect x="2" y="1.3" width="1" height="3.2" fill="#fff"/></svg>
<svg style="position:absolute;left:402px;top:248.5px" width="3" height="5"><line x1="2.5" y1="0.5" x2="0.5" y2="4.5" stroke="#ddd" stroke-width="0.8"/></svg>
<div style="left:411.50px;top:251.00px;width:1.00px;height:1.00px;background:#ccc;"></div>
<div style="left:416.50px;top:250.50px;width:2.50px;height:2.00px;background:#ccc;"></div>
<div style="left:419.50px;top:250.00px;width:1.00px;height:2.50px;background:#bbb;"></div>
<svg style="position:absolute;left:421px;top:249px" width="4" height="5"><path d="M0.5 1.5 L1.5 1.5 L3 0.5 L3 4.5 L1.5 3.5 L0.5 3.5Z" fill="#ccc"/></svg>
<p class="t" style="left:431.0px;top:248.7px;width:9.0px;font-size:3.1px;background-image:linear-gradient(90deg,#909090,#adadad,#909090);opacity:1.00">densidad</p>
<p class="t" style="left:429.5px;top:252.0px;width:13.0px;font-size:3.1px;background-image:linear-gradient(90deg,#909090,#909090);opacity:1.00">espacial c</p>
<div style="left:445.50px;top:249.00px;width:4.50px;height:3.60px;background:#e0e0e0;"></div>
<div style="left:448.00px;top:252.00px;width:2.00px;height:1.50px;background:#cfcfcf;"></div>
<div style="left:446.50px;top:250.00px;width:2.50px;height:0.60px;background:#555;"></div>
</div>
<div class="p j" style="top:392px">A través de, Herramientas⇒ caja de herramientas⇒ herramientas spatial analyst⇒</div>
<div class="p" style="top:406.6px;letter-spacing:0.11px">distancia⇒ acumulacion de distancia.</div>
<div class="ss" style="left:73px;top:424px;">
<div style="left:0.00px;top:0.00px;width:455.00px;height:15.00px;background:#efefef;"></div>
<div style="left:0.00px;top:15.00px;width:455.00px;height:21.00px;background:#f9f9f9;"></div>
<div style="left:0.00px;top:35.50px;width:455.00px;height:1.20px;background:#cbcbcb;"></div>
<div style="left:0.00px;top:36.50px;width:455.00px;height:210.00px;background:#e9e9e9;"></div>
<div style="left:3.50px;top:2.50px;width:2.50px;height:2.50px;background:#e8b830;"></div>
<p class="t" style="left:8.0px;top:3.2px;width:28.0px;font-size:3.5px;background-image:linear-gradient(90deg,#4c6baa,#758dbb);opacity:1.00">selección mapa pla</p>
<div style="left:40.00px;top:3.00px;width:1.00px;height:1.00px;background:#777;"></div>
<div style="left:0.00px;top:8.60px;width:23.00px;height:5.20px;background:#2b7bd2;"></div>
<p class="t" style="left:4.5px;top:10.8px;width:12.0px;font-size:3.1px;background-image:linear-gradient(90deg,#afbed2,#9cb0cc);opacity:1.00">zonal méto</p>
<div style="left:57.00px;top:8.00px;width:16.00px;height:7.50px;background:#f9f9f9;"></div>
<p class="t" style="left:27.0px;top:11.2px;width:8.0px;font-size:3.1px;background-image:linear-gradient(90deg,#8875a3,#5c4e86,#8375a2);opacity:0.88">datos s</p>
<p class="t" style="left:42.0px;top:11.2px;width:10.0px;font-size:3.1px;background-image:linear-gradient(90deg,#8375a2,#8875a3,#8875a3,#a6885a);opacity:0.88">editar á</p>
<p class="t" style="left:60.0px;top:11.2px;width:10.0px;font-size:3.1px;background-image:linear-gradient(90deg,#8875a3,#675a8e);opacity:0.88">editar a</p>
<p class="t" style="left:77.0px;top:11.2px;width:7.0px;font-size:3.1px;background-image:linear-gradient(90deg,#8375a2,#5c4e86,#8375a2);opacity:0.88">clasif</p>
<p class="t" style="left:90.0px;top:11.2px;width:8.0px;font-size:3.1px;background-image:linear-gradient(90deg,#a6885a,#a6885a,#8875a3,#a6885a);opacity:0.88">zonal d</p>
<p class="t" style="left:102.0px;top:11.2px;width:12.0px;font-size:3.1px;background-image:linear-gradient(90deg,#675a8e,#675a8e,#675a8e);opacity:0.88">superficie</p>
<p class="t" style="left:119.0px;top:11.2px;width:12.0px;font-size:3.1px;background-image:linear-gradient(90deg,#8875a3,#8875a3,#8375a2,#8875a3);opacity:0.88">código cla</p>
<p class="t" style="left:135.0px;top:11.2px;width:8.0px;font-size:3.1px;background-image:linear-gradient(90deg,#5c4e86,#a6885a);opacity:0.88">barrios</p>
<div style="left:145.20px;top:0.00px;width:58.00px;height:14.00px;background:#f4e9e0;"></div>
<div style="left:145.20px;top:0.00px;width:58.00px;height:1.10px;background:#f0a352;"></div>
<p class="t" style="left:164.0px;top:4.6px;width:20.0px;font-size:3.1px;background-image:linear-gradient(90deg,#956c5f,#956c5f,#aa754c);opacity:0.96">análisis campos</p>
<p class="t" style="left:149.0px;top:11.2px;width:14.0px;font-size:3.1px;background-image:linear-gradient(90deg,#8375a2,#a6885a,#5c4e86,#8375a2);opacity:0.88">sobreposici</p>
<p class="t" style="left:167.0px;top:11.2px;width:12.0px;font-size:3.1px;background-image:linear-gradient(90deg,#8875a3,#a6885a,#675a8e);opacity:0.88">municipio </p>
<p class="t" style="left:184.0px;top:11.2px;width:8.0px;font-size:3.1px;background-image:linear-gradient(90deg,#a6885a,#5c4e86,#8375a2);opacity:0.88">imágene</p>
<p class="t" style="left:208.0px;top:4.1px;width:34.0px;font-size:3.1px;background-image:linear-gradient(90deg,#758dbb,#758dbb,#8899be);opacity:0.88">población análisis entid</p>
<div style="left:416.50px;top:3.20px;width:1.00px;height:1.40px;background:#999;"></div>
<div style="left:437.30px;top:3.20px;width:2.60px;height:1.00px;background:#555;"></div>
<svg style="position:absolute;left:448.5px;top:2px" width="4" height="4"><path d="M0.5 0.5 L3.5 3.5 M3.5 0.5 L0.5 3.5" stroke="#777" stroke-width="0.6"/></svg>
<div style="left:365.00px;top:10.00px;width:1.50px;height:1.80px;background:#8a8a8a;"></div>
<p class="t" style="left:368.0px;top:10.7px;width:34.0px;font-size:3.1px;background-image:linear-gradient(90deg,#758dbb,#8899be);opacity:0.96">multivariante nombre aná</p>
<div style="left:402.00px;top:10.00px;width:3.00px;height:2.00px;background:#d07060;"></div>
<div style="left:412.00px;top:9.20px;width:1.50px;height:1.50px;background:#60b060;"></div>
<div style="left:412.00px;top:11.20px;width:1.50px;height:1.50px;background:#60a0d0;"></div>
<p class="t" style="left:416.0px;top:10.7px;width:28.0px;font-size:3.1px;background-image:linear-gradient(90deg,#8899be,#4c6baa);opacity:0.96">multivariante barrio</p>
<div style="left:451.00px;top:9.50px;width:0.80px;height:3.00px;background:#bbb;"></div>
<div style="left:455.00px;top:10.50px;width:1.00px;height:1.00px;background:#bbb;"></div>
<div style="left:77.60px;top:16.50px;width:0.70px;height:18.00px;background:#d4d4d4;"></div>
<div style="left:176.80px;top:16.50px;width:0.70px;height:18.00px;background:#d4d4d4;"></div>
<svg style="position:absolute;left:1.5px;top:16.5px" width="11" height="9"><circle cx="6.5" cy="3.5" r="2.6" fill="none" stroke="#6a6a6a" stroke-width="0.8"/><line x1="4.6" y1="5.4" x2="1" y2="8.5" stroke="#6a6a6a" stroke-width="0.9"/><circle cx="9.5" cy="2" r="0.8" fill="#888"/><circle cx="9.5" cy="6" r="0.8" fill="#888"/></svg>
<p class="t" style="left:0.5px;top:25.0px;width:10.0px;font-size:3.1px;background-image:linear-gradient(90deg,#675a8e,#8875a3);opacity:0.96">mapa hid</p>
<div style="left:13.00px;top:18.00px;width:2.20px;height:1.50px;background:#d9a24a;"></div>
<p class="t" style="left:16.5px;top:18.3px;width:17.0px;font-size:3.1px;background-image:linear-gradient(90deg,#8875a3,#8375a2);opacity:1.00">mapa vista ed</p>
<div style="left:13.00px;top:22.20px;width:2.20px;height:2.50px;background:#e5b830;"></div>
<p class="t" style="left:16.5px;top:22.9px;width:10.0px;font-size:3.1px;background-image:linear-gradient(90deg,#675a8e,#8375a2,#5c4e86);opacity:0.96">generali</p>
<div style="left:13.00px;top:27.30px;width:2.50px;height:2.00px;background:#9a9a9a;"></div>
<p class="t" style="left:16.5px;top:27.9px;width:9.0px;font-size:3.1px;background-image:linear-gradient(90deg,#8875a3,#8375a2,#675a8e);opacity:0.96">comparti</p>
<div style="left:44.50px;top:18.30px;width:6.00px;height:5.60px;background:#d95f2e;"></div>
<div style="left:46.00px;top:16.80px;width:3.00px;height:1.60px;background:#e0e8f0;border:0.5px solid #8aaad0;box-sizing:border-box"></div>
<div style="left:47.00px;top:20.00px;width:1.50px;height:1.80px;background:#f4d0b0;"></div>
<p class="t" style="left:38.5px;top:25.0px;width:19.0px;font-size:3.1px;background-image:linear-gradient(90deg,#675a8e,#5c4e86,#8875a3,#8875a3);opacity:0.96">municipio extr</p>
<p class="t" style="left:41.0px;top:28.0px;width:15.0px;font-size:3.1px;background-image:linear-gradient(90deg,#8375a2,#a6885a,#a6885a);opacity:0.96">código local</p>
<div style="left:62.50px;top:18.20px;width:6.50px;height:5.00px;background:#d6602e;"></div>
<div style="left:64.50px;top:17.00px;width:2.50px;height:1.40px;background:#a04020;"></div>
<div style="left:62.50px;top:20.00px;width:6.50px;height:0.60px;background:#f0c0a0;"></div>
<p class="t" style="left:57.0px;top:25.0px;width:17.0px;font-size:3.1px;background-image:linear-gradient(90deg,#a6885a,#5c4e86);opacity:0.96">planar espaci</p>
<p class="t" style="left:26.0px;top:33.7px;width:23.0px;font-size:3.1px;background-image:linear-gradient(90deg,#758dbb,#8899be,#758dbb,#8899be);opacity:0.88">datos código plan</p>
<div style="left:74.00px;top:33.80px;width:1.00px;height:1.00px;background:#777;"></div>
<svg style="position:absolute;left:84.5px;top:15.8px" width="9" height="9" viewBox="0 0 9 9"><rect x="1" y="0.5" width="7" height="6.5" fill="#d8ecf8" stroke="#9ab" stroke-width="0.4"/><rect x="2" y="2" width="3" height="3" fill="#f0d878"/><path d="M5 4 L7.5 6.5" stroke="#4a90d0" stroke-width="0.8"/><rect x="0.5" y="7.6" width="8" height="0.8" fill="#333"/></svg>
<p class="t" style="left:81.0px;top:25.0px;width:15.0px;font-size:3.1px;background-image:linear-gradient(90deg,#9c8251,#9c8251,#9c8251);opacity:0.96">capa zonal l</p>
<p class="t" style="left:83.0px;top:28.0px;width:12.0px;font-size:3.1px;background-image:linear-gradient(90deg,#9c8251,#a6754c);opacity:0.96">vecindad t</p>
<svg style="position:absolute;left:102.0px;top:15.8px" width="9" height="9" viewBox="0 0 9 9"><rect x="1" y="0.5" width="7" height="6.5" fill="#eaf2fa" stroke="#3a7ac8" stroke-width="0.7"/><rect x="3.5" y="2.5" width="3.5" height="3.5" fill="#f0a040"/><rect x="0.5" y="7.6" width="8" height="0.8" fill="#333"/></svg>
<p class="t" style="left:98.5px;top:25.0px;width:15.0px;font-size:3.1px;background-image:linear-gradient(90deg,#9c8251,#675a8e,#675a8e);opacity:0.96">reclasificac</p>
<p class="t" style="left:100.5px;top:28.0px;width:12.0px;font-size:3.1px;background-image:linear-gradient(90deg,#5a79b0,#755f95,#675a8e);opacity:0.96">campos ins</p>
<svg style="position:absolute;left:121.5px;top:15.8px" width="9" height="9" viewBox="0 0 9 9"><rect x="1.5" y="0.5" width="6" height="6.5" fill="#f4e6a0" stroke="#c8a040" stroke-width="0.4"/><rect x="4.5" y="1" width="1.5" height="5.5" fill="#4a80c8"/><rect x="2" y="2" width="1.5" height="2" fill="#70b050"/><rect x="0.5" y="7.6" width="8" height="0.8" fill="#333"/></svg>
<p class="t" style="left:118.0px;top:25.0px;width:15.0px;font-size:3.1px;background-image:linear-gradient(90deg,#5a79b0,#755f95);opacity:0.96">multivariant</p>
<p class="t" style="left:120.0px;top:28.0px;width:12.0px;font-size:3.1px;background-image:linear-gradient(90deg,#a6754c,#5a79b0,#675a8e,#5a79b0);opacity:0.96">extracción</p>
<svg style="position:absolute;left:140.5px;top:15.8px" width="9" height="9" viewBox="0 0 9 9"><rect x="1" y="0.5" width="7" height="6.5" fill="#e0eef8" stroke="#9ab" stroke-width="0.4"/><rect x="1.5" y="1.5" width="4" height="2.5" fill="#f0e0a0"/><rect x="0.5" y="7.6" width="8" height="0.8" fill="#333"/></svg>
<p class="t" style="left:137.0px;top:25.0px;width:15.0px;font-size:3.1px;background-image:linear-gradient(90deg,#5a79b0,#a6754c,#a6754c,#675a8e);opacity:0.96">espacial bar</p>
<p class="t" style="left:139.0px;top:28.0px;width:12.0px;font-size:3.1px;background-image:linear-gradient(90deg,#9c8251,#675a8e,#9c8251);opacity:0.96">de imágene</p>
<svg style="position:absolute;left:159.8px;top:15.8px" width="9" height="9" viewBox="0 0 9 9"><rect x="2" y="0.5" width="5" height="6" fill="#fafafa" stroke="#aaa" stroke-width="0.4"/><rect x="4.5" y="0.5" width="2.5" height="2.5" fill="#e06a30"/><rect x="2.5" y="3.5" width="2" height="2.5" fill="#4a7ad0"/><rect x="1" y="6.6" width="7" height="0.9" fill="#6a6aaa"/></svg>
<p class="t" style="left:156.3px;top:25.0px;width:15.0px;font-size:3.1px;background-image:linear-gradient(90deg,#675a8e,#5a79b0,#9c8251,#755f95);opacity:0.96">imágenes edi</p>
<p class="t" style="left:158.3px;top:28.0px;width:12.0px;font-size:3.1px;background-image:linear-gradient(90deg,#a6754c,#a6754c);opacity:0.96">datos álge</p>
<p class="t" style="left:120.0px;top:33.7px;width:16.0px;font-size:3.1px;background-image:linear-gradient(90deg,#5a79b0,#758dbb);opacity:0.88">matemática z</p>
<div style="left:179.00px;top:17.00px;width:0.70px;height:1.50px;background:#aaa;"></div>
<div style="left:179.00px;top:20.00px;width:0.70px;height:1.50px;background:#aaa;"></div>
<div style="left:179.00px;top:23.00px;width:0.70px;height:1.50px;background:#aaa;"></div>
<svg style="position:absolute;left:181.5px;top:16px" width="9" height="9" viewBox="0 0 9 9"><rect x="2" y="3" width="5" height="5" fill="#e4e4e4" stroke="#bbb" stroke-width="0.5"/><circle cx="4" cy="2.5" r="1.8" fill="none" stroke="#b8b8b8" stroke-width="0.7"/></svg>
<svg style="position:absolute;left:195.5px;top:16px" width="9" height="9" viewBox="0 0 9 9"><rect x="1.5" y="3" width="6" height="5" fill="#e8e8e8" stroke="#c4c4c4" stroke-width="0.5"/><rect x="3" y="1" width="3" height="2" fill="#d0d0d0"/></svg>
<p class="t" style="left:179.0px;top:25.0px;width:13.0px;font-size:3.1px;background-image:linear-gradient(90deg,#aaa39c,#aaa39c,#a39cb0);opacity:0.80">compartir </p>
<p class="t" style="left:193.0px;top:25.0px;width:13.0px;font-size:3.1px;background-image:linear-gradient(90deg,#aaa39c,#aaa39c,#aaa39c,#aaa39c);opacity:0.80">multivaria</p>
<p class="t" style="left:190.0px;top:33.7px;width:6.0px;font-size:3.1px;background-image:linear-gradient(90deg,#82759c,#82759c);opacity:0.96">barrio</p>
<svg style="position:absolute;left:209.5px;top:15.8px" width="9" height="9" viewBox="0 0 9 9"><path d="M1 1 L8 8 M1 8 L8 1" stroke="#333" stroke-width="0.9"/><rect x="6" y="0.5" width="2.5" height="2.5" fill="#e06030"/></svg>
<p class="t" style="left:206.0px;top:25.0px;width:15.0px;font-size:3.1px;background-image:linear-gradient(90deg,#755f95,#5a79b0,#a6754c);opacity:0.96">extracción e</p>
<p class="t" style="left:207.0px;top:28.0px;width:13.0px;font-size:3.1px;background-image:linear-gradient(90deg,#5a79b0,#5a79b0,#755f95);opacity:0.96">superficie</p>
<svg style="position:absolute;left:227.5px;top:15.8px" width="9" height="9" viewBox="0 0 9 9"><rect x="1" y="1" width="3.5" height="3.5" fill="#f08030"/><rect x="4.5" y="1" width="3.5" height="3.5" fill="#e84040"/><rect x="1" y="4.5" width="3.5" height="3.5" fill="#f0c030"/><rect x="4.5" y="4.5" width="3.5" height="3.5" fill="#40a0e0"/><rect x="5.5" y="5.5" width="2" height="2" fill="#40b050"/></svg>
<p class="t" style="left:224.0px;top:25.0px;width:15.0px;font-size:3.1px;background-image:linear-gradient(90deg,#675a8e,#9c8251);opacity:0.96">capa entidad</p>
<p class="t" style="left:225.0px;top:28.0px;width:13.0px;font-size:3.1px;background-image:linear-gradient(90deg,#5a79b0,#675a8e);opacity:0.96">clasificac</p>
<svg style="position:absolute;left:244.5px;top:15.8px" width="9" height="9" viewBox="0 0 9 9"><rect x="1" y="1" width="5" height="7" fill="#fff" stroke="#999" stroke-width="0.4"/><path d="M2 7 L7.5 1.5" stroke="#60b060" stroke-width="0.9"/><circle cx="3" cy="2.5" r="1" fill="#e08030"/></svg>
<p class="t" style="left:241.0px;top:25.0px;width:15.0px;font-size:3.1px;background-image:linear-gradient(90deg,#5a79b0,#675a8e,#5a79b0,#a6754c);opacity:0.96">capa segment</p>
<p class="t" style="left:242.0px;top:28.0px;width:13.0px;font-size:3.1px;background-image:linear-gradient(90deg,#675a8e,#9c8251,#675a8e);opacity:0.96">planar vec</p>
<svg style="position:absolute;left:261.5px;top:15.8px" width="9" height="9" viewBox="0 0 9 9"><circle cx="4.5" cy="3" r="2" fill="none" stroke="#3a8ad0" stroke-width="0.9"/><path d="M4.5 5 L4.5 8.5 M2.5 8.5 L6.5 8.5" stroke="#3a8ad0" stroke-width="0.8"/><circle cx="6.5" cy="1.5" r="1" fill="#e0a040"/></svg>
<p class="t" style="left:258.0px;top:25.0px;width:15.0px;font-size:3.1px;background-image:linear-gradient(90deg,#9c8251,#9c8251);opacity:0.96">extracción á</p>
<p class="t" style="left:259.0px;top:28.0px;width:13.0px;font-size:3.1px;background-image:linear-gradient(90deg,#5a79b0,#a6754c,#a6754c);opacity:0.96">proyecto v</p>
<svg style="position:absolute;left:276.5px;top:15.8px" width="9" height="9" viewBox="0 0 9 9"><path d="M1.5 1 L1.5 8 L8 8" fill="none" stroke="#6a6a9a" stroke-width="1.1"/><path d="M3 6.5 L3 2.5 L7.5 2.5" fill="none" stroke="#a0a0c8" stroke-width="0.9"/></svg>
<p class="t" style="left:273.0px;top:25.0px;width:15.0px;font-size:3.1px;background-image:linear-gradient(90deg,#a6754c,#5a79b0,#a6754c);opacity:0.96">extracción p</p>
<p class="t" style="left:274.0px;top:28.0px;width:13.0px;font-size:3.1px;background-image:linear-gradient(90deg,#5a79b0,#9c8251);opacity:0.96">multivaria</p>
<svg style="position:absolute;left:291.5px;top:15.8px" width="9" height="9" viewBox="0 0 9 9"><rect x="1.5" y="1" width="6" height="7" fill="#e8f4e8" stroke="#3a9a50" stroke-width="0.8"/><path d="M3 3.5 L6 3.5 M3 5.5 L6 5.5" stroke="#4a80c8" stroke-width="0.7"/></svg>
<p class="t" style="left:288.0px;top:25.0px;width:15.0px;font-size:3.1px;background-image:linear-gradient(90deg,#755f95,#5a79b0,#755f95);opacity:0.96">salida barri</p>
<p class="t" style="left:289.0px;top:28.0px;width:13.0px;font-size:3.1px;background-image:linear-gradient(90deg,#675a8e,#9c8251,#675a8e,#5a79b0);opacity:0.96">compartir </p>
<svg style="position:absolute;left:307.5px;top:15.8px" width="9" height="9" viewBox="0 0 9 9"><circle cx="4.5" cy="2.8" r="2" fill="none" stroke="#3a80d0" stroke-width="1"/><path d="M1 8.5 Q4.5 4 8 8.5" fill="none" stroke="#3a80d0" stroke-width="1"/></svg>
<p class="t" style="left:304.0px;top:25.0px;width:15.0px;font-size:3.1px;background-image:linear-gradient(90deg,#675a8e,#9c8251,#9c8251);opacity:0.96">distancia ex</p>
<p class="t" style="left:305.0px;top:28.0px;width:13.0px;font-size:3.1px;background-image:linear-gradient(90deg,#5a79b0,#5a79b0,#675a8e);opacity:0.96">solar comp</p>
<svg style="position:absolute;left:325.5px;top:15.8px" width="9" height="9" viewBox="0 0 9 9"><circle cx="4.5" cy="2.5" r="1.6" fill="#f0d890"/><path d="M4.5 4 L4.5 7 M2 5 L7 5 M4.5 7 L2.5 8.5 M4.5 7 L6.5 8.5" stroke="#e8c870" stroke-width="0.9"/></svg>
<p class="t" style="left:322.0px;top:25.0px;width:15.0px;font-size:3.1px;background-image:linear-gradient(90deg,#5a79b0,#5a79b0,#755f95);opacity:0.96">de análisis </p>
<p class="t" style="left:323.0px;top:28.0px;width:13.0px;font-size:3.1px;background-image:linear-gradient(90deg,#a6754c,#9c8251,#9c8251);opacity:0.96">compartir </p>
<p class="t" style="left:265.0px;top:33.7px;width:22.0px;font-size:3.1px;background-image:linear-gradient(90deg,#5a79b0,#758dbb,#5a79b0);opacity:0.88">densidad proyect</p>
<svg style="position:absolute;left:344.5px;top:15.8px" width="9" height="9" viewBox="0 0 9 9"><rect x="2" y="1.5" width="4" height="5" fill="#5a6a7a"/><rect x="2.5" y="2.3" width="3" height="0.8" fill="#c0c8d0"/><path d="M6 6 L7.5 7.5" stroke="#777" stroke-width="0.7"/></svg>
<svg style="position:absolute;left:359.5px;top:15.8px" width="9" height="9" viewBox="0 0 9 9"><rect x="1.5" y="2" width="5" height="5" fill="#c8d8ea" stroke="#7a9ac0" stroke-width="0.5"/><path d="M6 0.8 L7 2 L8.3 1.2" stroke="#e0c040" stroke-width="0.8" fill="none"/><rect x="3" y="5" width="4" height="3" fill="#5a8ad0"/></svg>
<p class="t" style="left:341.0px;top:25.0px;width:14.0px;font-size:3.1px;background-image:linear-gradient(90deg,#755f95,#9c8251,#755f95,#9c8251);opacity:0.96">vecindad es</p>
<p class="t" style="left:343.0px;top:28.0px;width:11.0px;font-size:3.1px;background-image:linear-gradient(90deg,#675a8e,#9c8251,#9c8251);opacity:0.96">distancia</p>
<p class="t" style="left:356.0px;top:25.0px;width:14.0px;font-size:3.1px;background-image:linear-gradient(90deg,#675a8e,#a6754c,#755f95);opacity:0.96">conversión </p>
<p class="t" style="left:358.0px;top:28.0px;width:11.0px;font-size:3.1px;background-image:linear-gradient(90deg,#9c8251,#5a79b0,#9c8251);opacity:0.96">insertar </p>
<p class="t" style="left:350.0px;top:33.1px;width:6.0px;font-size:3.1px;background-image:linear-gradient(90deg,#b06c36,#5a79b0,#b06c36,#5a79b0);opacity:0.96">de bar</p>
<div style="left:1.80px;top:37.50px;width:75.50px;height:208.50px;background:#f7f7f7;border:0.6px solid #d8d8d8;box-sizing:border-box"></div>
<div style="left:4.00px;top:40.20px;width:1.00px;height:1.50px;background:#888;"></div>
<p class="t" style="left:7.0px;top:40.5px;width:13.0px;font-size:3.5px;background-image:linear-gradient(90deg,#44445f,#5a4c75);opacity:0.96">tabla map</p>
<div style="left:69.00px;top:41.50px;width:2.00px;height:1.00px;background:#777;"></div>
<div style="left:72.50px;top:41.50px;width:2.00px;height:1.00px;background:#777;"></div>
<div style="left:75.00px;top:40.50px;width:0.80px;height:2.50px;background:#777;"></div>
<div style="left:7.00px;top:47.00px;width:70.00px;height:5.00px;background:#ffffff;"></div>
<div style="left:7.00px;top:51.60px;width:70.00px;height:0.70px;background:#9a9a9a;"></div>
<div style="left:3.50px;top:48.00px;width:2.50px;height:2.50px;background:#bbb;clip-path:polygon(0 0,100% 0,60% 60%,60% 100%,40% 100%,40% 60%)"></div>
<p class="t" style="left:9.0px;top:48.9px;width:8.0px;font-size:3.1px;background-image:linear-gradient(90deg,#5a79b0,#758dbb,#8899be);opacity:0.96">reclasi</p>
<div style="left:71.00px;top:47.70px;width:1.20px;height:2.50px;background:#555;transform:rotate(30deg)"></div>
<svg style="position:absolute;left:7px;top:54.5px" width="6" height="6" viewBox="0 0 6 6"><circle cx="1.5" cy="1.5" r="1.2" fill="#f0b020"/><rect x="3" y="2.5" width="2.5" height="0.6" fill="#e0a030"/><rect x="3" y="4" width="2.5" height="0.6" fill="#e0a030"/><rect x="1" y="5" width="2" height="0.6" fill="#3a7ad0"/></svg>
<svg style="position:absolute;left:14.5px;top:54.5px" width="6" height="6" viewBox="0 0 6 6"><path d="M1 1 L4 1 L5 2 L5 5.5 L1 5.5 Z" fill="#fafafa" stroke="#999" stroke-width="0.5"/><path d="M2 3 L4 3" stroke="#bbb" stroke-width="0.4"/></svg>
<svg style="position:absolute;left:22.5px;top:54.5px" width="6" height="6" viewBox="0 0 6 6"><rect x="1" y="1" width="4.5" height="4.5" fill="#e6eef8" stroke="#6a8ab0" stroke-width="0.5"/><path d="M2 2.5 L4.5 2.5 M2 4 L4 4" stroke="#5a7ab0" stroke-width="0.4"/></svg>
<svg style="position:absolute;left:30.5px;top:54.5px" width="5" height="6" viewBox="0 0 5 6"><path d="M4.5 0.5 L0.8 5.5" stroke="#e8b830" stroke-width="1"/></svg>
<svg style="position:absolute;left:39.5px;top:55.5px" width="3" height="4" viewBox="0 0 3 4"><rect x="0.5" y="0.5" width="1.5" height="3" fill="#5a8ad0" opacity="0.8"/></svg>
<svg style="position:absolute;left:45px;top:54.5px" width="6" height="6" viewBox="0 0 6 6"><path d="M3 0.5 L5.5 3 L3 5.5 L0.5 3 Z" fill="#f0c040" stroke="#c08020" stroke-width="0.4"/></svg>
<div style="left:6.00px;top:61.00px;width:8.00px;height:0.90px;background:#2b7bd2;"></div>
<div style="left:14.00px;top:61.30px;width:38.00px;height:0.50px;background:#c8c8c8;"></div>
<p class="t" style="left:5.0px;top:66.9px;width:22.0px;font-size:3.5px;background-image:linear-gradient(90deg,#5a4c8e,#3e3e75,#3e3e75,#3e3e75);opacity:0.96">sobreposición d</p>
<div style="left:0;top:1.3px;width:455px;height:245px;">
<p class="t" style="left:5.0px;top:66.2px;width:22.0px;font-size:3.5px;background-image:linear-gradient(90deg,#a35a3e,#5a4c8e,#5a4c8e);opacity:1.00">planar proyecto</p>
<div style="left:9.50px;top:69.50px;width:4.50px;height:1.50px;background:#7ee07e;"></div>
<p class="t" style="left:16.0px;top:69.8px;width:58.0px;font-size:3.1px;background-image:linear-gradient(90deg,#a6754c,#a6754c,#a6754c,#a6754c);opacity:0.88">imágenes salida población capa campos ex</p>
<div style="left:9.50px;top:72.60px;width:4.50px;height:3.00px;background:#7fd6f2;"></div>
<p class="t" style="left:16.0px;top:73.6px;width:27.0px;font-size:3.5px;background-image:linear-gradient(90deg,#9c8251,#755f95,#5a79b0,#5a79b0);opacity:1.00">proyecto densidad </p>
<div style="left:9.50px;top:77.36px;width:4.50px;height:3.00px;background:#7b3f72;"></div>
<p class="t" style="left:16.0px;top:78.4px;width:38.0px;font-size:3.5px;background-image:linear-gradient(90deg,#755f95,#9c8251,#a6754c,#a6754c);opacity:1.00">generalización vista geo</p>
<div style="left:9.50px;top:82.12px;width:4.50px;height:3.00px;background:#f2d65a;"></div>
<p class="t" style="left:16.0px;top:83.1px;width:58.0px;font-size:3.5px;background-image:linear-gradient(90deg,#755f95,#a6754c);opacity:1.00">geoprocesamiento imágenes población </p>
<div style="left:9.50px;top:86.88px;width:4.50px;height:3.00px;background:#3f7a48;"></div>
<p class="t" style="left:16.0px;top:87.9px;width:58.0px;font-size:3.5px;background-image:linear-gradient(90deg,#5a79b0,#675a8e,#9c8251,#755f95);opacity:1.00">distancia distancia origen superfici</p>
<div style="left:9.50px;top:91.64px;width:4.50px;height:3.00px;background:#f24fe0;"></div>
<p class="t" style="left:16.0px;top:92.6px;width:58.0px;font-size:3.5px;background-image:linear-gradient(90deg,#9c8251,#9c8251,#675a8e,#5a79b0);opacity:1.00">método tabla mapa análisis municipio</p>
<div style="left:9.50px;top:96.40px;width:4.50px;height:3.00px;background:#2d3f8c;"></div>
<p class="t" style="left:16.0px;top:97.4px;width:38.0px;font-size:3.5px;background-image:linear-gradient(90deg,#9c8251,#5a79b0,#5a79b0,#5a79b0);opacity:1.00">editar extracción matemá</p>
<div style="left:9.50px;top:101.16px;width:4.50px;height:3.00px;background:#a4a4f2;"></div>
<p class="t" style="left:16.0px;top:102.2px;width:10.0px;font-size:3.5px;background-image:linear-gradient(90deg,#5a79b0,#a6754c,#5a79b0,#a6754c);opacity:1.00">poblaci</p>
<div style="left:9.50px;top:105.92px;width:4.50px;height:3.00px;background:#f27aa4;"></div>
<p class="t" style="left:16.0px;top:106.9px;width:28.0px;font-size:3.5px;background-image:linear-gradient(90deg,#9c8251,#a6754c,#755f95,#5a79b0);opacity:1.00">clasificación enti</p>
<div style="left:9.50px;top:110.68px;width:4.50px;height:3.00px;background:#b39f6f;"></div>
<p class="t" style="left:16.0px;top:111.7px;width:37.0px;font-size:3.5px;background-image:linear-gradient(90deg,#9c8251,#755f95);opacity:1.00">salida municipio entidad</p>
<div style="left:9.50px;top:115.44px;width:4.50px;height:3.00px;background:#72d6c0;"></div>
<p class="t" style="left:16.0px;top:116.4px;width:22.0px;font-size:3.5px;background-image:linear-gradient(90deg,#a6754c,#675a8e);opacity:1.00">selección vista</p>
<div style="left:9.50px;top:120.20px;width:4.50px;height:3.00px;background:#8c6a44;"></div>
<p class="t" style="left:16.0px;top:121.2px;width:20.0px;font-size:3.5px;background-image:linear-gradient(90deg,#5a79b0,#5a79b0);opacity:1.00">mapa solar ca</p>
<div style="left:4.50px;top:127.00px;width:1.20px;height:1.20px;background:#999;"></div>
<p class="t" style="left:7.0px;top:127.0px;width:14.0px;font-size:3.1px;background-image:linear-gradient(90deg,#5a79b0,#5a79b0,#a38851);opacity:0.96">generalizac</p>
<p class="t" style="left:9.0px;top:132.3px;width:6.0px;font-size:3.1px;background-image:linear-gradient(90deg,#5a79b0,#5a79b0,#5a79b0,#5a79b0);opacity:0.96">conver</p>
<div style="left:9.50px;top:136.70px;width:4.50px;height:3.00px;background:#2d3f8c;"></div>
<p class="t" style="left:16.0px;top:137.7px;width:1.7px;font-size:3.5px;background-image:linear-gradient(90deg,#5a79b0,#5a79b0);opacity:1.00">aná</p>
<div style="left:9.50px;top:141.50px;width:4.50px;height:3.00px;background:#7ee07e;"></div>
<p class="t" style="left:16.0px;top:142.5px;width:3.9px;font-size:3.5px;background-image:linear-gradient(90deg,#675a8e,#9c8251,#5a79b0,#675a8e);opacity:1.00">supe</p>
<div style="left:9.50px;top:146.30px;width:4.50px;height:3.00px;background:#f0903a;"></div>
<p class="t" style="left:16.0px;top:147.3px;width:1.9px;font-size:3.5px;background-image:linear-gradient(90deg,#a6754c,#5a79b0,#675a8e);opacity:1.00">rec</p>
<div style="left:9.50px;top:151.10px;width:4.50px;height:3.00px;background:#6ad8f0;"></div>
<p class="t" style="left:16.0px;top:152.1px;width:3.3px;font-size:3.5px;background-image:linear-gradient(90deg,#5a79b0,#a6754c,#9c8251);opacity:1.00">com</p>
<div style="left:9.50px;top:155.90px;width:4.50px;height:3.00px;background:#f24fe0;"></div>
<p class="t" style="left:16.0px;top:156.9px;width:3.6px;font-size:3.5px;background-image:linear-gradient(90deg,#9c8251,#a6754c,#755f95,#9c8251);opacity:1.00">supe</p>
<div style="left:4.50px;top:162.60px;width:1.20px;height:1.20px;background:#999;"></div>
<p class="t" style="left:7.0px;top:162.7px;width:18.0px;font-size:3.1px;background-image:linear-gradient(90deg,#a38851,#828282,#a38851,#828282);opacity:0.96">tabla campos c</p>
<p class="t" style="left:9.0px;top:167.6px;width:6.0px;font-size:3.1px;background-image:linear-gradient(90deg,#a38851,#a38851,#a38851,#5a79b0);opacity:0.96">superf</p>
<div style="left:9.50px;top:172.30px;width:4.50px;height:3.00px;background:#c85a30;"></div>
<p class="t" style="left:16.0px;top:173.3px;width:3.0px;font-size:3.5px;background-image:linear-gradient(90deg,#675a8e,#5a79b0,#755f95);opacity:1.00">bar</p>
<div style="left:9.50px;top:176.70px;width:4.50px;height:3.00px;background:#7ee07e;"></div>
<p class="t" style="left:16.0px;top:177.7px;width:4.0px;font-size:3.5px;background-image:linear-gradient(90deg,#5a79b0,#9c8251);opacity:1.00">clas</p>
<div style="left:4.50px;top:183.80px;width:1.20px;height:1.20px;background:#999;"></div>
<p class="t" style="left:7.0px;top:183.9px;width:18.0px;font-size:3.1px;background-image:linear-gradient(90deg,#828282,#a38851);opacity:0.96">insertar imáge</p>
<p class="t" style="left:9.0px;top:188.9px;width:8.0px;font-size:3.1px;background-image:linear-gradient(90deg,#a38851,#5a79b0,#5a79b0);opacity:0.96">provinc</p>
<div style="left:9.50px;top:192.80px;width:4.50px;height:3.00px;background:#4a4ae0;"></div>
<p class="t" style="left:16.0px;top:193.8px;width:17.0px;font-size:3.5px;background-image:linear-gradient(90deg,#675a8e,#675a8e,#a6754c);opacity:1.00">distancia he</p>
<div style="left:9.50px;top:197.80px;width:4.50px;height:3.00px;background:#e07060;"></div>
<p class="t" style="left:16.0px;top:198.8px;width:19.0px;font-size:3.5px;background-image:linear-gradient(90deg,#a6754c,#9c8251);opacity:1.00">proyecto mapa</p>
<div style="left:4.50px;top:205.10px;width:1.20px;height:1.20px;background:#999;"></div>
<p class="t" style="left:7.0px;top:205.2px;width:15.0px;font-size:3.1px;background-image:linear-gradient(90deg,#a38851,#5a79b0,#a38851);opacity:0.96">mapa análisi</p>
<p class="t" style="left:9.0px;top:210.1px;width:4.0px;font-size:3.1px;background-image:linear-gradient(90deg,#5a79b0,#a38851);opacity:0.96">segm</p>
<div style="left:9.50px;top:214.10px;width:4.50px;height:3.00px;background:#7ee07e;"></div>
<p class="t" style="left:16.0px;top:215.1px;width:29.0px;font-size:3.5px;background-image:linear-gradient(90deg,#a6754c,#9c8251,#755f95);opacity:1.00">insertar provincia </p>
<div style="left:9.50px;top:218.85px;width:4.50px;height:3.00px;background:#6a5ae0;"></div>
<p class="t" style="left:16.0px;top:219.8px;width:24.0px;font-size:3.5px;background-image:linear-gradient(90deg,#675a8e,#a6754c);opacity:1.00">superficie espac</p>
<div style="left:9.50px;top:223.60px;width:4.50px;height:3.00px;background:#7fe0f0;"></div>
<p class="t" style="left:16.0px;top:224.6px;width:11.0px;font-size:3.5px;background-image:linear-gradient(90deg,#675a8e,#5a79b0);opacity:1.00">reclasif</p>
<div style="left:9.50px;top:228.35px;width:4.50px;height:3.00px;background:#d0b040;"></div>
<p class="t" style="left:16.0px;top:229.3px;width:12.0px;font-size:3.5px;background-image:linear-gradient(90deg,#755f95,#5a79b0);opacity:1.00">catálogo </p>
<div style="left:5.00px;top:235.10px;width:1.00px;height:1.20px;background:#999;"></div>
<p class="t" style="left:8.0px;top:235.2px;width:30.0px;font-size:3.5px;background-image:linear-gradient(90deg,#675a8e,#a6754c,#675a8e);opacity:1.00">distancia matemátic</p>
</div>
<div style="left:75.50px;top:166.00px;width:0.80px;height:58.00px;background:#8a8a8a;"></div>
<div style="left:5.00px;top:243.00px;width:69.00px;height:1.20px;background:#dadada;"></div>
<div style="left:7.00px;top:242.80px;width:24.00px;height:1.50px;background:#8a8a8a;"></div>
<div style="left:0;top:-1.4px;width:455px;height:256px;">
<div style="left:80.00px;top:37.20px;width:18.00px;height:4.80px;background:#d9dce0;"></div>
<div style="left:81.00px;top:38.00px;width:2.80px;height:2.80px;background:#6aaa6a;"></div>
<p class="t" style="left:85.0px;top:38.9px;width:8.0px;font-size:3.1px;background-image:linear-gradient(90deg,#8288a3,#8288a3);opacity:0.96">geoproc</p>
<div style="left:80px;top:43px;width:296px;height:92px;overflow:hidden"><svg width="296" height="92" viewBox="0 0 296 92" style="position:absolute;left:0;top:0">
<defs>
<filter id="bl" x="-30%" y="-30%" width="160%" height="160%"><feGaussianBlur stdDeviation="1.6"/></filter>
<filter id="bl1" x="-30%" y="-30%" width="160%" height="160%"><feGaussianBlur stdDeviation="0.6"/></filter>
<filter id="nz" x="0" y="0" width="100%" height="100%"><feTurbulence type="fractalNoise" baseFrequency="0.35" numOctaves="2" seed="3"/><feColorMatrix type="matrix" values="0 0 0 0 0.45  0 0 0 0 0.4  0 0 0 0 0.3  0 0 0 1.6 -0.75"/></filter>
<filter id="nz2" x="0" y="0" width="100%" height="100%"><feTurbulence type="fractalNoise" baseFrequency="0.12" numOctaves="3" seed="9"/><feColorMatrix type="matrix" values="0 0 0 0 0.55  0 0 0 0 0.62  0 0 0 0 0.42  0 0 0 1.4 -0.62"/></filter>
<filter id="tex" x="0" y="0" width="100%" height="100%"><feTurbulence type="fractalNoise" baseFrequency="0.45" numOctaves="2" seed="5" result="n"/><feColorMatrix in="n" type="matrix" values="1 0 0 0 0  1 0 0 0 0  1 0 0 0 0  0 0 0 0 1" result="g"/><feComposite in="SourceGraphic" in2="g" operator="arithmetic" k1="0" k2="1" k3="0.2" k4="-0.1"/></filter>
<filter id="disp" x="-10%" y="-10%" width="120%" height="120%"><feTurbulence type="fractalNoise" baseFrequency="0.25" numOctaves="2" seed="12" result="t"/><feDisplacementMap in="SourceGraphic" in2="t" scale="7" xChannelSelector="R" yChannelSelector="G"/></filter>
<clipPath id="topo"><rect x="0" y="0" width="78.5" height="92"/></clipPath>
<clipPath id="sat"><rect x="78.5" y="0" width="212.5" height="89.7"/></clipPath>
</defs>
<g id="mapbody">
<rect x="0" y="0" width="296" height="92" fill="#b8e0f8"/>
<rect x="290.5" y="86" width="5" height="3.7" fill="#ffffff"/><rect x="291" y="88.5" width="1" height="1" fill="#555"/><rect x="293.5" y="88.5" width="1" height="1" fill="#555"/>
<g clip-path="url(#topo)" filter="url(#tex)">
<rect x="0" y="0" width="78.5" height="92" fill="#c3d7a3"/>
<g filter="url(#disp)"><ellipse cx="17.8" cy="88.5" rx="1.4" ry="2.8" fill="#e8f0d0" opacity="0.14"/><ellipse cx="78.4" cy="19.3" rx="3.2" ry="2.1" fill="#4a5a2a" opacity="0.19"/><ellipse cx="15.1" cy="76.4" rx="1.3" ry="1.6" fill="#e8f0d0" opacity="0.15"/><ellipse cx="32.0" cy="83.0" rx="2.3" ry="1.3" fill="#e8f0d0" opacity="0.28"/><ellipse cx="5.0" cy="57.1" rx="2.3" ry="2.7" fill="#e8f0d0" opacity="0.22"/><ellipse cx="39.1" cy="59.8" rx="4.2" ry="2.5" fill="#e8f0d0" opacity="0.11"/><ellipse cx="74.3" cy="45.0" rx="1.7" ry="3.4" fill="#4a5a2a" opacity="0.23"/><ellipse cx="69.2" cy="26.3" rx="2.2" ry="3.2" fill="#e8f0d0" opacity="0.24"/><ellipse cx="7.7" cy="63.5" rx="3.5" ry="3.4" fill="#4a5a2a" opacity="0.19"/><ellipse cx="15.5" cy="13.8" rx="2.9" ry="2.3" fill="#e8f0d0" opacity="0.26"/><ellipse cx="39.8" cy="64.5" rx="1.8" ry="1.6" fill="#e8f0d0" opacity="0.16"/><ellipse cx="20.9" cy="39.0" rx="2.3" ry="3.1" fill="#4a5a2a" opacity="0.13"/><ellipse cx="31.1" cy="15.3" rx="3.3" ry="3.4" fill="#e8f0d0" opacity="0.24"/><ellipse cx="23.6" cy="1.2" rx="3.7" ry="1.9" fill="#e8f0d0" opacity="0.18"/><ellipse cx="18.2" cy="37.7" rx="2.6" ry="2.0" fill="#4a5a2a" opacity="0.15"/><ellipse cx="7.5" cy="7.8" rx="1.4" ry="2.3" fill="#e8f0d0" opacity="0.25"/><ellipse cx="39.6" cy="65.2" rx="4.4" ry="1.2" fill="#e8f0d0" opacity="0.13"/><ellipse cx="30.3" cy="52.8" rx="3.6" ry="1.9" fill="#4a5a2a" opacity="0.10"/><ellipse cx="65.6" cy="19.3" rx="4.1" ry="1.1" fill="#4a5a2a" opacity="0.24"/><ellipse cx="77.8" cy="53.4" rx="1.6" ry="3.4" fill="#4a5a2a" opacity="0.12"/><ellipse cx="47.5" cy="45.7" rx="2.7" ry="1.4" fill="#e8f0d0" opacity="0.20"/><ellipse cx="35.5" cy="11.6" rx="2.5" ry="2.8" fill="#4a5a2a" opacity="0.18"/><ellipse cx="30.9" cy="33.2" rx="1.8" ry="1.5" fill="#4a5a2a" opacity="0.12"/><ellipse cx="56.9" cy="65.2" rx="3.1" ry="1.1" fill="#e8f0d0" opacity="0.18"/><ellipse cx="7.3" cy="89.0" rx="3.6" ry="2.3" fill="#4a5a2a" opacity="0.14"/><ellipse cx="18.0" cy="48.4" rx="3.6" ry="2.6" fill="#e8f0d0" opacity="0.21"/><ellipse cx="71.3" cy="68.4" rx="4.2" ry="3.5" fill="#e8f0d0" opacity="0.15"/><ellipse cx="43.0" cy="89.9" rx="2.3" ry="3.4" fill="#4a5a2a" opacity="0.19"/><ellipse cx="49.1" cy="88.0" rx="3.7" ry="1.7" fill="#4a5a2a" opacity="0.14"/><ellipse cx="29.0" cy="88.2" rx="4.0" ry="1.8" fill="#e8f0d0" opacity="0.21"/><ellipse cx="66.1" cy="63.0" rx="4.3" ry="2.8" fill="#4a5a2a" opacity="0.21"/><ellipse cx="28.4" cy="39.3" rx="2.7" ry="2.3" fill="#4a5a2a" opacity="0.15"/><ellipse cx="5.4" cy="67.4" rx="1.9" ry="2.0" fill="#e8f0d0" opacity="0.25"/><ellipse cx="21.5" cy="26.8" rx="3.8" ry="2.3" fill="#e8f0d0" opacity="0.26"/><ellipse cx="32.3" cy="33.2" rx="4.4" ry="3.0" fill="#4a5a2a" opacity="0.14"/><ellipse cx="63.8" cy="54.9" rx="3.9" ry="1.9" fill="#4a5a2a" opacity="0.24"/><ellipse cx="30.5" cy="60.2" rx="3.7" ry="3.5" fill="#4a5a2a" opacity="0.24"/><ellipse cx="10.7" cy="56.1" rx="3.4" ry="1.2" fill="#4a5a2a" opacity="0.26"/><ellipse cx="71.1" cy="85.1" rx="1.3" ry="2.5" fill="#4a5a2a" opacity="0.22"/><ellipse cx="25.1" cy="3.6" rx="4.2" ry="3.1" fill="#4a5a2a" opacity="0.17"/><ellipse cx="65.0" cy="75.0" rx="3.5" ry="2.5" fill="#e8f0d0" opacity="0.15"/><ellipse cx="28.1" cy="30.1" rx="2.8" ry="1.3" fill="#4a5a2a" opacity="0.16"/><ellipse cx="12.5" cy="23.5" rx="2.4" ry="2.1" fill="#4a5a2a" opacity="0.12"/><ellipse cx="17.5" cy="27.0" rx="1.6" ry="2.9" fill="#e8f0d0" opacity="0.11"/><ellipse cx="43.6" cy="67.7" rx="3.9" ry="2.4" fill="#e8f0d0" opacity="0.26"/><ellipse cx="57.8" cy="44.1" rx="3.0" ry="3.3" fill="#4a5a2a" opacity="0.27"/><ellipse cx="10.4" cy="30.1" rx="2.4" ry="1.4" fill="#4a5a2a" opacity="0.11"/><ellipse cx="69.7" cy="53.9" rx="3.1" ry="2.0" fill="#4a5a2a" opacity="0.20"/><ellipse cx="70.4" cy="84.9" rx="3.4" ry="3.5" fill="#4a5a2a" opacity="0.17"/><ellipse cx="66.3" cy="48.6" rx="2.1" ry="2.7" fill="#4a5a2a" opacity="0.12"/><ellipse cx="65.8" cy="46.0" rx="4.4" ry="2.3" fill="#4a5a2a" opacity="0.15"/><ellipse cx="17.1" cy="48.4" rx="3.7" ry="3.1" fill="#4a5a2a" opacity="0.12"/><ellipse cx="30.9" cy="3.2" rx="2.3" ry="3.4" fill="#e8f0d0" opacity="0.23"/><ellipse cx="48.8" cy="13.2" rx="3.4" ry="1.2" fill="#e8f0d0" opacity="0.20"/><ellipse cx="10.0" cy="88.7" rx="2.5" ry="2.6" fill="#4a5a2a" opacity="0.12"/><ellipse cx="78.4" cy="3.6" rx="3.1" ry="2.6" fill="#4a5a2a" opacity="0.16"/><ellipse cx="74.3" cy="59.8" rx="2.7" ry="1.4" fill="#e8f0d0" opacity="0.17"/><ellipse cx="27.2" cy="34.2" rx="3.8" ry="1.9" fill="#4a5a2a" opacity="0.11"/><ellipse cx="11.0" cy="65.3" rx="4.1" ry="1.8" fill="#e8f0d0" opacity="0.14"/><ellipse cx="28.3" cy="33.7" rx="3.0" ry="1.8" fill="#4a5a2a" opacity="0.24"/><ellipse cx="61.5" cy="68.2" rx="3.0" ry="1.7" fill="#4a5a2a" opacity="0.15"/><ellipse cx="67.5" cy="41.1" rx="3.2" ry="2.2" fill="#4a5a2a" opacity="0.16"/><ellipse cx="45.4" cy="67.8" rx="2.3" ry="2.5" fill="#4a5a2a" opacity="0.18"/><ellipse cx="30.1" cy="50.3" rx="3.5" ry="1.4" fill="#e8f0d0" opacity="0.25"/><ellipse cx="6.9" cy="73.0" rx="3.7" ry="1.5" fill="#4a5a2a" opacity="0.15"/><ellipse cx="69.2" cy="18.2" rx="1.4" ry="1.1" fill="#4a5a2a" opacity="0.14"/><ellipse cx="24.7" cy="89.9" rx="3.6" ry="2.8" fill="#4a5a2a" opacity="0.22"/><ellipse cx="0.9" cy="74.8" rx="2.2" ry="3.1" fill="#e8f0d0" opacity="0.26"/><ellipse cx="0.0" cy="90.2" rx="1.3" ry="2.3" fill="#4a5a2a" opacity="0.28"/><ellipse cx="56.3" cy="90.3" rx="4.2" ry="2.1" fill="#e8f0d0" opacity="0.13"/><ellipse cx="55.7" cy="87.5" rx="3.3" ry="1.9" fill="#4a5a2a" opacity="0.22"/><ellipse cx="19.9" cy="63.8" rx="1.7" ry="1.1" fill="#e8f0d0" opacity="0.19"/><ellipse cx="54.6" cy="20.8" rx="2.4" ry="2.7" fill="#e8f0d0" opacity="0.19"/><ellipse cx="47.3" cy="37.4" rx="1.7" ry="2.7" fill="#4a5a2a" opacity="0.13"/><ellipse cx="63.4" cy="60.3" rx="4.0" ry="3.0" fill="#4a5a2a" opacity="0.23"/><ellipse cx="24.7" cy="60.1" rx="1.3" ry="1.9" fill="#4a5a2a" opacity="0.26"/><ellipse cx="53.7" cy="83.6" rx="4.0" ry="3.4" fill="#4a5a2a" opacity="0.21"/><ellipse cx="36.8" cy="20.4" rx="3.8" ry="2.5" fill="#e8f0d0" opacity="0.14"/><ellipse cx="17.3" cy="66.5" rx="3.1" ry="1.5" fill="#4a5a2a" opacity="0.20"/><ellipse cx="20.9" cy="40.9" rx="4.5" ry="1.4" fill="#e8f0d0" opacity="0.21"/><ellipse cx="65.9" cy="84.8" rx="2.4" ry="2.9" fill="#e8f0d0" opacity="0.17"/><ellipse cx="67.3" cy="61.2" rx="2.6" ry="2.5" fill="#4a5a2a" opacity="0.20"/><ellipse cx="69.4" cy="89.8" rx="1.7" ry="2.9" fill="#4a5a2a" opacity="0.21"/><ellipse cx="39.3" cy="34.3" rx="2.7" ry="2.5" fill="#4a5a2a" opacity="0.12"/><ellipse cx="78.4" cy="25.4" rx="2.9" ry="1.5" fill="#4a5a2a" opacity="0.11"/><ellipse cx="26.3" cy="35.4" rx="2.1" ry="2.2" fill="#e8f0d0" opacity="0.19"/><ellipse cx="62.5" cy="57.8" rx="4.4" ry="3.4" fill="#4a5a2a" opacity="0.18"/><ellipse cx="59.9" cy="80.9" rx="2.9" ry="2.7" fill="#4a5a2a" opacity="0.19"/><ellipse cx="39.9" cy="36.9" rx="2.6" ry="2.2" fill="#4a5a2a" opacity="0.13"/><ellipse cx="9.2" cy="85.0" rx="2.8" ry="2.7" fill="#4a5a2a" opacity="0.23"/><ellipse cx="44.5" cy="87.6" rx="3.2" ry="2.1" fill="#e8f0d0" opacity="0.13"/><ellipse cx="62.2" cy="82.5" rx="2.2" ry="2.3" fill="#4a5a2a" opacity="0.21"/><ellipse cx="21.6" cy="83.8" rx="2.9" ry="2.8" fill="#4a5a2a" opacity="0.18"/><ellipse cx="55.0" cy="17.5" rx="2.9" ry="2.6" fill="#4a5a2a" opacity="0.15"/><ellipse cx="14.2" cy="9.3" rx="1.4" ry="1.5" fill="#4a5a2a" opacity="0.20"/><ellipse cx="55.4" cy="40.3" rx="3.7" ry="1.1" fill="#e8f0d0" opacity="0.12"/><ellipse cx="40.5" cy="52.7" rx="3.0" ry="2.1" fill="#e8f0d0" opacity="0.16"/><ellipse cx="8.3" cy="17.8" rx="2.7" ry="2.4" fill="#e8f0d0" opacity="0.25"/><ellipse cx="2.2" cy="11.6" rx="2.6" ry="1.8" fill="#4a5a2a" opacity="0.22"/><ellipse cx="46.7" cy="72.2" rx="2.6" ry="2.7" fill="#e8f0d0" opacity="0.12"/><ellipse cx="5.8" cy="16.7" rx="2.6" ry="1.7" fill="#4a5a2a" opacity="0.22"/><ellipse cx="72.2" cy="13.8" rx="4.4" ry="1.0" fill="#4a5a2a" opacity="0.28"/><ellipse cx="28.7" cy="73.5" rx="2.8" ry="2.4" fill="#4a5a2a" opacity="0.27"/><ellipse cx="23.6" cy="20.2" rx="4.2" ry="2.5" fill="#4a5a2a" opacity="0.14"/><ellipse cx="66.7" cy="14.7" rx="1.5" ry="1.7" fill="#4a5a2a" opacity="0.17"/><ellipse cx="34.6" cy="26.6" rx="1.3" ry="2.1" fill="#4a5a2a" opacity="0.16"/><ellipse cx="57.4" cy="28.5" rx="4.4" ry="3.3" fill="#4a5a2a" opacity="0.12"/><ellipse cx="43.9" cy="57.1" rx="3.3" ry="2.1" fill="#4a5a2a" opacity="0.28"/><ellipse cx="55.1" cy="3.8" rx="3.2" ry="2.6" fill="#4a5a2a" opacity="0.27"/><ellipse cx="4.1" cy="1.6" rx="3.5" ry="1.3" fill="#e8f0d0" opacity="0.25"/><line x1="74.6" y1="85.3" x2="78.7" y2="87.3" stroke="#7a9058" stroke-width="1.1" opacity="0.40"/><line x1="24.0" y1="54.5" x2="29.0" y2="63.3" stroke="#7a9058" stroke-width="0.9" opacity="0.31"/><line x1="56.4" y1="89.5" x2="65.8" y2="99.2" stroke="#7a9058" stroke-width="0.6" opacity="0.26"/><line x1="2.1" y1="41.8" x2="8.8" y2="44.6" stroke="#7a9058" stroke-width="1.0" opacity="0.34"/><line x1="18.4" y1="2.1" x2="23.8" y2="7.0" stroke="#7a9058" stroke-width="1.1" opacity="0.48"/><line x1="14.2" y1="80.4" x2="19.4" y2="69.7" stroke="#7a9058" stroke-width="1.2" opacity="0.41"/><line x1="27.6" y1="88.3" x2="39.4" y2="95.1" stroke="#7a9058" stroke-width="1.0" opacity="0.39"/><line x1="41.4" y1="44.1" x2="53.3" y2="49.9" stroke="#7a9058" stroke-width="1.3" opacity="0.29"/><line x1="70.2" y1="41.5" x2="75.8" y2="33.6" stroke="#7a9058" stroke-width="0.8" opacity="0.33"/><line x1="25.3" y1="63.0" x2="30.2" y2="60.0" stroke="#7a9058" stroke-width="0.8" opacity="0.45"/><line x1="74.7" y1="63.6" x2="82.1" y2="68.8" stroke="#7a9058" stroke-width="0.8" opacity="0.36"/><line x1="16.2" y1="46.1" x2="21.9" y2="58.1" stroke="#7a9058" stroke-width="1.2" opacity="0.43"/><line x1="70.8" y1="17.2" x2="80.2" y2="23.8" stroke="#7a9058" stroke-width="0.8" opacity="0.26"/><line x1="68.3" y1="9.6" x2="76.3" y2="5.0" stroke="#7a9058" stroke-width="1.3" opacity="0.24"/><line x1="33.0" y1="64.5" x2="35.2" y2="68.3" stroke="#7a9058" stroke-width="0.7" opacity="0.38"/><line x1="74.5" y1="2.3" x2="80.8" y2="11.6" stroke="#7a9058" stroke-width="0.7" opacity="0.42"/><line x1="14.3" y1="62.2" x2="21.8" y2="64.6" stroke="#7a9058" stroke-width="0.6" opacity="0.23"/><line x1="26.8" y1="55.4" x2="34.0" y2="64.3" stroke="#7a9058" stroke-width="1.0" opacity="0.19"/><line x1="59.7" y1="66.6" x2="65.9" y2="55.1" stroke="#7a9058" stroke-width="1.0" opacity="0.39"/><line x1="17.6" y1="59.5" x2="22.6" y2="64.6" stroke="#7a9058" stroke-width="0.7" opacity="0.44"/><line x1="45.6" y1="35.4" x2="54.3" y2="38.4" stroke="#7a9058" stroke-width="1.1" opacity="0.26"/><line x1="32.7" y1="1.6" x2="36.7" y2="10.4" stroke="#7a9058" stroke-width="0.7" opacity="0.19"/><line x1="7.5" y1="57.2" x2="11.3" y2="48.9" stroke="#7a9058" stroke-width="0.8" opacity="0.48"/><line x1="34.7" y1="22.6" x2="43.5" y2="27.1" stroke="#7a9058" stroke-width="0.8" opacity="0.39"/><line x1="33.0" y1="47.4" x2="35.7" y2="50.4" stroke="#7a9058" stroke-width="1.2" opacity="0.21"/><line x1="18.8" y1="9.0" x2="21.9" y2="13.9" stroke="#7a9058" stroke-width="1.0" opacity="0.34"/><line x1="24.2" y1="57.8" x2="26.6" y2="52.1" stroke="#7a9058" stroke-width="0.9" opacity="0.40"/><line x1="39.9" y1="52.3" x2="43.3" y2="55.3" stroke="#7a9058" stroke-width="0.7" opacity="0.23"/><line x1="62.6" y1="33.0" x2="68.7" y2="26.1" stroke="#7a9058" stroke-width="1.4" opacity="0.27"/><line x1="29.0" y1="1.7" x2="35.6" y2="10.4" stroke="#7a9058" stroke-width="1.1" opacity="0.43"/><line x1="1.2" y1="40.6" x2="5.5" y2="47.5" stroke="#7a9058" stroke-width="0.7" opacity="0.36"/><line x1="22.2" y1="33.6" x2="33.8" y2="40.2" stroke="#7a9058" stroke-width="1.1" opacity="0.24"/><line x1="30.6" y1="41.7" x2="35.9" y2="51.9" stroke="#7a9058" stroke-width="0.7" opacity="0.22"/><line x1="66.3" y1="57.7" x2="71.5" y2="70.2" stroke="#7a9058" stroke-width="1.2" opacity="0.38"/><line x1="56.4" y1="44.8" x2="63.2" y2="48.3" stroke="#7a9058" stroke-width="1.0" opacity="0.26"/><line x1="37.2" y1="85.9" x2="43.2" y2="75.5" stroke="#7a9058" stroke-width="0.8" opacity="0.27"/><line x1="38.1" y1="23.3" x2="45.8" y2="26.4" stroke="#7a9058" stroke-width="1.3" opacity="0.36"/><line x1="7.5" y1="32.0" x2="17.0" y2="42.3" stroke="#7a9058" stroke-width="0.7" opacity="0.20"/><line x1="69.8" y1="89.0" x2="76.1" y2="97.4" stroke="#7a9058" stroke-width="1.1" opacity="0.25"/><line x1="53.1" y1="39.5" x2="60.1" y2="45.5" stroke="#7a9058" stroke-width="1.2" opacity="0.46"/><line x1="7.5" y1="46.5" x2="17.8" y2="50.8" stroke="#7a9058" stroke-width="1.2" opacity="0.32"/><line x1="31.5" y1="89.6" x2="37.2" y2="99.9" stroke="#7a9058" stroke-width="0.6" opacity="0.31"/><line x1="46.4" y1="79.4" x2="50.6" y2="83.4" stroke="#7a9058" stroke-width="1.2" opacity="0.30"/><line x1="73.1" y1="63.5" x2="80.3" y2="58.6" stroke="#7a9058" stroke-width="1.1" opacity="0.40"/><line x1="59.4" y1="76.7" x2="63.6" y2="81.3" stroke="#7a9058" stroke-width="1.4" opacity="0.38"/><line x1="49.5" y1="1.0" x2="53.5" y2="-6.6" stroke="#7a9058" stroke-width="1.3" opacity="0.38"/><line x1="1.3" y1="84.9" x2="11.8" y2="89.1" stroke="#7a9058" stroke-width="0.7" opacity="0.45"/><line x1="63.6" y1="69.0" x2="67.7" y2="64.6" stroke="#7a9058" stroke-width="1.2" opacity="0.24"/><line x1="10.8" y1="55.1" x2="17.2" y2="60.4" stroke="#7a9058" stroke-width="0.8" opacity="0.32"/><line x1="75.4" y1="6.6" x2="79.0" y2="8.3" stroke="#7a9058" stroke-width="1.2" opacity="0.38"/><line x1="37.8" y1="60.7" x2="43.2" y2="65.7" stroke="#7a9058" stroke-width="0.7" opacity="0.19"/><line x1="58.8" y1="15.6" x2="67.9" y2="8.5" stroke="#7a9058" stroke-width="1.2" opacity="0.38"/><line x1="67.4" y1="12.1" x2="71.4" y2="16.1" stroke="#7a9058" stroke-width="0.6" opacity="0.27"/><line x1="43.5" y1="87.0" x2="48.5" y2="92.8" stroke="#7a9058" stroke-width="1.3" opacity="0.31"/><line x1="24.1" y1="58.4" x2="32.3" y2="61.7" stroke="#7a9058" stroke-width="1.3" opacity="0.20"/><line x1="23.7" y1="58.2" x2="31.7" y2="67.1" stroke="#7a9058" stroke-width="0.7" opacity="0.43"/><line x1="49.4" y1="35.2" x2="54.3" y2="27.3" stroke="#7a9058" stroke-width="0.8" opacity="0.37"/><line x1="18.2" y1="41.2" x2="24.1" y2="43.3" stroke="#7a9058" stroke-width="1.3" opacity="0.21"/><line x1="29.6" y1="32.8" x2="34.6" y2="37.9" stroke="#7a9058" stroke-width="1.0" opacity="0.23"/><line x1="22.8" y1="80.5" x2="33.5" y2="88.2" stroke="#7a9058" stroke-width="0.9" opacity="0.46"/><line x1="7.8" y1="21.4" x2="11.6" y2="25.9" stroke="#7a9058" stroke-width="1.2" opacity="0.29"/><line x1="18.2" y1="72.8" x2="27.4" y2="77.3" stroke="#7a9058" stroke-width="1.3" opacity="0.28"/><line x1="72.2" y1="45.2" x2="78.4" y2="36.3" stroke="#7a9058" stroke-width="1.3" opacity="0.41"/><line x1="73.0" y1="67.8" x2="84.0" y2="76.1" stroke="#7a9058" stroke-width="0.9" opacity="0.38"/><line x1="30.8" y1="15.7" x2="40.6" y2="25.2" stroke="#7a9058" stroke-width="0.7" opacity="0.45"/><line x1="74.9" y1="11.4" x2="77.7" y2="14.7" stroke="#7a9058" stroke-width="1.3" opacity="0.46"/><line x1="59.4" y1="39.3" x2="67.9" y2="43.4" stroke="#7a9058" stroke-width="0.8" opacity="0.30"/><line x1="49.7" y1="13.6" x2="56.4" y2="10.9" stroke="#7a9058" stroke-width="0.8" opacity="0.22"/><line x1="19.6" y1="37.8" x2="23.2" y2="43.2" stroke="#7a9058" stroke-width="1.1" opacity="0.25"/><line x1="26.2" y1="33.6" x2="31.8" y2="43.8" stroke="#7a9058" stroke-width="0.9" opacity="0.44"/><line x1="60.7" y1="12.0" x2="68.3" y2="6.7" stroke="#7a9058" stroke-width="1.1" opacity="0.41"/><line x1="30.8" y1="89.8" x2="37.1" y2="94.5" stroke="#7a9058" stroke-width="1.3" opacity="0.28"/><line x1="46.6" y1="52.9" x2="50.1" y2="44.2" stroke="#7a9058" stroke-width="1.0" opacity="0.43"/><line x1="32.1" y1="47.2" x2="36.4" y2="48.6" stroke="#7a9058" stroke-width="1.3" opacity="0.22"/><line x1="53.0" y1="82.4" x2="57.2" y2="84.6" stroke="#7a9058" stroke-width="0.7" opacity="0.18"/><line x1="27.4" y1="15.6" x2="29.7" y2="20.5" stroke="#7a9058" stroke-width="1.1" opacity="0.47"/><line x1="3.9" y1="80.9" x2="8.8" y2="85.0" stroke="#7a9058" stroke-width="1.0" opacity="0.22"/><line x1="4.7" y1="18.0" x2="14.2" y2="8.8" stroke="#7a9058" stroke-width="1.3" opacity="0.38"/><line x1="10.9" y1="44.3" x2="13.3" y2="49.0" stroke="#7a9058" stroke-width="0.6" opacity="0.24"/><line x1="16.8" y1="34.1" x2="21.3" y2="24.9" stroke="#7a9058" stroke-width="1.0" opacity="0.40"/><line x1="71.5" y1="14.7" x2="74.8" y2="10.8" stroke="#7a9058" stroke-width="0.9" opacity="0.24"/><line x1="23.2" y1="38.8" x2="30.5" y2="42.6" stroke="#7a9058" stroke-width="1.0" opacity="0.42"/><line x1="36.9" y1="25.6" x2="47.1" y2="20.0" stroke="#7a9058" stroke-width="1.2" opacity="0.39"/><line x1="51.3" y1="2.8" x2="56.3" y2="10.9" stroke="#7a9058" stroke-width="1.1" opacity="0.35"/><line x1="48.8" y1="66.8" x2="53.2" y2="76.9" stroke="#7a9058" stroke-width="1.3" opacity="0.41"/><line x1="65.2" y1="53.8" x2="67.1" y2="57.7" stroke="#7a9058" stroke-width="1.0" opacity="0.37"/><line x1="14.5" y1="86.0" x2="24.9" y2="77.0" stroke="#7a9058" stroke-width="0.8" opacity="0.27"/><line x1="64.3" y1="63.1" x2="68.9" y2="58.2" stroke="#7a9058" stroke-width="0.9" opacity="0.30"/><line x1="56.2" y1="41.0" x2="65.1" y2="46.7" stroke="#7a9058" stroke-width="1.3" opacity="0.26"/><line x1="16.7" y1="30.0" x2="23.7" y2="36.2" stroke="#7a9058" stroke-width="0.8" opacity="0.46"/><line x1="60.2" y1="62.4" x2="68.6" y2="70.8" stroke="#7a9058" stroke-width="1.0" opacity="0.28"/><line x1="19.9" y1="17.2" x2="26.1" y2="23.3" stroke="#7a9058" stroke-width="0.8" opacity="0.35"/><line x1="13.3" y1="54.5" x2="23.4" y2="62.0" stroke="#7a9058" stroke-width="1.3" opacity="0.38"/><line x1="53.2" y1="27.7" x2="58.3" y2="24.4" stroke="#7a9058" stroke-width="1.3" opacity="0.18"/><line x1="15.4" y1="28.2" x2="21.6" y2="31.9" stroke="#7a9058" stroke-width="1.0" opacity="0.28"/><line x1="32.7" y1="75.0" x2="34.7" y2="78.7" stroke="#7a9058" stroke-width="1.1" opacity="0.23"/><line x1="29.3" y1="5.8" x2="35.6" y2="-1.8" stroke="#7a9058" stroke-width="1.2" opacity="0.33"/><line x1="71.4" y1="13.6" x2="74.4" y2="7.3" stroke="#7a9058" stroke-width="1.2" opacity="0.24"/><line x1="68.2" y1="53.2" x2="74.3" y2="62.4" stroke="#7a9058" stroke-width="0.6" opacity="0.24"/><line x1="51.9" y1="12.5" x2="59.0" y2="19.8" stroke="#7a9058" stroke-width="0.9" opacity="0.47"/><line x1="37.0" y1="34.2" x2="41.7" y2="38.3" stroke="#7a9058" stroke-width="0.7" opacity="0.43"/><line x1="73.8" y1="60.7" x2="77.3" y2="57.9" stroke="#7a9058" stroke-width="0.7" opacity="0.33"/><line x1="39.8" y1="46.8" x2="49.8" y2="53.1" stroke="#7a9058" stroke-width="0.8" opacity="0.40"/><line x1="1.9" y1="43.1" x2="5.2" y2="47.2" stroke="#7a9058" stroke-width="1.1" opacity="0.34"/><line x1="50.4" y1="84.8" x2="52.6" y2="89.4" stroke="#7a9058" stroke-width="0.9" opacity="0.38"/><line x1="10.9" y1="27.9" x2="20.9" y2="31.6" stroke="#7a9058" stroke-width="0.9" opacity="0.29"/><line x1="72.0" y1="54.5" x2="76.1" y2="51.6" stroke="#7a9058" stroke-width="1.1" opacity="0.46"/><line x1="62.8" y1="80.6" x2="71.4" y2="77.7" stroke="#7a9058" stroke-width="1.3" opacity="0.28"/><line x1="0.6" y1="60.5" x2="7.3" y2="48.2" stroke="#7a9058" stroke-width="1.0" opacity="0.20"/><line x1="47.6" y1="39.2" x2="54.9" y2="35.7" stroke="#7a9058" stroke-width="1.1" opacity="0.19"/><line x1="75.4" y1="74.4" x2="85.3" y2="78.5" stroke="#7a9058" stroke-width="0.8" opacity="0.19"/><line x1="61.5" y1="80.5" x2="68.9" y2="77.4" stroke="#7a9058" stroke-width="0.7" opacity="0.36"/><line x1="18.2" y1="17.1" x2="21.2" y2="19.9" stroke="#7a9058" stroke-width="1.1" opacity="0.26"/><line x1="4.1" y1="46.6" x2="12.7" y2="50.0" stroke="#7a9058" stroke-width="0.9" opacity="0.22"/><line x1="35.9" y1="33.6" x2="46.1" y2="42.8" stroke="#7a9058" stroke-width="0.9" opacity="0.31"/><line x1="74.2" y1="71.9" x2="82.4" y2="78.4" stroke="#7a9058" stroke-width="0.9" opacity="0.22"/><line x1="1.8" y1="63.5" x2="12.4" y2="72.2" stroke="#7a9058" stroke-width="1.0" opacity="0.26"/><line x1="36.2" y1="38.1" x2="42.0" y2="41.4" stroke="#7a9058" stroke-width="1.3" opacity="0.47"/><line x1="48.5" y1="2.5" x2="51.2" y2="-4.0" stroke="#7a9058" stroke-width="1.1" opacity="0.34"/><line x1="53.5" y1="22.2" x2="63.6" y2="27.0" stroke="#7a9058" stroke-width="1.1" opacity="0.32"/><line x1="43.4" y1="48.1" x2="48.2" y2="41.0" stroke="#7a9058" stroke-width="1.0" opacity="0.31"/><line x1="70.0" y1="67.2" x2="79.7" y2="63.1" stroke="#7a9058" stroke-width="1.1" opacity="0.36"/><line x1="35.5" y1="86.7" x2="46.4" y2="94.9" stroke="#7a9058" stroke-width="1.2" opacity="0.41"/><line x1="28.3" y1="71.8" x2="34.5" y2="76.1" stroke="#7a9058" stroke-width="0.9" opacity="0.37"/><line x1="38.9" y1="88.9" x2="50.1" y2="93.4" stroke="#7a9058" stroke-width="0.9" opacity="0.35"/><line x1="50.5" y1="70.5" x2="61.2" y2="77.8" stroke="#7a9058" stroke-width="0.6" opacity="0.30"/><line x1="35.5" y1="10.3" x2="46.1" y2="18.5" stroke="#7a9058" stroke-width="0.7" opacity="0.40"/><line x1="65.0" y1="29.3" x2="68.2" y2="32.9" stroke="#7a9058" stroke-width="1.0" opacity="0.46"/><line x1="7.4" y1="1.7" x2="11.0" y2="3.9" stroke="#7a9058" stroke-width="0.9" opacity="0.20"/><line x1="37.3" y1="80.8" x2="46.1" y2="70.3" stroke="#7a9058" stroke-width="0.8" opacity="0.35"/></g>
<g filter="url(#bl)" opacity="0.7">
<ellipse cx="18" cy="75" rx="16" ry="10" fill="#b2c18c"/>
<ellipse cx="42" cy="62" rx="10" ry="7" fill="#bac993"/>
<ellipse cx="55" cy="8" rx="12" ry="6" fill="#bccb95"/>
</g>
<polygon points="69,35.5 78.5,35.5 78.5,92 58,92 56,75 54,64 62,56 68,48" fill="#e6eadc" filter="url(#disp)"/>
<polyline points="29.2,0 30.7,31.5 42,46.5 57,57 67.5,60 78.5,60" fill="none" stroke="#a8aaa4" stroke-width="0.9"/>
<polyline points="72,60 75,72 78.5,80" fill="none" stroke="#c0c2bc" stroke-width="0.8"/>
<polygon points="16.5,16.5 22,15.5 28.5,13.5 29.2,9 31.5,8.2 33,15 42,18 49.5,20.2 57,24 60,21.7 61.5,23.2 59.2,28.5 55.5,30 54,36 61.5,37.5 68.2,39 67.5,41.2 60,39.7 53.2,37.5 52.5,31.5 48,28.5 40.5,24 34.5,21.7 30,19.5 21,18.7" fill="#b2e0f8"/>
<circle cx="70" cy="60" r="1.3" fill="#a9daf0"/><circle cx="71" cy="82" r="1" fill="#a9daf0"/>
<rect x="26.5" y="31" width="6" height="3" fill="#f6f6f2"/>
<rect x="69" y="58.6" width="7.5" height="2.2" fill="#f2f2ee"/>
<g fill="#3a3a5a" opacity="0.5">
<rect x="24" y="4.8" width="11" height="1.2"/><rect x="24" y="7.8" width="11" height="1.2"/>
<rect x="3" y="26.2" width="12.5" height="1.3"/><rect x="3" y="29.4" width="13.5" height="1.4"/>
<rect x="22.5" y="59.6" width="12" height="1.4"/>
<rect x="21" y="88" width="13" height="1.3"/>
</g>
<g fill="#5a88c0" opacity="0.6"><rect x="38.5" y="14.5" width="12" height="1.2"/><rect x="42" y="19.2" width="3" height="1.2"/><rect x="40.5" y="22.2" width="9" height="1.2"/><rect x="37.5" y="25.2" width="10.5" height="1.2"/></g>
</g>
<g clip-path="url(#sat)">
<g filter="url(#tex)">
<rect x="78.5" y="0" width="213" height="90" fill="#9c8c6c"/>
<g filter="url(#disp)">
<polygon points="76,-3 124,-3 122,20 112,34 100,30 86,44 76,44" fill="#b8a28e"/>
<polygon points="88,13 98,14 107,18 110,24 102,26 95,25 91,25 88,28 89,38 84,41 81,32 82,22" fill="#8f7864"/>
<polygon points="111,-2 127,-2 128,12 126,24 120,28 113,22 110,12" fill="#cfc39e"/>
<rect x="93" y="38" width="9" height="10" rx="4" fill="#e2d2aa"/>
<polygon points="76,64 95,62 104,72 104,93 76,93" fill="#86906c"/>
<polygon points="80,70 90,68 94,78 86,86 78,82" fill="#6c7c5a"/>
<polygon points="104,40 124,40 124,70 104,75 96,60" fill="#9c8a6a"/>
<polygon points="123,48 158,50 158,93 120,93 118,70" fill="#969c7e"/>
<polygon points="126,56 140,56 146,72 138,86 128,80" fill="#848f6c"/>
<polygon points="132,-3 158,-3 157,15 134,18" fill="#b2aa88"/>
<polygon points="140,15 157,14 156,26 152,41 146,30" fill="#d6cca6"/>
<polygon points="131,27 152,30 154,55 132,56" fill="#958268"/>
<polygon points="130,-3 137,-3 136,14 134,30 131,48 128,60 124,72 117,72 122,48 126,28 129,12" fill="#8a9674"/>
<polygon points="156,-3 182,-3 180,12 166,17 157,15" fill="#bca88a"/>
<polygon points="152,18 168,16 186,26 186,52 168,54 152,50" fill="#968264"/>
<polygon points="160,20 172,18 176,28 168,34 158,30" fill="#86705a"/>
<polygon points="169,13 180,12 188,22 188,32 178,32 170,26" fill="#bea8a2"/>
<polygon points="182,-3 196,-3 196,12 182,12" fill="#aca080"/>
<polygon points="156,62 170,62 170,90 156,90" fill="#a69676"/>
<polygon points="182,52 194,52 194,72 182,72" fill="#a49a7c"/>
<polygon points="182,72 198,66 198,93 182,93" fill="#5a6a48"/>
<polygon points="186,-3 236,-3 228,16 220,32 210,40 204,50 200,60 196,70 186,70" fill="#b8b292"/>
<polygon points="204,4 220,4 221,16 204,18" fill="#bdb596"/>
<polygon points="194,18 216,18 214,32 196,32" fill="#d8d0b0"/>
<polygon points="192,34 208,34 204,48 200,58 192,58" fill="#cdc4a4"/>
<polygon points="186,18 192,18 192,48 186,48" fill="#b4a08a"/>
<polygon points="222,0 236,-3 228,16 222,30 214,32" fill="#a6b290"/>
</g>
<g filter="url(#disp)"><ellipse cx="115.1" cy="9.3" rx="2.4" ry="1.4" fill="#ffffff" opacity="0.17"/><ellipse cx="222.1" cy="72.0" rx="3.7" ry="1.6" fill="#3a2a10" opacity="0.15"/><ellipse cx="105.1" cy="9.6" rx="1.8" ry="3.3" fill="#3a2a10" opacity="0.25"/><ellipse cx="203.7" cy="17.4" rx="2.1" ry="2.6" fill="#3a2a10" opacity="0.25"/><ellipse cx="216.2" cy="7.8" rx="3.1" ry="2.7" fill="#3a2a10" opacity="0.13"/><ellipse cx="152.4" cy="8.0" rx="4.3" ry="3.2" fill="#3a2a10" opacity="0.15"/><ellipse cx="220.7" cy="51.5" rx="4.1" ry="3.1" fill="#3a2a10" opacity="0.17"/><ellipse cx="172.0" cy="38.8" rx="1.6" ry="1.8" fill="#3a2a10" opacity="0.11"/><ellipse cx="85.3" cy="56.4" rx="2.0" ry="2.3" fill="#3a2a10" opacity="0.16"/><ellipse cx="234.6" cy="17.6" rx="2.4" ry="1.5" fill="#3a2a10" opacity="0.15"/><ellipse cx="133.9" cy="67.2" rx="2.1" ry="2.4" fill="#3a2a10" opacity="0.12"/><ellipse cx="87.7" cy="20.6" rx="3.7" ry="2.5" fill="#ffffff" opacity="0.16"/><ellipse cx="105.9" cy="41.3" rx="1.1" ry="2.7" fill="#3a2a10" opacity="0.27"/><ellipse cx="193.4" cy="86.4" rx="1.1" ry="1.7" fill="#3a2a10" opacity="0.24"/><ellipse cx="142.4" cy="84.9" rx="3.2" ry="3.0" fill="#ffffff" opacity="0.13"/><ellipse cx="147.7" cy="12.3" rx="2.3" ry="3.4" fill="#ffffff" opacity="0.10"/><ellipse cx="85.0" cy="15.3" rx="3.7" ry="1.9" fill="#ffffff" opacity="0.12"/><ellipse cx="232.1" cy="38.2" rx="1.7" ry="1.1" fill="#ffffff" opacity="0.13"/><ellipse cx="184.3" cy="13.5" rx="1.1" ry="2.2" fill="#ffffff" opacity="0.28"/><ellipse cx="97.2" cy="47.6" rx="3.7" ry="2.0" fill="#3a2a10" opacity="0.19"/><ellipse cx="116.0" cy="37.0" rx="1.1" ry="2.1" fill="#ffffff" opacity="0.26"/><ellipse cx="208.5" cy="44.9" rx="1.1" ry="1.6" fill="#ffffff" opacity="0.14"/><ellipse cx="114.3" cy="78.3" rx="1.5" ry="1.1" fill="#3a2a10" opacity="0.20"/><ellipse cx="233.5" cy="36.3" rx="4.2" ry="2.6" fill="#3a2a10" opacity="0.23"/><ellipse cx="155.6" cy="8.4" rx="1.7" ry="3.2" fill="#3a2a10" opacity="0.27"/><ellipse cx="130.8" cy="59.1" rx="3.8" ry="2.6" fill="#3a2a10" opacity="0.20"/><ellipse cx="180.8" cy="61.7" rx="1.9" ry="3.3" fill="#3a2a10" opacity="0.11"/><ellipse cx="230.5" cy="86.6" rx="3.3" ry="1.1" fill="#3a2a10" opacity="0.12"/><ellipse cx="230.1" cy="60.0" rx="1.2" ry="1.4" fill="#3a2a10" opacity="0.20"/><ellipse cx="195.2" cy="83.5" rx="1.8" ry="1.0" fill="#3a2a10" opacity="0.10"/><ellipse cx="215.6" cy="10.4" rx="3.8" ry="3.0" fill="#3a2a10" opacity="0.20"/><ellipse cx="216.0" cy="18.2" rx="3.4" ry="1.8" fill="#3a2a10" opacity="0.24"/><ellipse cx="152.0" cy="47.4" rx="1.1" ry="1.1" fill="#3a2a10" opacity="0.19"/><ellipse cx="213.8" cy="54.7" rx="1.5" ry="1.9" fill="#3a2a10" opacity="0.19"/><ellipse cx="79.7" cy="75.4" rx="3.9" ry="1.2" fill="#3a2a10" opacity="0.17"/><ellipse cx="201.6" cy="28.0" rx="1.8" ry="2.2" fill="#3a2a10" opacity="0.12"/><ellipse cx="96.0" cy="55.9" rx="4.1" ry="2.3" fill="#3a2a10" opacity="0.25"/><ellipse cx="199.9" cy="6.0" rx="4.1" ry="1.5" fill="#ffffff" opacity="0.25"/><ellipse cx="144.3" cy="71.9" rx="1.6" ry="3.2" fill="#ffffff" opacity="0.13"/><ellipse cx="155.6" cy="30.5" rx="2.9" ry="3.3" fill="#3a2a10" opacity="0.10"/><ellipse cx="127.0" cy="49.0" rx="2.7" ry="2.8" fill="#3a2a10" opacity="0.11"/><ellipse cx="116.5" cy="76.3" rx="2.2" ry="2.9" fill="#3a2a10" opacity="0.21"/><ellipse cx="184.2" cy="54.9" rx="2.1" ry="3.3" fill="#3a2a10" opacity="0.26"/><ellipse cx="126.0" cy="78.1" rx="3.8" ry="2.5" fill="#3a2a10" opacity="0.13"/><ellipse cx="199.1" cy="32.6" rx="3.3" ry="1.3" fill="#ffffff" opacity="0.13"/><ellipse cx="205.0" cy="16.0" rx="4.2" ry="1.9" fill="#3a2a10" opacity="0.16"/><ellipse cx="175.5" cy="8.4" rx="2.4" ry="3.3" fill="#ffffff" opacity="0.22"/><ellipse cx="129.3" cy="27.1" rx="1.1" ry="1.1" fill="#3a2a10" opacity="0.25"/><ellipse cx="203.8" cy="72.7" rx="4.3" ry="1.4" fill="#3a2a10" opacity="0.19"/><ellipse cx="168.1" cy="84.4" rx="3.7" ry="3.4" fill="#ffffff" opacity="0.22"/><ellipse cx="184.0" cy="67.1" rx="3.2" ry="3.1" fill="#ffffff" opacity="0.27"/><ellipse cx="141.8" cy="53.9" rx="4.1" ry="2.8" fill="#ffffff" opacity="0.14"/><ellipse cx="129.3" cy="56.4" rx="4.5" ry="3.2" fill="#ffffff" opacity="0.17"/><ellipse cx="206.3" cy="25.5" rx="2.4" ry="1.0" fill="#ffffff" opacity="0.20"/><ellipse cx="186.8" cy="55.3" rx="2.3" ry="3.4" fill="#3a2a10" opacity="0.13"/><ellipse cx="88.6" cy="87.6" rx="4.5" ry="3.3" fill="#3a2a10" opacity="0.16"/><ellipse cx="92.3" cy="23.2" rx="1.8" ry="3.3" fill="#3a2a10" opacity="0.24"/><ellipse cx="101.4" cy="21.5" rx="2.0" ry="3.4" fill="#ffffff" opacity="0.24"/><ellipse cx="184.9" cy="49.2" rx="4.4" ry="1.7" fill="#3a2a10" opacity="0.13"/><ellipse cx="93.2" cy="2.9" rx="2.1" ry="1.3" fill="#ffffff" opacity="0.28"/><ellipse cx="123.4" cy="80.1" rx="3.5" ry="2.8" fill="#3a2a10" opacity="0.27"/><ellipse cx="215.9" cy="64.7" rx="3.0" ry="2.7" fill="#3a2a10" opacity="0.20"/><ellipse cx="156.9" cy="13.9" rx="4.0" ry="2.2" fill="#ffffff" opacity="0.13"/><ellipse cx="215.3" cy="23.0" rx="2.4" ry="2.7" fill="#3a2a10" opacity="0.16"/><ellipse cx="138.7" cy="38.1" rx="1.1" ry="3.2" fill="#ffffff" opacity="0.27"/><ellipse cx="101.9" cy="14.1" rx="4.0" ry="3.1" fill="#ffffff" opacity="0.20"/><ellipse cx="152.8" cy="64.7" rx="1.6" ry="3.1" fill="#3a2a10" opacity="0.23"/><ellipse cx="222.6" cy="84.3" rx="2.3" ry="3.1" fill="#3a2a10" opacity="0.21"/><ellipse cx="94.8" cy="55.7" rx="4.2" ry="1.8" fill="#3a2a10" opacity="0.26"/><ellipse cx="172.2" cy="3.4" rx="3.2" ry="1.6" fill="#3a2a10" opacity="0.22"/><ellipse cx="126.3" cy="80.6" rx="3.2" ry="1.8" fill="#3a2a10" opacity="0.26"/><ellipse cx="218.2" cy="79.5" rx="3.3" ry="2.7" fill="#3a2a10" opacity="0.19"/><ellipse cx="233.0" cy="31.8" rx="1.3" ry="2.8" fill="#3a2a10" opacity="0.20"/><ellipse cx="171.9" cy="22.5" rx="1.7" ry="1.2" fill="#3a2a10" opacity="0.26"/><ellipse cx="187.4" cy="10.5" rx="4.4" ry="3.1" fill="#3a2a10" opacity="0.10"/><ellipse cx="210.5" cy="56.1" rx="3.2" ry="1.0" fill="#3a2a10" opacity="0.11"/><ellipse cx="153.1" cy="13.0" rx="2.3" ry="3.2" fill="#3a2a10" opacity="0.25"/><ellipse cx="124.8" cy="35.0" rx="3.1" ry="1.1" fill="#ffffff" opacity="0.28"/><ellipse cx="196.4" cy="77.6" rx="2.0" ry="2.7" fill="#3a2a10" opacity="0.23"/><ellipse cx="146.7" cy="15.7" rx="1.1" ry="3.2" fill="#3a2a10" opacity="0.15"/><ellipse cx="196.7" cy="36.6" rx="3.2" ry="3.1" fill="#ffffff" opacity="0.21"/><ellipse cx="118.2" cy="46.0" rx="1.1" ry="1.7" fill="#ffffff" opacity="0.26"/><ellipse cx="98.8" cy="68.2" rx="1.3" ry="3.5" fill="#ffffff" opacity="0.12"/><ellipse cx="111.2" cy="84.0" rx="3.3" ry="3.2" fill="#3a2a10" opacity="0.12"/><ellipse cx="131.5" cy="41.0" rx="4.5" ry="1.4" fill="#ffffff" opacity="0.25"/><ellipse cx="95.9" cy="87.4" rx="2.0" ry="2.4" fill="#3a2a10" opacity="0.26"/><ellipse cx="89.9" cy="76.2" rx="1.6" ry="2.8" fill="#ffffff" opacity="0.24"/><ellipse cx="106.4" cy="18.6" rx="1.1" ry="1.8" fill="#ffffff" opacity="0.28"/><ellipse cx="173.3" cy="32.8" rx="4.5" ry="1.4" fill="#ffffff" opacity="0.27"/><ellipse cx="227.4" cy="61.6" rx="4.4" ry="1.1" fill="#3a2a10" opacity="0.23"/><ellipse cx="182.9" cy="75.9" rx="1.4" ry="1.5" fill="#ffffff" opacity="0.19"/><ellipse cx="163.7" cy="48.7" rx="2.3" ry="2.9" fill="#3a2a10" opacity="0.24"/><ellipse cx="83.9" cy="13.8" rx="1.8" ry="1.6" fill="#3a2a10" opacity="0.14"/><ellipse cx="176.1" cy="31.0" rx="2.3" ry="2.8" fill="#3a2a10" opacity="0.13"/><ellipse cx="132.7" cy="88.3" rx="1.7" ry="1.1" fill="#ffffff" opacity="0.25"/><ellipse cx="192.8" cy="84.5" rx="2.7" ry="1.1" fill="#ffffff" opacity="0.23"/><ellipse cx="139.7" cy="12.6" rx="2.3" ry="2.2" fill="#ffffff" opacity="0.18"/><ellipse cx="99.4" cy="2.7" rx="3.7" ry="2.8" fill="#ffffff" opacity="0.12"/><ellipse cx="124.4" cy="50.2" rx="4.1" ry="2.2" fill="#3a2a10" opacity="0.19"/><ellipse cx="106.4" cy="55.4" rx="3.1" ry="2.5" fill="#3a2a10" opacity="0.10"/><ellipse cx="146.6" cy="72.0" rx="1.5" ry="1.1" fill="#ffffff" opacity="0.15"/><ellipse cx="146.3" cy="28.3" rx="3.2" ry="1.4" fill="#ffffff" opacity="0.22"/><ellipse cx="163.5" cy="86.3" rx="4.3" ry="1.6" fill="#ffffff" opacity="0.20"/><ellipse cx="163.4" cy="32.9" rx="4.0" ry="1.5" fill="#3a2a10" opacity="0.12"/><ellipse cx="216.6" cy="53.6" rx="4.5" ry="1.4" fill="#3a2a10" opacity="0.21"/><ellipse cx="86.1" cy="73.8" rx="4.1" ry="1.2" fill="#3a2a10" opacity="0.24"/><ellipse cx="172.9" cy="48.9" rx="1.9" ry="1.1" fill="#3a2a10" opacity="0.26"/><ellipse cx="110.8" cy="42.5" rx="2.0" ry="2.7" fill="#3a2a10" opacity="0.26"/><ellipse cx="123.2" cy="37.5" rx="1.0" ry="2.3" fill="#3a2a10" opacity="0.25"/><ellipse cx="89.3" cy="39.0" rx="1.3" ry="2.1" fill="#3a2a10" opacity="0.15"/><ellipse cx="210.8" cy="86.0" rx="3.9" ry="1.5" fill="#3a2a10" opacity="0.27"/><ellipse cx="234.8" cy="1.0" rx="1.0" ry="1.7" fill="#3a2a10" opacity="0.18"/><ellipse cx="92.5" cy="57.6" rx="3.3" ry="2.6" fill="#3a2a10" opacity="0.20"/><ellipse cx="186.3" cy="5.8" rx="2.5" ry="1.3" fill="#ffffff" opacity="0.24"/><ellipse cx="128.9" cy="30.5" rx="2.0" ry="2.5" fill="#ffffff" opacity="0.22"/><ellipse cx="89.1" cy="86.0" rx="1.5" ry="2.9" fill="#3a2a10" opacity="0.18"/><ellipse cx="125.8" cy="32.3" rx="3.7" ry="2.3" fill="#3a2a10" opacity="0.14"/><ellipse cx="176.1" cy="15.4" rx="2.7" ry="2.6" fill="#3a2a10" opacity="0.20"/><ellipse cx="167.5" cy="17.4" rx="4.4" ry="2.7" fill="#3a2a10" opacity="0.27"/><ellipse cx="148.9" cy="29.9" rx="2.1" ry="1.8" fill="#ffffff" opacity="0.16"/><ellipse cx="110.8" cy="43.6" rx="2.0" ry="1.9" fill="#3a2a10" opacity="0.16"/><ellipse cx="213.5" cy="71.8" rx="2.1" ry="3.1" fill="#ffffff" opacity="0.12"/><ellipse cx="234.2" cy="3.0" rx="1.0" ry="3.2" fill="#ffffff" opacity="0.22"/><ellipse cx="165.3" cy="20.1" rx="1.9" ry="3.4" fill="#ffffff" opacity="0.14"/><ellipse cx="147.3" cy="65.9" rx="2.0" ry="1.2" fill="#3a2a10" opacity="0.12"/><ellipse cx="86.7" cy="0.4" rx="4.5" ry="2.1" fill="#3a2a10" opacity="0.20"/><ellipse cx="231.1" cy="30.9" rx="2.2" ry="2.7" fill="#ffffff" opacity="0.17"/><ellipse cx="197.2" cy="51.6" rx="2.7" ry="3.3" fill="#3a2a10" opacity="0.23"/><ellipse cx="139.6" cy="7.8" rx="2.4" ry="1.5" fill="#ffffff" opacity="0.15"/><ellipse cx="97.8" cy="41.1" rx="3.6" ry="2.9" fill="#3a2a10" opacity="0.16"/><ellipse cx="183.1" cy="80.0" rx="2.4" ry="3.3" fill="#ffffff" opacity="0.27"/><ellipse cx="216.3" cy="88.2" rx="3.9" ry="2.8" fill="#3a2a10" opacity="0.23"/><ellipse cx="215.9" cy="51.8" rx="3.2" ry="3.3" fill="#ffffff" opacity="0.16"/><ellipse cx="83.6" cy="79.0" rx="3.2" ry="2.7" fill="#ffffff" opacity="0.13"/><ellipse cx="153.2" cy="78.9" rx="2.2" ry="2.1" fill="#ffffff" opacity="0.25"/><ellipse cx="97.5" cy="77.9" rx="1.0" ry="2.7" fill="#3a2a10" opacity="0.18"/><ellipse cx="194.5" cy="25.2" rx="1.5" ry="1.9" fill="#ffffff" opacity="0.23"/><ellipse cx="166.6" cy="59.5" rx="4.4" ry="2.9" fill="#3a2a10" opacity="0.27"/><ellipse cx="223.8" cy="66.7" rx="2.2" ry="2.3" fill="#3a2a10" opacity="0.24"/><ellipse cx="219.3" cy="66.8" rx="3.3" ry="1.6" fill="#3a2a10" opacity="0.13"/><ellipse cx="179.6" cy="15.8" rx="1.1" ry="3.4" fill="#3a2a10" opacity="0.15"/><ellipse cx="85.1" cy="73.7" rx="3.7" ry="1.4" fill="#3a2a10" opacity="0.25"/><ellipse cx="168.2" cy="24.6" rx="1.2" ry="1.2" fill="#3a2a10" opacity="0.23"/><ellipse cx="178.2" cy="20.2" rx="3.8" ry="1.2" fill="#3a2a10" opacity="0.13"/><ellipse cx="78.9" cy="17.4" rx="3.8" ry="1.5" fill="#ffffff" opacity="0.19"/><ellipse cx="132.8" cy="51.7" rx="3.0" ry="2.8" fill="#3a2a10" opacity="0.16"/><ellipse cx="177.7" cy="10.7" rx="1.9" ry="1.2" fill="#3a2a10" opacity="0.16"/><ellipse cx="189.6" cy="79.0" rx="2.3" ry="1.5" fill="#ffffff" opacity="0.19"/><ellipse cx="138.8" cy="6.3" rx="4.0" ry="2.6" fill="#3a2a10" opacity="0.25"/><ellipse cx="191.9" cy="74.2" rx="3.5" ry="2.1" fill="#3a2a10" opacity="0.27"/><ellipse cx="94.9" cy="13.0" rx="1.6" ry="2.1" fill="#3a2a10" opacity="0.19"/><ellipse cx="212.3" cy="33.0" rx="3.0" ry="1.6" fill="#3a2a10" opacity="0.15"/><ellipse cx="79.2" cy="35.8" rx="3.0" ry="3.2" fill="#ffffff" opacity="0.27"/><ellipse cx="205.4" cy="14.2" rx="3.7" ry="3.3" fill="#3a2a10" opacity="0.22"/><ellipse cx="139.3" cy="48.9" rx="3.3" ry="2.5" fill="#ffffff" opacity="0.26"/><ellipse cx="162.9" cy="6.4" rx="2.1" ry="1.2" fill="#3a2a10" opacity="0.12"/><ellipse cx="161.2" cy="25.1" rx="3.9" ry="2.9" fill="#ffffff" opacity="0.25"/><ellipse cx="169.4" cy="24.3" rx="4.2" ry="1.0" fill="#ffffff" opacity="0.21"/><ellipse cx="103.5" cy="44.2" rx="4.1" ry="1.9" fill="#3a2a10" opacity="0.13"/><ellipse cx="231.2" cy="86.8" rx="1.6" ry="2.9" fill="#ffffff" opacity="0.11"/><ellipse cx="111.1" cy="65.6" rx="2.6" ry="2.3" fill="#ffffff" opacity="0.13"/><ellipse cx="135.3" cy="46.2" rx="3.9" ry="2.1" fill="#ffffff" opacity="0.26"/><ellipse cx="186.4" cy="68.0" rx="3.8" ry="2.2" fill="#ffffff" opacity="0.12"/><ellipse cx="181.2" cy="67.4" rx="4.2" ry="3.3" fill="#3a2a10" opacity="0.19"/><ellipse cx="229.5" cy="7.7" rx="2.3" ry="2.4" fill="#3a2a10" opacity="0.21"/><ellipse cx="102.9" cy="45.7" rx="1.6" ry="2.0" fill="#ffffff" opacity="0.16"/><ellipse cx="176.4" cy="35.9" rx="1.6" ry="2.2" fill="#3a2a10" opacity="0.15"/><ellipse cx="120.7" cy="39.3" rx="3.4" ry="1.1" fill="#3a2a10" opacity="0.11"/><ellipse cx="217.7" cy="17.2" rx="3.9" ry="1.1" fill="#3a2a10" opacity="0.15"/><ellipse cx="199.8" cy="69.4" rx="1.4" ry="1.1" fill="#3a2a10" opacity="0.18"/><ellipse cx="136.5" cy="31.4" rx="2.3" ry="2.4" fill="#ffffff" opacity="0.12"/><ellipse cx="152.0" cy="89.0" rx="3.7" ry="2.8" fill="#3a2a10" opacity="0.18"/><ellipse cx="134.9" cy="71.4" rx="1.4" ry="2.9" fill="#ffffff" opacity="0.21"/><ellipse cx="158.7" cy="69.5" rx="1.2" ry="2.7" fill="#3a2a10" opacity="0.11"/><ellipse cx="185.3" cy="25.2" rx="3.6" ry="3.4" fill="#ffffff" opacity="0.17"/><ellipse cx="156.4" cy="88.3" rx="4.2" ry="1.1" fill="#ffffff" opacity="0.17"/><ellipse cx="204.2" cy="71.1" rx="2.9" ry="3.3" fill="#3a2a10" opacity="0.26"/><ellipse cx="177.6" cy="23.3" rx="3.6" ry="2.8" fill="#3a2a10" opacity="0.13"/><ellipse cx="81.5" cy="30.7" rx="1.9" ry="2.0" fill="#ffffff" opacity="0.21"/><ellipse cx="145.1" cy="23.9" rx="1.4" ry="2.4" fill="#ffffff" opacity="0.25"/><ellipse cx="121.5" cy="80.8" rx="1.4" ry="2.0" fill="#3a2a10" opacity="0.19"/><ellipse cx="148.3" cy="79.3" rx="1.6" ry="3.1" fill="#3a2a10" opacity="0.15"/><ellipse cx="132.9" cy="25.1" rx="3.2" ry="2.1" fill="#3a2a10" opacity="0.22"/><ellipse cx="212.9" cy="62.8" rx="2.0" ry="2.7" fill="#3a2a10" opacity="0.26"/><ellipse cx="138.6" cy="47.9" rx="3.6" ry="1.8" fill="#ffffff" opacity="0.21"/><ellipse cx="136.6" cy="76.3" rx="2.2" ry="1.6" fill="#3a2a10" opacity="0.21"/><ellipse cx="233.5" cy="84.8" rx="2.5" ry="2.1" fill="#3a2a10" opacity="0.19"/><ellipse cx="170.3" cy="36.1" rx="4.0" ry="3.2" fill="#3a2a10" opacity="0.23"/><ellipse cx="217.4" cy="23.0" rx="4.3" ry="1.5" fill="#ffffff" opacity="0.19"/><ellipse cx="102.8" cy="23.0" rx="3.1" ry="1.4" fill="#ffffff" opacity="0.17"/><ellipse cx="226.1" cy="7.1" rx="2.8" ry="2.2" fill="#ffffff" opacity="0.16"/><ellipse cx="135.0" cy="32.2" rx="2.9" ry="2.4" fill="#3a2a10" opacity="0.18"/><ellipse cx="173.7" cy="43.6" rx="1.4" ry="2.6" fill="#ffffff" opacity="0.25"/><ellipse cx="98.8" cy="49.1" rx="2.0" ry="2.6" fill="#3a2a10" opacity="0.22"/><ellipse cx="167.8" cy="83.8" rx="1.8" ry="3.5" fill="#3a2a10" opacity="0.21"/><ellipse cx="98.4" cy="2.7" rx="1.6" ry="2.4" fill="#ffffff" opacity="0.24"/><ellipse cx="102.3" cy="59.7" rx="4.2" ry="2.7" fill="#3a2a10" opacity="0.25"/><ellipse cx="212.7" cy="3.6" rx="2.8" ry="1.7" fill="#3a2a10" opacity="0.23"/><ellipse cx="192.8" cy="18.4" rx="1.6" ry="1.2" fill="#3a2a10" opacity="0.25"/><ellipse cx="92.5" cy="12.3" rx="1.5" ry="3.5" fill="#ffffff" opacity="0.20"/><ellipse cx="215.6" cy="15.4" rx="3.4" ry="1.8" fill="#3a2a10" opacity="0.18"/><ellipse cx="101.4" cy="80.7" rx="2.8" ry="3.5" fill="#3a2a10" opacity="0.27"/><ellipse cx="180.8" cy="5.2" rx="1.0" ry="3.5" fill="#3a2a10" opacity="0.24"/><ellipse cx="209.6" cy="32.5" rx="3.5" ry="2.6" fill="#ffffff" opacity="0.20"/><ellipse cx="224.0" cy="50.1" rx="3.8" ry="1.2" fill="#ffffff" opacity="0.19"/><ellipse cx="165.2" cy="76.1" rx="2.7" ry="2.4" fill="#3a2a10" opacity="0.22"/><ellipse cx="169.0" cy="35.6" rx="2.0" ry="3.2" fill="#ffffff" opacity="0.23"/><ellipse cx="120.6" cy="88.9" rx="1.8" ry="2.0" fill="#ffffff" opacity="0.26"/><ellipse cx="192.9" cy="23.6" rx="1.9" ry="2.9" fill="#3a2a10" opacity="0.13"/><ellipse cx="96.3" cy="64.9" rx="3.3" ry="3.0" fill="#ffffff" opacity="0.19"/><ellipse cx="100.7" cy="51.3" rx="1.8" ry="1.6" fill="#3a2a10" opacity="0.13"/><ellipse cx="202.7" cy="15.0" rx="1.9" ry="2.9" fill="#ffffff" opacity="0.15"/><ellipse cx="201.0" cy="50.7" rx="3.8" ry="3.2" fill="#3a2a10" opacity="0.12"/><ellipse cx="139.7" cy="40.9" rx="2.0" ry="3.2" fill="#ffffff" opacity="0.27"/><ellipse cx="89.1" cy="40.0" rx="3.2" ry="3.0" fill="#3a2a10" opacity="0.26"/><ellipse cx="124.6" cy="32.0" rx="1.7" ry="1.5" fill="#3a2a10" opacity="0.23"/><ellipse cx="108.2" cy="43.9" rx="2.5" ry="3.5" fill="#3a2a10" opacity="0.25"/><ellipse cx="114.8" cy="80.5" rx="1.1" ry="1.4" fill="#3a2a10" opacity="0.20"/><ellipse cx="160.8" cy="56.0" rx="2.2" ry="2.7" fill="#ffffff" opacity="0.21"/><ellipse cx="190.1" cy="27.9" rx="3.7" ry="3.1" fill="#3a2a10" opacity="0.11"/><ellipse cx="144.9" cy="14.8" rx="1.6" ry="2.2" fill="#3a2a10" opacity="0.12"/><ellipse cx="202.8" cy="75.9" rx="4.4" ry="2.9" fill="#ffffff" opacity="0.23"/><ellipse cx="168.1" cy="24.6" rx="3.8" ry="1.8" fill="#3a2a10" opacity="0.26"/><ellipse cx="140.3" cy="12.2" rx="3.9" ry="1.4" fill="#ffffff" opacity="0.26"/><ellipse cx="115.2" cy="23.5" rx="2.4" ry="2.8" fill="#ffffff" opacity="0.16"/><ellipse cx="88.5" cy="23.1" rx="3.6" ry="2.6" fill="#3a2a10" opacity="0.26"/><ellipse cx="82.8" cy="25.3" rx="3.2" ry="1.9" fill="#3a2a10" opacity="0.14"/><ellipse cx="228.7" cy="65.9" rx="3.4" ry="3.4" fill="#3a2a10" opacity="0.16"/><ellipse cx="146.5" cy="66.2" rx="3.9" ry="2.6" fill="#3a2a10" opacity="0.22"/><ellipse cx="200.1" cy="11.5" rx="3.9" ry="2.3" fill="#ffffff" opacity="0.12"/><ellipse cx="173.2" cy="19.8" rx="2.3" ry="2.4" fill="#ffffff" opacity="0.14"/><ellipse cx="90.0" cy="31.4" rx="3.9" ry="1.6" fill="#ffffff" opacity="0.12"/><ellipse cx="173.3" cy="66.7" rx="1.7" ry="3.1" fill="#ffffff" opacity="0.12"/><ellipse cx="92.8" cy="70.8" rx="1.3" ry="2.8" fill="#ffffff" opacity="0.15"/><ellipse cx="93.7" cy="73.0" rx="2.3" ry="3.3" fill="#3a2a10" opacity="0.20"/><ellipse cx="150.4" cy="50.6" rx="3.0" ry="3.4" fill="#ffffff" opacity="0.13"/><ellipse cx="234.8" cy="61.9" rx="3.2" ry="2.2" fill="#ffffff" opacity="0.14"/><ellipse cx="203.9" cy="24.4" rx="3.1" ry="2.2" fill="#ffffff" opacity="0.11"/><ellipse cx="88.3" cy="64.2" rx="1.8" ry="2.3" fill="#3a2a10" opacity="0.24"/><ellipse cx="103.1" cy="38.4" rx="3.6" ry="2.7" fill="#3a2a10" opacity="0.22"/><ellipse cx="201.5" cy="78.9" rx="2.9" ry="1.3" fill="#ffffff" opacity="0.22"/><ellipse cx="184.8" cy="40.1" rx="3.4" ry="1.5" fill="#ffffff" opacity="0.17"/><ellipse cx="195.7" cy="86.9" rx="2.0" ry="1.2" fill="#ffffff" opacity="0.26"/><ellipse cx="234.2" cy="5.2" rx="2.2" ry="2.2" fill="#3a2a10" opacity="0.20"/><ellipse cx="145.2" cy="87.6" rx="3.6" ry="3.2" fill="#3a2a10" opacity="0.28"/><ellipse cx="185.3" cy="70.3" rx="2.8" ry="2.7" fill="#3a2a10" opacity="0.27"/><ellipse cx="219.4" cy="60.8" rx="2.7" ry="2.0" fill="#ffffff" opacity="0.27"/><ellipse cx="182.6" cy="71.9" rx="3.3" ry="1.3" fill="#3a2a10" opacity="0.16"/><ellipse cx="230.0" cy="61.9" rx="2.3" ry="2.3" fill="#3a2a10" opacity="0.20"/><ellipse cx="188.9" cy="32.6" rx="2.5" ry="2.9" fill="#ffffff" opacity="0.22"/><ellipse cx="210.1" cy="89.6" rx="2.9" ry="2.5" fill="#3a2a10" opacity="0.24"/><ellipse cx="214.5" cy="47.3" rx="1.5" ry="3.1" fill="#ffffff" opacity="0.23"/><ellipse cx="123.8" cy="72.7" rx="3.2" ry="2.3" fill="#3a2a10" opacity="0.15"/><ellipse cx="234.9" cy="50.1" rx="4.4" ry="1.3" fill="#ffffff" opacity="0.13"/><ellipse cx="128.2" cy="88.7" rx="1.4" ry="2.3" fill="#3a2a10" opacity="0.15"/><ellipse cx="123.7" cy="19.1" rx="1.2" ry="2.5" fill="#3a2a10" opacity="0.14"/><ellipse cx="166.1" cy="45.2" rx="3.4" ry="1.6" fill="#ffffff" opacity="0.26"/><ellipse cx="185.8" cy="68.2" rx="2.2" ry="2.5" fill="#ffffff" opacity="0.22"/><ellipse cx="228.1" cy="43.9" rx="2.6" ry="2.8" fill="#3a2a10" opacity="0.17"/><ellipse cx="81.5" cy="73.7" rx="2.8" ry="3.1" fill="#ffffff" opacity="0.26"/></g>
</g>
<rect x="170" y="51" width="14" height="18" fill="#e6d2c2" filter="url(#disp)"/>
<rect x="178" y="55" width="7" height="14" fill="#e8d8c4" filter="url(#disp)"/>
<polygon points="173,59 179,60 178,75 175,78 173,70" fill="#a88c88" filter="url(#bl1)"/>
<rect x="152" y="56" width="12" height="7" rx="3" fill="#e2d9bc" filter="url(#bl1)"/>
<rect x="144" y="72" width="8" height="7" rx="3" fill="#e0d8ba" filter="url(#bl1)"/>
<circle cx="155.5" cy="59.5" r="0.9" fill="#3a3a60"/><circle cx="159" cy="59.5" r="0.9" fill="#3a3a60"/>
<polygon points="233.6,0 229.3,12 222.8,25 219.5,31.5 210.9,38 204.4,47.8 201.1,57.6 196.8,68.4 193.5,81.4 191.9,90 291,90 291,0" fill="#9c7a52"/>
<polyline points="233.6,0 229.3,12 222.8,25 219.5,31.5 210.9,38 204.4,47.8 201.1,57.6 196.8,68.4 193.5,81.4 191.9,90" fill="none" stroke="#74845a" stroke-width="3" opacity="0.55" filter="url(#disp)"/>
<rect x="134" y="84" width="29" height="6" fill="#a6764c"/>
<ellipse cx="143.5" cy="83.5" rx="3.5" ry="2" fill="#5cc85c"/>
<circle cx="218" cy="33" r="2.6" fill="#58c858"/><circle cx="218" cy="32.5" r="0.9" fill="#4a4a8a"/>
<circle cx="201" cy="61" r="2.6" fill="#58c858"/><circle cx="200.5" cy="60.5" r="0.9" fill="#4a4a8a"/>
<g fill="#3a3a5a" opacity="0.7"><circle cx="148" cy="60" r="0.8"/><circle cx="151" cy="60" r="0.8"/><circle cx="197" cy="78" r="0.9"/><circle cx="86" cy="84" r="0.7"/></g>
</g>
</g>
</svg></div>
<div style="left:80.00px;top:135.00px;width:296.00px;height:5.50px;background:#ffffff;"></div>
<div style="left:80.00px;top:134.80px;width:24.00px;height:5.80px;background:#ffffff;border:0.6px solid #aaa;box-sizing:border-box"></div>
<p class="t" style="left:83.0px;top:137.0px;width:9.0px;font-size:3.1px;background-image:linear-gradient(90deg,#8899be,#4c6baa,#5a79b0);opacity:1.00">planar n</p>
<div style="left:105.00px;top:135.50px;width:1.00px;height:4.00px;background:#555;"></div>
<div style="left:108.00px;top:136.00px;width:3.00px;height:3.00px;background:#5a8ad0;"></div>
<div style="left:113.00px;top:136.00px;width:3.00px;height:3.00px;background:#6a6a6a;"></div>
<div style="left:117.00px;top:136.00px;width:2.00px;height:3.00px;background:#aaa;"></div>
<div style="left:121.00px;top:136.00px;width:4.00px;height:3.00px;background:#5a8ad0;"></div>
<p class="t" style="left:225.0px;top:136.7px;width:22.0px;font-size:3.5px;background-image:linear-gradient(90deg,#4c4c67,#4c4c67,#2b2b2b,#2b2b2b);opacity:0.80">mapa extracción</p>
<p class="t" style="left:357.0px;top:136.7px;width:11.0px;font-size:3.5px;background-image:linear-gradient(90deg,#5a79b0,#675a8e);opacity:0.96">clasific</p>
<div style="left:360.00px;top:136.00px;width:0.80px;height:3.00px;background:#555;"></div>
<div style="left:362.00px;top:136.00px;width:0.80px;height:3.00px;background:#555;"></div>
<div style="left:364.00px;top:136.00px;width:0.80px;height:3.00px;background:#555;"></div>
<div style="left:371.50px;top:136.00px;width:1.40px;height:1.40px;background:#3a8ad8;"></div>
<div style="left:374.00px;top:136.00px;width:1.40px;height:1.40px;background:#3a8ad8;"></div>
<div style="left:371.50px;top:138.50px;width:1.40px;height:1.40px;background:#3a8ad8;"></div>
<div style="left:374.00px;top:138.50px;width:1.40px;height:1.40px;background:#3a8ad8;"></div>
<div style="left:80.00px;top:140.50px;width:296.00px;height:105.50px;background:#efefef;"></div>
<div style="left:80.50px;top:142.20px;width:16.00px;height:4.60px;background:#f4f4f4;"></div>
<div style="left:81.50px;top:143.20px;width:3.00px;height:2.20px;background:#3a6ab0;"></div>
<p class="t" style="left:85.0px;top:144.2px;width:8.0px;font-size:3.1px;background-image:linear-gradient(90deg,#5a4c8e,#5a4c8e,#5a4c8e,#5a4c8e);opacity:1.00">convers</p>
<div style="left:100.00px;top:142.00px;width:21.50px;height:5.00px;background:#d8dce0;border:0.5px solid #b8bcc2;box-sizing:border-box"></div>
<div style="left:101.50px;top:143.20px;width:3.00px;height:2.20px;background:#5a8ac0;"></div>
<p class="t" style="left:106.0px;top:144.1px;width:10.0px;font-size:3.1px;background-image:linear-gradient(90deg,#90909e,#90909e,#90909e);opacity:0.96">catálogo</p>
<p class="t" style="left:79.5px;top:150.7px;width:8.0px;font-size:3.5px;background-image:linear-gradient(90deg,#5a4c8e,#5a4c8e);opacity:1.00">zonal </p>
<div style="left:92.00px;top:150.00px;width:2.20px;height:2.60px;background:#555;"></div>
<p class="t" style="left:95.0px;top:150.7px;width:7.0px;font-size:3.5px;background-image:linear-gradient(90deg,#a6754c,#675a8e);opacity:0.96">capa n</p>
<div style="left:110.00px;top:149.60px;width:2.40px;height:3.00px;background:#555;"></div>
<p class="t" style="left:113.0px;top:150.7px;width:7.0px;font-size:3.5px;background-image:linear-gradient(90deg,#755f95,#5a79b0);opacity:0.96">nombre</p>
<p class="t" style="left:127.0px;top:150.7px;width:28.0px;font-size:3.5px;background-image:linear-gradient(90deg,#a3754c,#a3754c,#a3754c);opacity:0.96">tabla capa código </p>
<p class="t" style="left:156.0px;top:150.7px;width:22.0px;font-size:3.5px;background-image:linear-gradient(90deg,#5a79b0,#675a8e,#5a79b0);opacity:0.96">geoprocesamient</p>
<p class="t" style="left:179.0px;top:150.7px;width:18.0px;font-size:3.5px;background-image:linear-gradient(90deg,#755f95,#675a8e,#9c8251);opacity:0.96">herramientas</p>
<div style="left:213.00px;top:150.00px;width:2.20px;height:2.60px;background:#555;"></div>
<p class="t" style="left:216.0px;top:150.7px;width:10.0px;font-size:3.5px;background-image:linear-gradient(90deg,#755f95,#a6754c,#675a8e);opacity:0.96">superfi</p>
<div style="left:233.00px;top:149.60px;width:3.00px;height:3.00px;background:#eee;border:0.6px solid #444;box-sizing:border-box"></div>
<p class="t" style="left:238.0px;top:150.7px;width:20.0px;font-size:3.5px;background-image:linear-gradient(90deg,#755f95,#675a8e);opacity:0.80">código imágen</p>
<div style="left:371.00px;top:149.20px;width:4.20px;height:0.70px;background:#444;"></div>
<div style="left:371.00px;top:150.70px;width:4.20px;height:0.70px;background:#444;"></div>
<div style="left:371.00px;top:152.20px;width:4.20px;height:0.70px;background:#444;"></div>
<div style="left:80.00px;top:154.60px;width:296.00px;height:0.60px;background:#cdcdcd;"></div>
<div style="left:80.00px;top:155.20px;width:254.00px;height:6.00px;background:#e6e6e6;"></div>
<div style="left:86.50px;top:155.20px;width:17.50px;height:6.00px;background:#d3e5f5;"></div>
<div style="left:86.50px;top:160.50px;width:17.50px;height:0.90px;background:#2b7bd2;"></div>
<div style="left:82.00px;top:158.00px;width:2.50px;height:2.00px;background:#aaa;clip-path:polygon(0 100%,100% 100%,100% 0)"></div>
<p class="t" style="left:88.0px;top:157.5px;width:10.0px;font-size:3.1px;background-image:linear-gradient(90deg,#675a8e,#5a79b0,#675a8e);opacity:1.00">solar im</p>
<p class="t" style="left:104.5px;top:157.5px;width:8.0px;font-size:3.1px;background-image:linear-gradient(90deg,#5a79b0,#675a8e,#5a79b0,#a3824c);opacity:1.00">general</p>
<p class="t" style="left:121.5px;top:157.5px;width:6.0px;font-size:3.1px;background-image:linear-gradient(90deg,#5a79b0,#675a8e,#a3824c);opacity:1.00">conver</p>
<p class="t" style="left:146.0px;top:157.5px;width:9.0px;font-size:3.1px;background-image:linear-gradient(90deg,#a3824c,#a3824c);opacity:1.00">herramie</p>
<p class="t" style="left:176.0px;top:157.5px;width:9.0px;font-size:3.1px;background-image:linear-gradient(90deg,#a3824c,#5a79b0,#5a79b0);opacity:1.00">selecció</p>
<p class="t" style="left:208.0px;top:157.5px;width:6.0px;font-size:3.1px;background-image:linear-gradient(90deg,#675a8e,#675a8e,#a3824c,#a3824c);opacity:1.00">densid</p>
<p class="t" style="left:240.5px;top:157.5px;width:7.0px;font-size:3.1px;background-image:linear-gradient(90deg,#a3824c,#5a79b0,#5a79b0,#a3824c);opacity:1.00">hidrol</p>
<p class="t" style="left:272.0px;top:157.5px;width:10.0px;font-size:3.1px;background-image:linear-gradient(90deg,#675a8e,#a3824c,#675a8e);opacity:1.00">campos n</p>
<p class="t" style="left:303.5px;top:157.5px;width:9.0px;font-size:3.1px;background-image:linear-gradient(90deg,#a3824c,#5a79b0,#675a8e);opacity:1.00">generali</p>
<div style="left:86.50px;top:161.20px;width:247.70px;height:5.90px;background:#ffffff;"></div>
<div style="left:80.00px;top:161.20px;width:6.50px;height:5.90px;background:#ededed;"></div>
<p class="t" style="left:81.0px;top:163.4px;width:3.0px;font-size:3.5px;background-image:linear-gradient(90deg,#484848,#756795,#484848,#756795);opacity:1.00">zon</p>
<div style="left:89.00px;top:163.20px;width:0.90px;height:1.80px;background:#6a8fd0;"></div>
<p class="t" style="left:104.5px;top:163.5px;width:12.0px;font-size:3.5px;background-image:linear-gradient(90deg,#5a3175,#5a3175,#88516c,#67355a);opacity:1.00">multivari</p>
<p class="t" style="left:121.5px;top:163.5px;width:19.7px;font-size:3.5px;background-image:linear-gradient(90deg,#5a79b0,#7588b0,#a37a3e);opacity:1.00">zonal espacia</p>
<p class="t" style="left:146.0px;top:163.5px;width:17.9px;font-size:3.5px;background-image:linear-gradient(90deg,#5a79b0,#a37a44,#674c95,#5a79b0);opacity:1.00">proyecto edi</p>
<p class="t" style="left:176.0px;top:163.5px;width:17.9px;font-size:3.5px;background-image:linear-gradient(90deg,#5a79b0,#5a79b0,#a3754c);opacity:1.00">mapa segment</p>
<p class="t" style="left:208.0px;top:163.5px;width:22.9px;font-size:3.5px;background-image:linear-gradient(90deg,#5a79b0,#5a79b0,#5a79b0,#675a8e);opacity:1.00">ráster mapa cód</p>
<p class="t" style="left:240.5px;top:163.5px;width:8.0px;font-size:3.5px;background-image:linear-gradient(90deg,#5a79b0,#5a79b0,#5a79b0);opacity:1.00">editar</p>
<p class="t" style="left:272.0px;top:163.5px;width:17.1px;font-size:3.5px;background-image:linear-gradient(90deg,#675a8e,#a3754c,#a3754c);opacity:1.00">población pr</p>
<p class="t" style="left:303.5px;top:163.5px;width:8.9px;font-size:3.5px;background-image:linear-gradient(90deg,#a38851,#675a8e);opacity:1.00">capa re</p>
<div style="left:86.50px;top:167.10px;width:247.70px;height:5.90px;background:#e9e9e9;"></div>
<div style="left:80.00px;top:167.10px;width:6.50px;height:5.90px;background:#ededed;"></div>
<p class="t" style="left:81.0px;top:169.3px;width:3.0px;font-size:3.5px;background-image:linear-gradient(90deg,#484848,#756795,#756795);opacity:1.00">álg</p>
<p class="t" style="left:104.5px;top:169.4px;width:12.0px;font-size:3.5px;background-image:linear-gradient(90deg,#5a3175,#5a3175,#754c82,#67355a);opacity:1.00">superfici</p>
<p class="t" style="left:121.5px;top:169.4px;width:18.7px;font-size:3.5px;background-image:linear-gradient(90deg,#7588b0,#5a79b0);opacity:1.00">salida álgebr</p>
<p class="t" style="left:146.0px;top:169.4px;width:18.7px;font-size:3.5px;background-image:linear-gradient(90deg,#674c95,#674c95,#a37a44);opacity:1.00">planar barrio</p>
<p class="t" style="left:176.0px;top:169.4px;width:25.0px;font-size:3.5px;background-image:linear-gradient(90deg,#a3754c,#5a79b0);opacity:1.00">análisis catálog</p>
<p class="t" style="left:208.0px;top:169.4px;width:17.1px;font-size:3.5px;background-image:linear-gradient(90deg,#675a8e,#a38844);opacity:1.00">generalizaci</p>
<p class="t" style="left:240.5px;top:169.4px;width:7.7px;font-size:3.5px;background-image:linear-gradient(90deg,#a38844,#a38844,#5a79b0,#5a79b0);opacity:1.00">de tab</p>
<p class="t" style="left:272.0px;top:169.4px;width:16.4px;font-size:3.5px;background-image:linear-gradient(90deg,#675a8e,#675a8e);opacity:1.00">sobreposici</p>
<p class="t" style="left:303.5px;top:169.4px;width:6.4px;font-size:3.5px;background-image:linear-gradient(90deg,#675a8e,#5a4c75,#5a4c75,#a38851);opacity:1.00">imáge</p>
<div style="left:86.50px;top:173.00px;width:247.70px;height:5.90px;background:#ffffff;"></div>
<div style="left:80.00px;top:173.00px;width:6.50px;height:5.90px;background:#ededed;"></div>
<p class="t" style="left:81.0px;top:175.2px;width:3.0px;font-size:3.5px;background-image:linear-gradient(90deg,#956c51,#484848);opacity:1.00">con</p>
<div style="left:89.00px;top:175.00px;width:0.90px;height:1.80px;background:#6a8fd0;"></div>
<p class="t" style="left:104.5px;top:175.3px;width:12.0px;font-size:3.5px;background-image:linear-gradient(90deg,#88516c,#754c82,#754c82,#754c82);opacity:1.00">imágenes </p>
<p class="t" style="left:121.5px;top:175.3px;width:21.7px;font-size:3.5px;background-image:linear-gradient(90deg,#7588b0,#7588b0);opacity:1.00">método entidad</p>
<p class="t" style="left:146.0px;top:175.3px;width:19.9px;font-size:3.5px;background-image:linear-gradient(90deg,#a37a44,#674c95);opacity:1.00">local análisi</p>
<p class="t" style="left:176.0px;top:175.3px;width:20.1px;font-size:3.5px;background-image:linear-gradient(90deg,#675a8e,#a3754c,#a3754c,#5a79b0);opacity:1.00">editar catálo</p>
<p class="t" style="left:208.0px;top:175.3px;width:24.0px;font-size:3.5px;background-image:linear-gradient(90deg,#5a79b0,#675a8e,#675a8e,#a38844);opacity:1.00">herramientas dis</p>
<p class="t" style="left:240.5px;top:175.3px;width:7.1px;font-size:3.5px;background-image:linear-gradient(90deg,#5a79b0,#5a79b0,#5a79b0);opacity:1.00">compar</p>
<p class="t" style="left:272.0px;top:175.3px;width:16.1px;font-size:3.5px;background-image:linear-gradient(90deg,#a3754c,#675a8e,#a3754c);opacity:1.00">vecindad in</p>
<p class="t" style="left:303.5px;top:175.3px;width:7.3px;font-size:3.5px;background-image:linear-gradient(90deg,#675a8e,#5a4c75,#675a8e);opacity:1.00">insert</p>
<div style="left:86.50px;top:178.90px;width:247.70px;height:5.90px;background:#e9e9e9;"></div>
<div style="left:80.00px;top:178.90px;width:6.50px;height:5.90px;background:#ededed;"></div>
<p class="t" style="left:81.0px;top:181.1px;width:3.0px;font-size:3.5px;background-image:linear-gradient(90deg,#484848,#484848,#956c51);opacity:1.00">sup</p>
<div style="left:89.00px;top:180.90px;width:0.90px;height:1.80px;background:#333;"></div>
<p class="t" style="left:104.5px;top:181.2px;width:12.0px;font-size:3.5px;background-image:linear-gradient(90deg,#67355a,#88516c,#67355a,#88516c);opacity:1.00">datos álg</p>
<p class="t" style="left:121.5px;top:181.2px;width:20.2px;font-size:3.5px;background-image:linear-gradient(90deg,#a37a3e,#5a79b0,#a37a3e,#a37a3e);opacity:1.00">acumulación ta</p>
<p class="t" style="left:146.0px;top:181.2px;width:19.9px;font-size:3.5px;background-image:linear-gradient(90deg,#5a79b0,#674c95,#a37a44);opacity:1.00">provincia nom</p>
<p class="t" style="left:176.0px;top:181.2px;width:23.1px;font-size:3.5px;background-image:linear-gradient(90deg,#a3754c,#a3754c,#a3754c);opacity:1.00">vecindad distan</p>
<p class="t" style="left:208.0px;top:181.2px;width:23.6px;font-size:3.5px;background-image:linear-gradient(90deg,#a38844,#a38844,#675a8e,#675a8e);opacity:1.00">solar interpolac</p>
<p class="t" style="left:240.5px;top:181.2px;width:4.1px;font-size:3.5px;background-image:linear-gradient(90deg,#5a4c75,#5a79b0,#5a79b0,#a38844);opacity:1.00">herr</p>
<p class="t" style="left:272.0px;top:181.2px;width:21.1px;font-size:3.5px;background-image:linear-gradient(90deg,#675a8e,#a3754c);opacity:1.00">geoprocesamien</p>
<p class="t" style="left:303.5px;top:181.2px;width:6.3px;font-size:3.5px;background-image:linear-gradient(90deg,#a38851,#a38851,#675a8e);opacity:1.00">conve</p>
<div style="left:86.50px;top:184.80px;width:247.70px;height:5.90px;background:#ffffff;"></div>
<div style="left:80.00px;top:184.80px;width:6.50px;height:5.90px;background:#ededed;"></div>
<p class="t" style="left:81.0px;top:187.0px;width:3.0px;font-size:3.5px;background-image:linear-gradient(90deg,#756795,#484848,#484848,#756795);opacity:1.00">ori</p>
<p class="t" style="left:104.5px;top:187.1px;width:12.0px;font-size:3.5px;background-image:linear-gradient(90deg,#88516c,#67355a);opacity:1.00">local cap</p>
<p class="t" style="left:121.5px;top:187.1px;width:21.2px;font-size:3.5px;background-image:linear-gradient(90deg,#7588b0,#7588b0);opacity:1.00">geoprocesamien</p>
<p class="t" style="left:146.0px;top:187.1px;width:15.1px;font-size:3.5px;background-image:linear-gradient(90deg,#674c95,#5a79b0,#5a79b0);opacity:1.00">selección c</p>
<p class="t" style="left:176.0px;top:187.1px;width:16.3px;font-size:3.5px;background-image:linear-gradient(90deg,#a3754c,#5a79b0);opacity:1.00">barrios map</p>
<p class="t" style="left:208.0px;top:187.1px;width:22.1px;font-size:3.5px;background-image:linear-gradient(90deg,#a38844,#675a8e,#675a8e);opacity:1.00">local matemátic</p>
<p class="t" style="left:240.5px;top:187.1px;width:5.6px;font-size:3.5px;background-image:linear-gradient(90deg,#5a79b0,#5a79b0);opacity:1.00">zonal</p>
<p class="t" style="left:272.0px;top:187.1px;width:12.3px;font-size:3.5px;background-image:linear-gradient(90deg,#5a79b0,#675a8e,#675a8e);opacity:1.00">planar ex</p>
<p class="t" style="left:303.5px;top:187.1px;width:8.0px;font-size:3.5px;background-image:linear-gradient(90deg,#675a8e,#675a8e);opacity:1.00">campos</p>
<div style="left:86.50px;top:190.70px;width:247.70px;height:5.90px;background:#e9e9e9;"></div>
<div style="left:80.00px;top:190.70px;width:6.50px;height:5.90px;background:#ededed;"></div>
<p class="t" style="left:81.0px;top:192.9px;width:3.0px;font-size:3.5px;background-image:linear-gradient(90deg,#956c51,#484848,#756795,#484848);opacity:1.00">loc</p>
<div style="left:89.00px;top:192.70px;width:0.90px;height:1.80px;background:#c08040;"></div>
<p class="t" style="left:104.5px;top:193.0px;width:12.0px;font-size:3.5px;background-image:linear-gradient(90deg,#88516c,#754c82,#5a3175);opacity:1.00">solar cap</p>
<p class="t" style="left:121.5px;top:193.0px;width:21.5px;font-size:3.5px;background-image:linear-gradient(90deg,#5a79b0,#5a79b0);opacity:1.00">superficie nom</p>
<p class="t" style="left:146.0px;top:193.0px;width:16.6px;font-size:3.5px;background-image:linear-gradient(90deg,#5a79b0,#5a79b0,#a37a44,#5a79b0);opacity:1.00">sobreposici</p>
<p class="t" style="left:176.0px;top:193.0px;width:24.9px;font-size:3.5px;background-image:linear-gradient(90deg,#5a79b0,#a3754c,#a3754c);opacity:1.00">salida superfici</p>
<p class="t" style="left:208.0px;top:193.0px;width:18.5px;font-size:3.5px;background-image:linear-gradient(90deg,#5a79b0,#5a79b0,#a38844);opacity:1.00">barrios de g</p>
<p class="t" style="left:240.5px;top:193.0px;width:7.9px;font-size:3.5px;background-image:linear-gradient(90deg,#5a4c75,#5a4c75,#5a79b0,#5a79b0);opacity:1.00">genera</p>
<p class="t" style="left:272.0px;top:193.0px;width:23.4px;font-size:3.5px;background-image:linear-gradient(90deg,#5a79b0,#5a79b0,#675a8e,#5a79b0);opacity:1.00">compartir matem</p>
<p class="t" style="left:303.5px;top:193.0px;width:8.3px;font-size:3.5px;background-image:linear-gradient(90deg,#675a8e,#5a4c75,#5a4c75,#a38851);opacity:1.00">entida</p>
<div style="left:86.50px;top:196.60px;width:247.70px;height:5.90px;background:#ffffff;"></div>
<div style="left:80.00px;top:196.60px;width:6.50px;height:5.90px;background:#ededed;"></div>
<p class="t" style="left:81.0px;top:198.8px;width:3.0px;font-size:3.5px;background-image:linear-gradient(90deg,#756795,#756795,#484848);opacity:1.00">vis</p>
<div style="left:89.00px;top:198.60px;width:0.90px;height:1.80px;background:#e0b040;"></div>
<p class="t" style="left:104.5px;top:198.9px;width:12.0px;font-size:3.5px;background-image:linear-gradient(90deg,#67355a,#754c82,#5a3175);opacity:1.00">generaliz</p>
<p class="t" style="left:121.5px;top:198.9px;width:18.5px;font-size:3.5px;background-image:linear-gradient(90deg,#a37a3e,#5a79b0);opacity:1.00">municipio seg</p>
<p class="t" style="left:146.0px;top:198.9px;width:18.3px;font-size:3.5px;background-image:linear-gradient(90deg,#674c95,#674c95,#5a79b0,#5a79b0);opacity:1.00">superficie s</p>
<p class="t" style="left:176.0px;top:198.9px;width:25.6px;font-size:3.5px;background-image:linear-gradient(90deg,#675a8e,#675a8e,#5a79b0,#a3754c);opacity:1.00">código generaliza</p>
<p class="t" style="left:208.0px;top:198.9px;width:18.4px;font-size:3.5px;background-image:linear-gradient(90deg,#5a79b0,#5a79b0);opacity:1.00">origen herra</p>
<p class="t" style="left:240.5px;top:198.9px;width:7.7px;font-size:3.5px;background-image:linear-gradient(90deg,#5a4c75,#a38844,#5a79b0,#a38844);opacity:1.00">nombre</p>
<p class="t" style="left:272.0px;top:198.9px;width:23.3px;font-size:3.5px;background-image:linear-gradient(90deg,#a3754c,#5a79b0);opacity:1.00">multivariante d</p>
<p class="t" style="left:303.5px;top:198.9px;width:7.2px;font-size:3.5px;background-image:linear-gradient(90deg,#5a4c75,#5a4c75,#675a8e);opacity:1.00">álgebr</p>
<div style="left:86.50px;top:202.50px;width:247.70px;height:5.90px;background:#e9e9e9;"></div>
<div style="left:80.00px;top:202.50px;width:6.50px;height:5.90px;background:#ededed;"></div>
<p class="t" style="left:81.0px;top:204.8px;width:3.0px;font-size:3.5px;background-image:linear-gradient(90deg,#956c51,#756795,#756795);opacity:1.00">con</p>
<p class="t" style="left:104.5px;top:204.8px;width:12.0px;font-size:3.5px;background-image:linear-gradient(90deg,#5a3175,#88516c);opacity:1.00">editar re</p>
<p class="t" style="left:121.5px;top:204.8px;width:19.5px;font-size:3.5px;background-image:linear-gradient(90deg,#7588b0,#5a79b0,#7588b0,#7588b0);opacity:1.00">álgebra capa </p>
<p class="t" style="left:146.0px;top:204.8px;width:18.2px;font-size:3.5px;background-image:linear-gradient(90deg,#a37a44,#a37a44,#5a79b0,#5a79b0);opacity:1.00">superficie e</p>
<p class="t" style="left:176.0px;top:204.8px;width:19.4px;font-size:3.5px;background-image:linear-gradient(90deg,#a3754c,#a3754c);opacity:1.00">editar mapa g</p>
<p class="t" style="left:208.0px;top:204.8px;width:24.0px;font-size:3.5px;background-image:linear-gradient(90deg,#a38844,#a38844,#a38844,#5a79b0);opacity:1.00">conversión catál</p>
<p class="t" style="left:240.5px;top:204.8px;width:5.5px;font-size:3.5px;background-image:linear-gradient(90deg,#5a4c75,#5a79b0,#5a79b0);opacity:1.00">espac</p>
<p class="t" style="left:272.0px;top:204.8px;width:10.4px;font-size:3.5px;background-image:linear-gradient(90deg,#675a8e,#a3754c,#a3754c);opacity:1.00">multivar</p>
<p class="t" style="left:303.5px;top:204.8px;width:6.3px;font-size:3.5px;background-image:linear-gradient(90deg,#5a4c75,#675a8e);opacity:1.00">orige</p>
<div style="left:86.50px;top:208.40px;width:247.70px;height:5.90px;background:#ffffff;"></div>
<div style="left:80.00px;top:208.40px;width:6.50px;height:5.90px;background:#ededed;"></div>
<p class="t" style="left:81.0px;top:210.6px;width:3.0px;font-size:3.5px;background-image:linear-gradient(90deg,#756795,#956c51,#956c51);opacity:1.00">pob</p>
<div style="left:89.00px;top:210.40px;width:0.90px;height:1.80px;background:#c08040;"></div>
<p class="t" style="left:104.5px;top:210.7px;width:12.0px;font-size:3.5px;background-image:linear-gradient(90deg,#5a3175,#67355a,#88516c,#5a3175);opacity:1.00">mapa mapa</p>
<p class="t" style="left:121.5px;top:210.7px;width:18.0px;font-size:3.5px;background-image:linear-gradient(90deg,#7588b0,#7588b0);opacity:1.00">solar superf</p>
<p class="t" style="left:146.0px;top:210.7px;width:15.5px;font-size:3.5px;background-image:linear-gradient(90deg,#5a79b0,#5a79b0,#a37a44);opacity:1.00">catálogo da</p>
<p class="t" style="left:176.0px;top:210.7px;width:22.4px;font-size:3.5px;background-image:linear-gradient(90deg,#675a8e,#5a79b0,#a3754c,#5a79b0);opacity:1.00">compartir capa </p>
<p class="t" style="left:208.0px;top:210.7px;width:20.7px;font-size:3.5px;background-image:linear-gradient(90deg,#a38844,#5a79b0,#5a79b0,#5a79b0);opacity:1.00">álgebra ráster</p>
<p class="t" style="left:240.5px;top:210.7px;width:6.3px;font-size:3.5px;background-image:linear-gradient(90deg,#a38844,#a38844,#5a4c75,#a38844);opacity:1.00">edita</p>
<p class="t" style="left:272.0px;top:210.7px;width:14.8px;font-size:3.5px;background-image:linear-gradient(90deg,#a3754c,#675a8e);opacity:1.00">extracción</p>
<p class="t" style="left:303.5px;top:210.7px;width:8.9px;font-size:3.5px;background-image:linear-gradient(90deg,#a38851,#675a8e);opacity:1.00">tabla s</p>
<div style="left:86.50px;top:214.30px;width:247.70px;height:5.90px;background:#9ff3f8;"></div>
<div style="left:80.00px;top:214.30px;width:6.50px;height:5.90px;background:#e2ecf4;"></div>
<div style="left:80.00px;top:214.30px;width:0.80px;height:5.90px;background:#2b7bd2;"></div>
<p class="t" style="left:81.0px;top:216.5px;width:3.0px;font-size:3.5px;background-image:linear-gradient(90deg,#756795,#956c51,#756795);opacity:1.00">edi</p>
<div style="left:89.00px;top:216.30px;width:0.90px;height:1.80px;background:#e0b040;"></div>
<p class="t" style="left:104.5px;top:216.6px;width:12.0px;font-size:3.5px;background-image:linear-gradient(90deg,#88516c,#67355a,#5a3175);opacity:1.00">origen ba</p>
<p class="t" style="left:121.5px;top:216.6px;width:18.7px;font-size:3.5px;background-image:linear-gradient(90deg,#5a79b0,#7588b0,#5a79b0,#a37a3e);opacity:1.00">espacial extr</p>
<p class="t" style="left:146.0px;top:216.6px;width:16.2px;font-size:3.5px;background-image:linear-gradient(90deg,#5a79b0,#5a79b0);opacity:1.00">vecindad po</p>
<p class="t" style="left:176.0px;top:216.6px;width:18.9px;font-size:3.5px;background-image:linear-gradient(90deg,#675a8e,#5a79b0,#675a8e,#a3754c);opacity:1.00">dirección cap</p>
<p class="t" style="left:208.0px;top:216.6px;width:23.5px;font-size:3.5px;background-image:linear-gradient(90deg,#675a8e,#675a8e,#5a79b0);opacity:1.00">generalización </p>
<p class="t" style="left:240.5px;top:216.6px;width:5.4px;font-size:3.5px;background-image:linear-gradient(90deg,#a38844,#5a4c75);opacity:1.00">códig</p>
<p class="t" style="left:272.0px;top:216.6px;width:19.0px;font-size:3.5px;background-image:linear-gradient(90deg,#a3754c,#675a8e,#a3754c);opacity:1.00">dirección ent</p>
<p class="t" style="left:303.5px;top:216.6px;width:6.9px;font-size:3.5px;background-image:linear-gradient(90deg,#a38851,#a38851);opacity:1.00">salida</p>
<div style="left:86.50px;top:220.20px;width:247.70px;height:5.90px;background:#ffffff;"></div>
<div style="left:80.00px;top:220.20px;width:6.50px;height:5.90px;background:#ededed;"></div>
<p class="t" style="left:81.0px;top:222.4px;width:3.0px;font-size:3.5px;background-image:linear-gradient(90deg,#756795,#756795,#956c51,#484848);opacity:1.00">nom</p>
<p class="t" style="left:104.5px;top:222.5px;width:12.0px;font-size:3.5px;background-image:linear-gradient(90deg,#67355a,#67355a,#5a3175,#88516c);opacity:1.00">segmentac</p>
<p class="t" style="left:121.5px;top:222.5px;width:18.4px;font-size:3.5px;background-image:linear-gradient(90deg,#5a79b0,#5a79b0,#5a79b0,#a37a3e);opacity:1.00">campos sobre</p>
<p class="t" style="left:146.0px;top:222.5px;width:15.5px;font-size:3.5px;background-image:linear-gradient(90deg,#674c95,#674c95);opacity:1.00">imágenes re</p>
<p class="t" style="left:176.0px;top:222.5px;width:25.4px;font-size:3.5px;background-image:linear-gradient(90deg,#a3754c,#a3754c);opacity:1.00">insertar mapa gen</p>
<p class="t" style="left:208.0px;top:222.5px;width:22.4px;font-size:3.5px;background-image:linear-gradient(90deg,#a38844,#a38844,#a38844,#675a8e);opacity:1.00">provincia tabla</p>
<p class="t" style="left:240.5px;top:222.5px;width:5.5px;font-size:3.5px;background-image:linear-gradient(90deg,#5a4c75,#a38844,#5a79b0);opacity:1.00">salid</p>
<p class="t" style="left:272.0px;top:222.5px;width:20.3px;font-size:3.5px;background-image:linear-gradient(90deg,#675a8e,#a3754c);opacity:1.00">segmentación n</p>
<p class="t" style="left:303.5px;top:222.5px;width:8.0px;font-size:3.5px;background-image:linear-gradient(90deg,#a38851,#675a8e);opacity:1.00">provin</p>
<div style="left:86.50px;top:220.20px;width:247.70px;height:0.60px;background:#c0c0c0;"></div>
<div style="left:86.50px;top:226.10px;width:247.70px;height:5.90px;background:#e9e9e9;"></div>
<div style="left:80.00px;top:226.10px;width:6.50px;height:5.90px;background:#ededed;"></div>
<p class="t" style="left:81.0px;top:228.3px;width:3.0px;font-size:3.5px;background-image:linear-gradient(90deg,#956c51,#484848,#484848);opacity:1.00">sob</p>
<div style="left:89.00px;top:228.10px;width:0.90px;height:1.80px;background:#6a8fd0;"></div>
<p class="t" style="left:104.5px;top:228.4px;width:12.0px;font-size:3.5px;background-image:linear-gradient(90deg,#5a3175,#88516c,#754c82);opacity:1.00">tabla con</p>
<p class="t" style="left:121.5px;top:228.4px;width:19.6px;font-size:3.5px;background-image:linear-gradient(90deg,#a37a3e,#5a79b0,#7588b0);opacity:1.00">mapa població</p>
<p class="t" style="left:146.0px;top:228.4px;width:21.9px;font-size:3.5px;background-image:linear-gradient(90deg,#a37a44,#5a79b0,#a37a44);opacity:1.00">álgebra mapa ve</p>
<p class="t" style="left:176.0px;top:228.4px;width:27.5px;font-size:3.5px;background-image:linear-gradient(90deg,#5a79b0,#a3754c,#a3754c);opacity:1.00">clasificación anál</p>
<p class="t" style="left:208.0px;top:228.4px;width:21.1px;font-size:3.5px;background-image:linear-gradient(90deg,#a38844,#675a8e);opacity:1.00">datos població</p>
<p class="t" style="left:240.5px;top:228.4px;width:7.5px;font-size:3.5px;background-image:linear-gradient(90deg,#5a79b0,#a38844,#5a4c75,#a38844);opacity:1.00">distan</p>
<p class="t" style="left:272.0px;top:228.4px;width:17.4px;font-size:3.5px;background-image:linear-gradient(90deg,#5a79b0,#5a79b0);opacity:1.00">conversión á</p>
<p class="t" style="left:303.5px;top:228.4px;width:7.1px;font-size:3.5px;background-image:linear-gradient(90deg,#675a8e,#5a4c75,#a38851,#5a4c75);opacity:1.00">direcc</p>
<div style="left:86.50px;top:232.00px;width:247.70px;height:5.90px;background:#ffffff;"></div>
<div style="left:80.00px;top:232.00px;width:6.50px;height:5.90px;background:#ededed;"></div>
<p class="t" style="left:81.0px;top:234.2px;width:3.0px;font-size:3.5px;background-image:linear-gradient(90deg,#484848,#956c51);opacity:1.00">bar</p>
<div style="left:89.00px;top:234.00px;width:0.90px;height:1.80px;background:#6a8fd0;"></div>
<p class="t" style="left:104.5px;top:234.3px;width:12.0px;font-size:3.5px;background-image:linear-gradient(90deg,#5a3175,#88516c);opacity:1.00">clasifica</p>
<p class="t" style="left:121.5px;top:234.3px;width:21.7px;font-size:3.5px;background-image:linear-gradient(90deg,#a37a3e,#a37a3e,#5a79b0);opacity:1.00">álgebra barrio</p>
<p class="t" style="left:146.0px;top:234.3px;width:16.7px;font-size:3.5px;background-image:linear-gradient(90deg,#674c95,#674c95);opacity:1.00">datos plana</p>
<p class="t" style="left:176.0px;top:234.3px;width:21.9px;font-size:3.5px;background-image:linear-gradient(90deg,#675a8e,#a3754c,#5a79b0,#5a79b0);opacity:1.00">reclasificación</p>
<p class="t" style="left:208.0px;top:234.3px;width:20.1px;font-size:3.5px;background-image:linear-gradient(90deg,#5a79b0,#a38844,#675a8e,#a38844);opacity:1.00">dirección pro</p>
<p class="t" style="left:240.5px;top:234.3px;width:5.6px;font-size:3.5px;background-image:linear-gradient(90deg,#5a4c75,#a38844);opacity:1.00">geopr</p>
<p class="t" style="left:272.0px;top:234.3px;width:21.1px;font-size:3.5px;background-image:linear-gradient(90deg,#5a79b0,#5a79b0,#a3754c);opacity:1.00">zonal superfic</p>
<p class="t" style="left:303.5px;top:234.3px;width:6.2px;font-size:3.5px;background-image:linear-gradient(90deg,#a38851,#5a4c75,#a38851,#a38851);opacity:1.00">de có</p>
<div style="left:174.40px;top:155.20px;width:0.90px;height:82.70px;background:#c8c8c8;"></div>
<div style="left:86.30px;top:155.20px;width:0.50px;height:82.70px;background:#d8d8d8;"></div>
<div style="left:334.20px;top:155.20px;width:39.00px;height:82.60px;background:#ffffff;"></div>
<div style="left:334.20px;top:155.20px;width:0.60px;height:82.70px;background:#d0d0d0;"></div>
<div style="left:373.50px;top:156.00px;width:1.60px;height:81.00px;background:#ececec;"></div>
<div style="left:373.50px;top:180.00px;width:1.60px;height:21.50px;background:#7ab4e4;"></div>
<div style="left:80.00px;top:237.80px;width:296.00px;height:8.20px;background:#f4f4f4;"></div>
<div style="left:80.80px;top:238.80px;width:3.60px;height:3.60px;background:#9cc0e8;border:0.5px solid #5a8ac0;box-sizing:border-box"></div>
<div style="left:86.50px;top:240.00px;width:2.00px;height:0.80px;background:#555;"></div>
<div style="left:92.00px;top:239.50px;width:0.80px;height:2.00px;background:#555;"></div>
<div style="left:96.00px;top:239.50px;width:0.80px;height:2.00px;background:#555;"></div>
<p class="t" style="left:101.0px;top:240.3px;width:22.0px;font-size:3.5px;background-image:linear-gradient(90deg,#4c4c75,#4c4c75);opacity:1.00">editar segmenta</p>
<p class="t" style="left:284.0px;top:240.2px;width:10.0px;font-size:3.1px;background-image:linear-gradient(90deg,#757595,#a3a3b0,#a3a3b0);opacity:0.96">distanci</p>
<p class="t" style="left:298.0px;top:239.8px;width:8.0px;font-size:3.1px;background-image:linear-gradient(90deg,#90909e,#90909e);opacity:0.96">matemát</p>
<div style="left:315.00px;top:240.80px;width:26.00px;height:0.70px;background:#999;"></div>
<div style="left:328.00px;top:239.50px;width:0.90px;height:2.60px;background:#555;"></div>
<p class="t" style="left:346.0px;top:240.2px;width:8.0px;font-size:3.5px;background-image:linear-gradient(90deg,#5a79b0,#5a79b0,#5a79b0,#4c4c75);opacity:1.00">origen</p>
<div style="left:361.00px;top:240.20px;width:1.50px;height:1.50px;background:#666;"></div>
<div style="left:369.50px;top:239.00px;width:3.00px;height:3.60px;background:#3a8ad8;opacity:0.7"></div>
</div>
<div style="left:378.20px;top:37.30px;width:76.80px;height:209.00px;background:#f6f7f7;border:0.6px solid #d4d4d4;box-sizing:border-box"></div>
<div style="left:378.20px;top:37.00px;width:76.50px;height:1.20px;background:#3a8ad8;"></div>
<p class="t" style="left:380.5px;top:40.9px;width:27.8px;font-size:3.5px;background-image:linear-gradient(90deg,#3167b0,#675a8e,#675a8e);opacity:1.00">compartir espacial</p>
<div style="left:438.50px;top:41.20px;width:1.50px;height:0.80px;background:#888;"></div>
<div style="left:442.50px;top:40.50px;width:0.80px;height:2.00px;background:#888;"></div>
<div style="left:446.00px;top:40.50px;width:1.80px;height:1.80px;background:#888;"></div>
<div style="left:383.00px;top:46.00px;width:69.00px;height:6.20px;background:#ffffff;"></div>
<div style="left:384.00px;top:51.60px;width:60.00px;height:0.60px;background:#9a9a9a;"></div>
<div style="left:379.50px;top:47.20px;width:1.40px;height:3.00px;background:#bbb;"></div>
<p class="t" style="left:388.0px;top:48.6px;width:25.0px;font-size:3.5px;background-image:linear-gradient(90deg,#5a4c8e,#5a4c8e,#314c95,#3e3175);opacity:1.00">mapa mapa interp</p>
<div style="left:439.00px;top:47.20px;width:2.00px;height:2.00px;background:#777;border-radius:50%"></div>
<div style="left:448.50px;top:46.50px;width:2.00px;height:4.00px;background:#888;"></div>
<p class="t" style="left:382.0px;top:56.9px;width:10.0px;font-size:3.1px;background-image:linear-gradient(90deg,#a3754c,#314c95,#314c95,#a3754c);opacity:1.00">vecindad</p>
<p class="t" style="left:396.0px;top:56.9px;width:27.0px;font-size:3.1px;background-image:linear-gradient(90deg,#675a8e,#675a8e);opacity:1.00">mapa distancia segme</p>
<div style="left:395.00px;top:59.20px;width:31.00px;height:0.90px;background:#2b7bd2;"></div>
<div style="left:452.20px;top:62.00px;width:1.40px;height:178.00px;background:#e9e9e9;"></div>
<div style="left:381.50px;top:63.90px;width:0.80px;height:1.30px;background:#999;"></div>
<div style="left:384.50px;top:63.30px;width:4.00px;height:3.00px;background:#d5603a;"></div>
<div style="left:385.00px;top:64.30px;width:3.00px;height:0.60px;background:#f4c0a0;"></div>
<p class="t" style="left:390.0px;top:64.2px;width:50.0px;font-size:3.5px;background-image:linear-gradient(90deg,#5a4c95,#a36c3e);opacity:0.80">nombre distancia compartir herr</p>
<div style="left:381.50px;top:70.10px;width:0.80px;height:1.30px;background:#999;"></div>
<div style="left:384.50px;top:69.50px;width:4.00px;height:3.00px;background:#d5603a;"></div>
<div style="left:385.00px;top:70.50px;width:3.00px;height:0.60px;background:#f4c0a0;"></div>
<p class="t" style="left:390.0px;top:70.4px;width:49.9px;font-size:3.5px;background-image:linear-gradient(90deg,#675a8e,#a36c3e);opacity:0.80">geoprocesamiento compartir catá</p>
<div style="left:381.50px;top:76.30px;width:0.80px;height:1.30px;background:#999;"></div>
<div style="left:384.50px;top:75.70px;width:4.00px;height:3.00px;background:#d5603a;"></div>
<div style="left:385.00px;top:76.70px;width:3.00px;height:0.60px;background:#f4c0a0;"></div>
<p class="t" style="left:390.0px;top:76.6px;width:53.7px;font-size:3.5px;background-image:linear-gradient(90deg,#675a8e,#a36c3e,#a36c3e,#a36c3e);opacity:0.80">selección distancia barrios de ge</p>
<div style="left:381.50px;top:82.50px;width:0.80px;height:1.30px;background:#999;"></div>
<div style="left:384.50px;top:81.90px;width:4.00px;height:3.00px;background:#d5603a;"></div>
<div style="left:385.00px;top:82.90px;width:3.00px;height:0.60px;background:#f4c0a0;"></div>
<p class="t" style="left:390.0px;top:82.8px;width:35.1px;font-size:3.5px;background-image:linear-gradient(90deg,#a36c3e,#5a4c95,#675a8e,#5a4c75);opacity:0.80">distancia hidrología m</p>
<div style="left:381.50px;top:88.70px;width:0.80px;height:1.30px;background:#999;"></div>
<div style="left:384.50px;top:88.10px;width:4.00px;height:3.00px;background:#d5603a;"></div>
<div style="left:385.00px;top:89.10px;width:3.00px;height:0.60px;background:#f4c0a0;"></div>
<p class="t" style="left:390.0px;top:89.0px;width:56.9px;font-size:3.5px;background-image:linear-gradient(90deg,#5a79b0,#7595be);opacity:0.80">provincia población superficie gene</p>
<div style="left:381.50px;top:94.90px;width:0.80px;height:1.30px;background:#999;"></div>
<div style="left:384.50px;top:94.30px;width:4.00px;height:3.00px;background:#d5603a;"></div>
<div style="left:385.00px;top:95.30px;width:3.00px;height:0.60px;background:#f4c0a0;"></div>
<p class="t" style="left:390.0px;top:95.2px;width:44.1px;font-size:3.5px;background-image:linear-gradient(90deg,#bea36c,#7595be,#7595be,#5a79b0);opacity:0.80">acumulación campos álgebra d</p>
<div style="left:381.50px;top:101.10px;width:0.80px;height:1.30px;background:#999;"></div>
<div style="left:384.50px;top:100.50px;width:4.00px;height:3.00px;background:#d5603a;"></div>
<div style="left:385.00px;top:101.50px;width:3.00px;height:0.60px;background:#f4c0a0;"></div>
<p class="t" style="left:390.0px;top:101.4px;width:49.9px;font-size:3.5px;background-image:linear-gradient(90deg,#bea36c,#7595be);opacity:0.80">editar proyecto mapa campos ins</p>
<div style="left:381.50px;top:107.30px;width:0.80px;height:1.30px;background:#999;"></div>
<div style="left:384.50px;top:106.70px;width:4.00px;height:3.00px;background:#d5603a;"></div>
<div style="left:385.00px;top:107.70px;width:3.00px;height:0.60px;background:#f4c0a0;"></div>
<p class="t" style="left:390.0px;top:107.6px;width:50.2px;font-size:3.5px;background-image:linear-gradient(90deg,#675a8e,#a36c3e,#5a4c95,#a36c3e);opacity:0.80">hidrología planar de zonal álge</p>
<div style="left:381.50px;top:113.50px;width:0.80px;height:1.30px;background:#999;"></div>
<div style="left:384.50px;top:112.90px;width:4.00px;height:3.00px;background:#d5603a;"></div>
<div style="left:385.00px;top:113.90px;width:3.00px;height:0.60px;background:#f4c0a0;"></div>
<p class="t" style="left:390.0px;top:113.8px;width:55.7px;font-size:3.5px;background-image:linear-gradient(90deg,#5a4c95,#5a4c75,#5a4c95);opacity:0.80">análisis superficie ráster comparti</p>
<div style="left:381.50px;top:119.70px;width:0.80px;height:1.30px;background:#999;"></div>
<div style="left:384.50px;top:119.10px;width:4.00px;height:3.00px;background:#d5603a;"></div>
<div style="left:385.00px;top:120.10px;width:3.00px;height:0.60px;background:#f4c0a0;"></div>
<p class="t" style="left:390.0px;top:120.0px;width:34.8px;font-size:3.5px;background-image:linear-gradient(90deg,#a36c3e,#a36c3e,#a36c3e,#675a8e);opacity:0.80">barrios código campos </p>
<div style="left:381.50px;top:125.90px;width:0.80px;height:1.30px;background:#999;"></div>
<div style="left:384.50px;top:125.30px;width:4.00px;height:3.00px;background:#d5603a;"></div>
<div style="left:385.00px;top:126.30px;width:3.00px;height:0.60px;background:#f4c0a0;"></div>
<p class="t" style="left:390.0px;top:126.2px;width:37.7px;font-size:3.5px;background-image:linear-gradient(90deg,#675a8e,#4c4c88);opacity:0.80">herramientas geoprocesam</p>
<div style="left:381.50px;top:132.10px;width:0.80px;height:1.30px;background:#999;"></div>
<div style="left:384.50px;top:131.50px;width:4.00px;height:3.00px;background:#d5603a;"></div>
<div style="left:385.00px;top:132.50px;width:3.00px;height:0.60px;background:#f4c0a0;"></div>
<p class="t" style="left:390.0px;top:132.4px;width:49.0px;font-size:3.5px;background-image:linear-gradient(90deg,#675a8e,#5a4c75);opacity:0.80">mapa generalización catálogo pr</p>
<div style="left:381.50px;top:138.30px;width:0.80px;height:1.30px;background:#999;"></div>
<div style="left:384.50px;top:137.70px;width:4.00px;height:3.00px;background:#d5603a;"></div>
<div style="left:385.00px;top:138.70px;width:3.00px;height:0.60px;background:#f4c0a0;"></div>
<p class="t" style="left:390.0px;top:138.6px;width:44.7px;font-size:3.5px;background-image:linear-gradient(90deg,#675a8e,#675a8e);opacity:0.80">herramientas método datos ed</p>
<div style="left:386.00px;top:144.30px;width:0.80px;height:1.30px;background:#999;"></div>
<div style="left:388.80px;top:143.50px;width:1.80px;height:2.60px;background:#e8a060;opacity:0.75"></div>
<div style="left:388.60px;top:145.80px;width:2.60px;height:0.60px;background:#d06040;opacity:0.8"></div>
<p class="t" style="left:392.0px;top:144.5px;width:18.6px;font-size:3.5px;background-image:linear-gradient(90deg,#5a79b0,#a38851,#675a8e,#a38851);opacity:0.80">multivariante</p>
<div style="left:386.00px;top:150.40px;width:0.80px;height:1.30px;background:#999;"></div>
<div style="left:388.80px;top:149.60px;width:1.80px;height:2.60px;background:#e8a060;opacity:0.75"></div>
<div style="left:388.60px;top:151.90px;width:2.60px;height:0.60px;background:#d06040;opacity:0.8"></div>
<p class="t" style="left:392.0px;top:150.6px;width:13.7px;font-size:3.5px;background-image:linear-gradient(90deg,#675a8e,#5a79b0);opacity:0.80">código pro</p>
<div style="left:386.00px;top:156.40px;width:0.80px;height:1.30px;background:#999;"></div>
<div style="left:388.80px;top:155.60px;width:1.80px;height:2.60px;background:#8a8a8a;opacity:0.75"></div>
<div style="left:388.60px;top:157.90px;width:2.60px;height:0.60px;background:#d06040;opacity:0.8"></div>
<p class="t" style="left:392.0px;top:156.6px;width:18.7px;font-size:3.5px;background-image:linear-gradient(90deg,#675a8e,#5a79b0,#675a8e);opacity:0.80">interpolación</p>
<div style="left:386.00px;top:162.50px;width:0.80px;height:1.30px;background:#999;"></div>
<div style="left:388.80px;top:161.70px;width:1.80px;height:2.60px;background:#e8a060;opacity:0.75"></div>
<div style="left:388.60px;top:164.00px;width:2.60px;height:0.60px;background:#d06040;opacity:0.8"></div>
<p class="t" style="left:392.0px;top:162.7px;width:18.1px;font-size:3.5px;background-image:linear-gradient(90deg,#756795,#5a79b0,#756795,#756795);opacity:0.80">datos tabla </p>
<div style="left:386.00px;top:168.40px;width:0.80px;height:1.30px;background:#999;"></div>
<div style="left:388.80px;top:167.60px;width:1.80px;height:2.60px;background:#8a8a8a;opacity:0.75"></div>
<div style="left:388.60px;top:169.90px;width:2.60px;height:0.60px;background:#d06040;opacity:0.8"></div>
<p class="t" style="left:392.0px;top:168.6px;width:12.9px;font-size:3.5px;background-image:linear-gradient(90deg,#756795,#a35f31,#675a8e);opacity:0.80">clasifica</p>
<div style="left:386.00px;top:172.40px;width:64.50px;height:5.90px;background:#cde0f2;border:0.8px solid #3a8ad8;box-sizing:border-box"></div>
<div style="left:386.00px;top:173.30px;width:0.80px;height:1.30px;background:#999;"></div>
<div style="left:388.80px;top:172.50px;width:1.80px;height:2.60px;background:#c85a30;opacity:0.75"></div>
<div style="left:388.60px;top:174.80px;width:2.60px;height:0.60px;background:#d06040;opacity:0.8"></div>
<p class="t" style="left:392.0px;top:173.5px;width:10.0px;font-size:3.5px;background-image:linear-gradient(90deg,#a35f31,#5a79b0);opacity:0.80">compart</p>
<div style="left:390.00px;top:180.40px;width:3.00px;height:2.60px;background:#d06040;"></div>
<p class="t" style="left:394.5px;top:181.3px;width:10.0px;font-size:3.5px;background-image:linear-gradient(90deg,#5a4c95,#5a4c95,#5a4c95);opacity:1.00">matemát</p>
<div style="left:390.00px;top:185.10px;width:60.50px;height:6.00px;background:#cde0f2;"></div>
<div style="left:390.00px;top:190.30px;width:60.50px;height:0.90px;background:#3a8ad8;"></div>
<div style="left:391.00px;top:186.80px;width:2.50px;height:2.50px;background:#7a7a7a;"></div>
<p class="t" style="left:395.0px;top:187.3px;width:32.0px;font-size:3.5px;background-image:linear-gradient(90deg,#4c4c75,#4c4c75);opacity:1.00">reclasificación acumu</p>
<div style="left:391.00px;top:211.20px;width:2.60px;height:2.80px;background:#9a9a9a;"></div>
<p class="t" style="left:395.0px;top:212.2px;width:26.9px;font-size:3.5px;background-image:linear-gradient(90deg,#a35f31,#675a8e);opacity:0.96">datos interpolaci</p>
<div style="left:391.00px;top:217.00px;width:2.60px;height:2.80px;background:#9a9a9a;"></div>
<p class="t" style="left:395.0px;top:218.1px;width:27.6px;font-size:3.5px;background-image:linear-gradient(90deg,#5a79b0,#675a8e,#a35f31);opacity:0.96">segmentación entid</p>
<div style="left:386.00px;top:224.60px;width:0.80px;height:1.30px;background:#999;"></div>
<div style="left:388.80px;top:223.80px;width:1.80px;height:2.60px;background:#c85a30;opacity:0.75"></div>
<div style="left:388.60px;top:226.10px;width:2.60px;height:0.60px;background:#d06040;opacity:0.8"></div>
<p class="t" style="left:392.0px;top:224.8px;width:14.0px;font-size:3.5px;background-image:linear-gradient(90deg,#675a8e,#a38851,#675a8e);opacity:0.80">distancia </p>
<div style="left:386.00px;top:230.30px;width:0.80px;height:1.30px;background:#999;"></div>
<div style="left:388.80px;top:229.50px;width:1.80px;height:2.60px;background:#c85a30;opacity:0.75"></div>
<div style="left:388.60px;top:231.80px;width:2.60px;height:0.60px;background:#d06040;opacity:0.8"></div>
<p class="t" style="left:392.0px;top:230.5px;width:18.0px;font-size:3.5px;background-image:linear-gradient(90deg,#a38851,#5a79b0);opacity:0.80">proyecto pla</p>
<div style="left:452.00px;top:62.00px;width:1.50px;height:176.00px;background:#ececec;"></div>
<div style="left:452.00px;top:98.50px;width:1.50px;height:79.10px;background:#7ab4e4;"></div>
<div style="left:380.00px;top:238.00px;width:70.00px;height:1.30px;background:#e4e4e4;"></div>
<div style="left:380.50px;top:237.80px;width:56.00px;height:1.60px;background:#7ab4e4;"></div>
<div style="left:378.50px;top:240.20px;width:76.00px;height:6.00px;background:#f2f2f2;"></div>
<p class="t" style="left:382.6px;top:242.1px;width:7.0px;font-size:3.5px;background-image:linear-gradient(90deg,#a35f44,#885a75,#a35f44,#a35f44);opacity:1.00">segmen</p>
<div style="left:392.50px;top:240.70px;width:26.00px;height:5.00px;background:#fcfcfc;"></div>
<div style="left:392.30px;top:240.70px;width:0.60px;height:5.00px;background:#bbb;"></div>
<p class="t" style="left:394.0px;top:242.1px;width:20.6px;font-size:3.5px;background-image:linear-gradient(90deg,#5a79b0,#8295be,#5a79b0);opacity:1.00">álgebra anális</p>
<div style="left:392.50px;top:245.20px;width:26.00px;height:0.60px;background:#3a8ad8;"></div>
<div style="left:359.00px;top:193.40px;width:95.50px;height:18.30px;background:#ffffff;box-shadow:0 0 1.2px rgba(0,0,0,0.4)"></div>
<p class="t" style="left:361.5px;top:195.8px;width:60.0px;font-size:3.1px;background-image:linear-gradient(90deg,#5a79b0,#a36c3e,#a36c3e);opacity:0.88">barrios distancia capa municipio álgebra m</p>
<p class="t" style="left:361.5px;top:200.3px;width:87.0px;font-size:3.1px;background-image:linear-gradient(90deg,#a36c3e,#be8836,#5a79b0,#5a79b0);opacity:0.88">barrios salida población imágenes análisis provincia datos e</p>
<p class="t" style="left:361.5px;top:203.3px;width:90.0px;font-size:3.1px;background-image:linear-gradient(90deg,#5a4c8e,#5a4c8e,#5a79b0);opacity:0.88">superficie ráster insertar barrios distancia código superficie</p>
<p class="t" style="left:361.5px;top:206.3px;width:58.0px;font-size:3.1px;background-image:linear-gradient(90deg,#be8836,#5a79b0,#5a4c8e,#5a4c8e);opacity:0.88">imágenes código solar ráster insertar mu</p>
<div style="left:0.00px;top:246.50px;width:455.00px;height:9.50px;background:#0d1117;"></div>
<div style="left:3.80px;top:249.20px;width:2.00px;height:1.80px;background:#d8d8d8;"></div>
<div style="left:6.20px;top:249.20px;width:2.00px;height:1.80px;background:#d8d8d8;"></div>
<div style="left:3.80px;top:251.40px;width:2.00px;height:1.80px;background:#d8d8d8;"></div>
<div style="left:6.20px;top:251.40px;width:2.00px;height:1.80px;background:#d8d8d8;"></div>
<div style="left:16.80px;top:251.50px;width:0.90px;height:0.90px;background:#bbb;"></div>
<div style="left:24.00px;top:250.00px;width:2.50px;height:0.80px;background:#888;"></div>
<div style="left:24.00px;top:251.50px;width:2.50px;height:0.80px;background:#888;"></div>
<svg style="position:absolute;left:39px;top:248.5px" width="6" height="6"><circle cx="3" cy="3" r="2.6" fill="#e04a2a"/><path d="M3 3 L0.6 4.4 A2.6 2.6 0 0 0 4.5 5.2 Z" fill="#f2c030"/><path d="M3 3 L4.5 5.2 A2.6 2.6 0 0 0 5.6 2.6 Z" fill="#3aa050"/><circle cx="3" cy="3" r="1.1" fill="#3a7ad8" stroke="#fff" stroke-width="0.4"/></svg>
<div style="left:51.00px;top:249.20px;width:5.20px;height:4.20px;background:#f2c84a;"></div>
<div style="left:51.00px;top:251.20px;width:5.20px;height:2.20px;background:#e0a830;"></div>
<div style="left:52.00px;top:250.50px;width:3.00px;height:0.70px;background:#3a8ad8;"></div>
<div style="left:59.20px;top:246.50px;width:10.50px;height:9.50px;background:#2f3540;"></div>
<svg style="position:absolute;left:62px;top:248.3px" width="5" height="6"><path d="M2.5 0.3 C4.2 0.3 4.7 2 4.7 3 C4.7 4.6 3.7 5.6 2.5 5.6 C1.3 5.6 0.3 4.6 0.3 3 C0.3 2 0.8 0.3 2.5 0.3Z" fill="#3a8ae8"/><rect x="2" y="1.3" width="1" height="3.2" fill="#fff"/></svg>
<svg style="position:absolute;left:402px;top:248.5px" width="3" height="5"><line x1="2.5" y1="0.5" x2="0.5" y2="4.5" stroke="#ddd" stroke-width="0.8"/></svg>
<div style="left:411.50px;top:251.00px;width:1.00px;height:1.00px;background:#ccc;"></div>
<div style="left:416.50px;top:250.50px;width:2.50px;height:2.00px;background:#ccc;"></div>
<div style="left:419.50px;top:250.00px;width:1.00px;height:2.50px;background:#bbb;"></div>
<svg style="position:absolute;left:421px;top:249px" width="4" height="5"><path d="M0.5 1.5 L1.5 1.5 L3 0.5 L3 4.5 L1.5 3.5 L0.5 3.5Z" fill="#ccc"/></svg>
<p class="t" style="left:431.0px;top:248.7px;width:9.0px;font-size:3.1px;background-image:linear-gradient(90deg,#adadad,#adadad);opacity:1.00">sobrepos</p>
<p class="t" style="left:429.5px;top:252.0px;width:13.0px;font-size:3.1px;background-image:linear-gradient(90deg,#adadad,#adadad,#909090,#adadad);opacity:1.00">compartir </p>
<div style="left:445.50px;top:249.00px;width:4.50px;height:3.60px;background:#e0e0e0;"></div>
<div style="left:448.00px;top:252.00px;width:2.00px;height:1.50px;background:#cfcfcf;"></div>
<div style="left:446.50px;top:250.00px;width:2.50px;height:0.60px;background:#555;"></div>
</div>
<div class="p j" style="top:698.5px">Colocamos los siguientes datos. En ráster o dato de origen de entidad: núcleos, el nombre</div>
<div class="p j" style="top:713.2px">de salida de la acumulaión será: Distancia_Ejercicio, en ráster de superficie de entrada:</div>
<div class="p j" style="top:727.6px">MDE, en ráster de dirección su nombre de salida es: direct_ejercicio y en método de</div>
<div class="p" style="top:742.5px;letter-spacing:0.12px">distancia lo dejamos en planar.</div>
</body></html>
